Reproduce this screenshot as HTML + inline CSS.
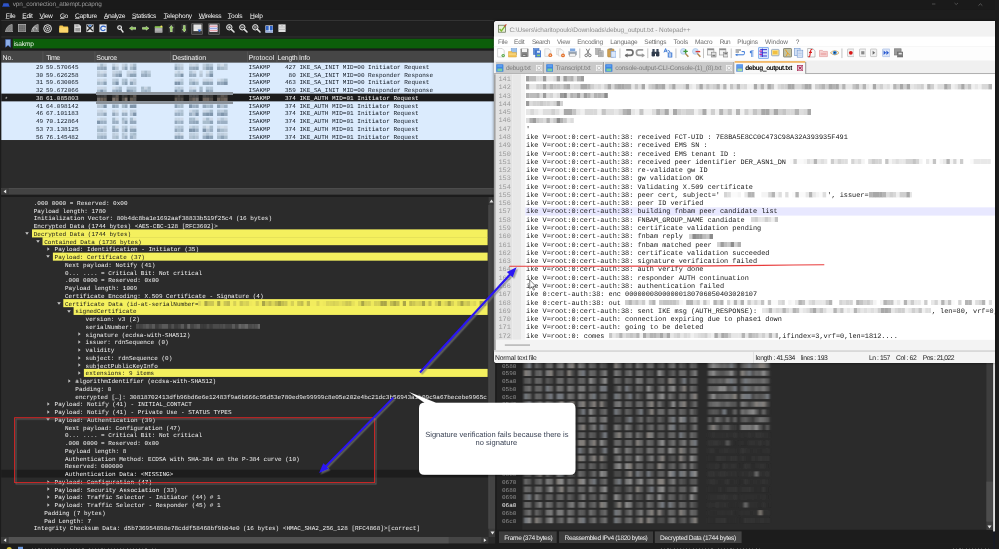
<!DOCTYPE html>
<html><head><meta charset="utf-8"><title>vpn_connection_attempt.pcapng</title>
<style>
html,body{margin:0;padding:0;background:#2b2b2b;}
body{width:999px;height:549px;overflow:hidden;position:relative;font-family:"Liberation Sans",sans-serif;}
#r{position:absolute;left:0;top:0;width:999px;height:549px;overflow:hidden;background:#2b2b2b;will-change:transform;}
#r div,#r span,#r svg{position:absolute;}
#r span{white-space:pre;line-height:1.2;text-rendering:geometricPrecision;}
.s{font-family:"Liberation Sans",sans-serif;}
.m{font-family:"Liberation Mono",monospace;}
u{text-decoration:underline;text-underline-offset:0.1px;text-decoration-thickness:0.5px;text-decoration-color:rgba(255,255,255,.55);}
</style></head><body><div id="r">
<svg style="left:0px;top:0px" width="999" height="22"><rect x="0.00" y="0.00" width="999.00" height="21.50" fill="#1d1d1d"/></svg>
<svg style="left:0px;top:0px" width="999" height="10"><rect x="0.00" y="0.00" width="999.00" height="9.80" fill="#1a1a1a"/></svg>
<svg style="left:0px;top:20px" width="494" height="2"><rect x="0.00" y="0.20" width="494.00" height="0.90" fill="#3a3a3a"/></svg>
<svg style="left:0px;top:21px" width="494" height="17"><rect x="0.00" y="0.10" width="494.00" height="16.20" fill="#1f1f1f"/></svg>
<svg style="left:0px;top:36px" width="494" height="2"><rect x="0.00" y="0.60" width="494.00" height="0.90" fill="#3a3a3a"/></svg>
<svg style="left:0px;top:37px" width="494" height="14"><rect x="0.00" y="0.50" width="494.00" height="13.00" fill="#1f1f1f"/></svg>
<svg style="left:0px;top:48px" width="494" height="3"><rect x="0.00" y="0.40" width="494.00" height="2.40" fill="#1b1b1b"/></svg>
<svg style="left:1.7px;top:2.8px" width="8" height="4.4" viewBox="0 0 9 5"><path d="M1.6 0.3 L7.2 0.3 L8.6 4.4 L0.3 4.4 Z" fill="#2f55c8"/><path d="M0.3 3.8 L8.6 3.8 L8.6 4.6 L0.3 4.6Z" fill="#1b3a9a"/></svg>
<span class="s" style="left:12.80px;top:1px;font-size:6.4px;color:#9a9a9a;letter-spacing:-0.121px;">vpn_connection_attempt.pcapng</span>
<svg style="left:932px;top:3px" width="4" height="2"><rect x="0.00" y="0.60" width="3.40" height="0.80" fill="#5a5a5a"/></svg>
<svg style="left:952px;top:2px" width="34" height="6" viewBox="0 0 34 6"><path d="M2.5 1 L4.2 2.6 L6 1" stroke="#5a5a5a" stroke-width="0.8" fill="none"/><path d="M26.5 3.6 L28.4 1.8 L30.3 3.6" stroke="#666" stroke-width="0.8" fill="none"/></svg>
<span class="s" style="left:5.7px;top:13px;font-size:6.6px;color:#f2f2f2;letter-spacing:-0.259px"><u>F</u>ile</span>
<span class="s" style="left:22.3px;top:13px;font-size:6.6px;color:#f2f2f2;letter-spacing:-0.293px"><u>E</u>dit</span>
<span class="s" style="left:39.5px;top:13px;font-size:6.6px;color:#f2f2f2;letter-spacing:-0.297px"><u>V</u>iew</span>
<span class="s" style="left:60px;top:13px;font-size:6.6px;color:#f2f2f2;letter-spacing:-0.652px"><u>G</u>o</span>
<span class="s" style="left:75px;top:13px;font-size:6.6px;color:#f2f2f2;letter-spacing:-0.212px"><u>C</u>apture</span>
<span class="s" style="left:104px;top:13px;font-size:6.6px;color:#f2f2f2;letter-spacing:-0.354px"><u>A</u>nalyze</span>
<span class="s" style="left:132px;top:13px;font-size:6.6px;color:#f2f2f2;letter-spacing:-0.221px"><u>S</u>tatistics</span>
<span class="s" style="left:163.7px;top:13px;font-size:6.6px;color:#f2f2f2;letter-spacing:-0.199px"><u>T</u>elephony</span>
<span class="s" style="left:198.7px;top:13px;font-size:6.6px;color:#f2f2f2;letter-spacing:-0.350px"><u>W</u>ireless</span>
<span class="s" style="left:227.8px;top:13px;font-size:6.6px;color:#f2f2f2;letter-spacing:-0.142px"><u>T</u>ools</span>
<span class="s" style="left:250px;top:13px;font-size:6.6px;color:#f2f2f2;letter-spacing:-0.219px"><u>H</u>elp</span>
<svg style="left:4.80px;top:23.90px" width="8.4" height="8.6" viewBox="0 0 8.4 8.6"><path d="M0.4 8.1 Q1 2.2 6.4 0.5 L7.2 0.5 L7.2 6.8 L8 8.1 Z" fill="#7c7c7c" stroke="#c0c0c0" stroke-width="0.6"/><path d="M2 7.4 Q3 4 6.4 2.4 M4 7.6 Q4.6 5.4 6.6 4.6" stroke="#a0a0a0" stroke-width="0.4" fill="none"/></svg>
<svg style="left:17.80px;top:24.00px" width="8.4" height="8.4" viewBox="0 0 8.4 8.4"><rect x="0.5" y="0.5" width="7.4" height="7.4" fill="#6a6a6a" stroke="#b4b4b4" stroke-width="0.8"/><path d="M2.9 0.8 V7.6 M5.5 0.8 V7.6 M0.8 2.9 H7.6 M0.8 5.5 H7.6" stroke="#7e7e7e" stroke-width="0.5"/></svg>
<svg style="left:30.60px;top:23.90px" width="8.4" height="8.6" viewBox="0 0 8.4 8.6"><path d="M0.4 8.1 Q1 2.2 6.4 0.5 L7.2 0.5 L7.2 6.8 L8 8.1 Z" fill="#7c7c7c" stroke="#c0c0c0" stroke-width="0.6"/><path d="M3 6.6 A1.9 1.9 0 1 1 5.6 5.4" stroke="#dadada" stroke-width="0.7" fill="none"/></svg>
<svg style="left:43.20px;top:23.50px" width="9.2" height="9.2" viewBox="0 0 9.2 9.2"><circle cx="4.6" cy="4.6" r="3.9" fill="#2a2a2a" stroke="#e4e4e4" stroke-width="1"/><circle cx="4.6" cy="4.6" r="2.1" fill="none" stroke="#dcdcdc" stroke-width="0.8"/><circle cx="4.6" cy="4.6" r="0.8" fill="#f0f0f0"/></svg>
<svg style="left:59.45px;top:24.60px" width="9.5" height="8" viewBox="0 0 9.5 8"><path d="M0.3 1.2 Q0.3 0.5 1 0.5 L3.6 0.5 L4.5 1.6 L8.6 1.6 Q9.2 1.6 9.2 2.3 L9.2 7 Q9.2 7.6 8.6 7.6 L1 7.6 Q0.3 7.6 0.3 7 Z" fill="#f5c64a"/><rect x="0.3" y="2.6" width="8.9" height="5" rx="0.5" fill="#fbd76c"/></svg>
<svg style="left:73.75px;top:24.35px" width="7.5" height="8.5" viewBox="0 0 7.5 8.5"><path d="M0.4 0.4 L5 0.4 L7.1 2.4 L7.1 8.1 L0.4 8.1 Z" fill="#dcdcdc" stroke="#f4f4f4" stroke-width="0.4"/><rect x="1.3" y="4" width="4.9" height="3.4" fill="#9b9b9b"/><rect x="1.5" y="1.2" width="3" height="1.6" fill="#aaa"/></svg>
<svg style="left:86.00px;top:24.35px" width="8" height="8.5" viewBox="0 0 8 8.5"><rect x="0.4" y="0.4" width="7.2" height="7.7" fill="#e6e6e6"/><path d="M1 1.2 L7 7 M7 1.2 L1 7" stroke="#2a2a2a" stroke-width="1.3"/><rect x="2.6" y="0.8" width="2.8" height="1.8" fill="#4f88d8"/></svg>
<svg style="left:99.00px;top:24.35px" width="8" height="8.5" viewBox="0 0 8 8.5"><rect x="0.4" y="0.4" width="7.2" height="7.7" fill="#e8ecf2"/><path d="M5.9 3 A2.3 2.3 0 1 0 6.2 5.2" stroke="#2f62c4" stroke-width="1.2" fill="none"/><path d="M4.6 1.8 L6.8 2 L6.4 4 Z" fill="#2f62c4"/></svg>
<svg style="left:116.70px;top:24.60px" width="7" height="8" viewBox="0 0 7 8"><circle cx="2.6" cy="2.6" r="1.9" fill="#3a3a3a" stroke="#f0f0f0" stroke-width="1.1"/><path d="M4.1 4.3 L6 7" stroke="#e8e8e8" stroke-width="1.4" stroke-linecap="round"/></svg>
<svg style="left:128.90px;top:26.10px" width="7.4" height="4.6" viewBox="0 0 7.4 4.6"><path d="M0.4 2.3 L3.2 0.4 L3.2 1.4 L7 1.4 L7 3.2 L3.2 3.2 L3.2 4.2 Z" fill="#8ccc52" stroke="#e6f6d2" stroke-width="0.5"/></svg>
<svg style="left:141.50px;top:26.10px" width="7.4" height="4.6" viewBox="0 0 7.4 4.6"><path d="M7 2.3 L4.2 0.4 L4.2 1.4 L0.4 1.4 L0.4 3.2 L4.2 3.2 L4.2 4.2 Z" fill="#8ccc52" stroke="#e6f6d2" stroke-width="0.5"/></svg>
<svg style="left:154.10px;top:24.60px" width="9" height="8" viewBox="0 0 9 8"><rect x="0.8" y="2.2" width="7.6" height="5.4" fill="#d4d4d4"/><path d="M1 3.8 H8.2 M1 5.2 H8.2 M1 6.6 H8.2" stroke="#6d6d6d" stroke-width="0.55"/><rect x="0.8" y="1.2" width="7.6" height="1.6" fill="#86c54a"/><circle cx="7.4" cy="1.4" r="1" fill="#f2e060"/></svg>
<svg style="left:168px;top:24px" width="7" height="10"><rect x="0.40" y="0.00" width="6.40" height="9.20" fill="#2c2c2c"/></svg>
<svg style="left:181px;top:24px" width="7" height="10"><rect x="0.00" y="0.00" width="6.40" height="9.20" fill="#2c2c2c"/></svg>
<svg style="left:169.20px;top:24.70px" width="4.6" height="7.4" viewBox="0 0 4.6 7.4"><path d="M2.3 0.4 L4.2 3 L3.2 3 L3.2 7 L1.4 7 L1.4 3 L0.4 3 Z" fill="#8ccc52" stroke="#e6f6d2" stroke-width="0.5"/></svg>
<svg style="left:181.90px;top:24.70px" width="4.6" height="7.4" viewBox="0 0 4.6 7.4"><path d="M2.3 7 L4.2 4.4 L3.2 4.4 L3.2 0.4 L1.4 0.4 L1.4 4.4 L0.4 4.4 Z" fill="#8ccc52" stroke="#e6f6d2" stroke-width="0.5"/></svg>
<div style="left:191.20px;top:22.60px;width:12.00px;height:12.20px;background:#3a3a3a;border:0.6px solid #555;box-sizing:border-box;border-radius:1px;"></div>
<svg style="left:192.70px;top:24.35px" width="9" height="8.5" viewBox="0 0 9 8.5"><rect x="0.5" y="0.5" width="8" height="6.6" fill="#ececec"/><path d="M1 2 H8 M1 3.4 H8 M1 4.8 H8" stroke="#d0d0d0" stroke-width="0.5"/><path d="M4.6 5.6 L8.4 5.6 L6.5 8.2 Z" fill="#2d63c8"/></svg>
<div style="left:207.60px;top:22.60px;width:12.00px;height:12.20px;background:#3a3a3a;border:0.6px solid #555;box-sizing:border-box;border-radius:1px;"></div>
<svg style="left:209.10px;top:24.35px" width="9" height="8.5" viewBox="0 0 9 8.5"><rect x="0.5" y="0.5" width="8" height="7.5" fill="#e6e6f0"/><rect x="0.5" y="1.6" width="8" height="1.3" fill="#e8a0a8"/><rect x="0.5" y="3.8" width="8" height="1.3" fill="#98a8e8"/><rect x="0.5" y="6" width="8" height="1.2" fill="#e8a0a8"/></svg>
<svg style="left:226.10px;top:24.10px" width="9" height="9" viewBox="0 0 9 9"><circle cx="3.3" cy="3.3" r="2.7" fill="#3c3c3c" stroke="#ececec" stroke-width="1"/><path d="M5.4 5.4 L8 8" stroke="#e0e0e0" stroke-width="1.5" stroke-linecap="round"/><path d="M1.9 3.3 H4.7 M3.3 1.9 V4.7" stroke="#fff" stroke-width="0.7"/></svg>
<svg style="left:238.90px;top:24.10px" width="9" height="9" viewBox="0 0 9 9"><circle cx="3.3" cy="3.3" r="2.7" fill="#3c3c3c" stroke="#ececec" stroke-width="1"/><path d="M5.4 5.4 L8 8" stroke="#e0e0e0" stroke-width="1.5" stroke-linecap="round"/><path d="M1.9 3.3 H4.7" stroke="#fff" stroke-width="0.7"/></svg>
<svg style="left:251.90px;top:24.10px" width="9" height="9" viewBox="0 0 9 9"><circle cx="3.3" cy="3.3" r="2.7" fill="#3c3c3c" stroke="#ececec" stroke-width="1"/><path d="M5.4 5.4 L8 8" stroke="#e0e0e0" stroke-width="1.5" stroke-linecap="round"/><path d="M2.1 2.8 H4.5 M2.1 3.9 H4.5" stroke="#fff" stroke-width="0.55"/></svg>
<svg style="left:264.75px;top:24.60px" width="8.5" height="8" viewBox="0 0 8.5 8"><rect x="0.4" y="0.4" width="7.7" height="7.2" fill="#e4eaf4"/><rect x="0.8" y="1" width="2.9" height="4.4" fill="#2f62c4"/><rect x="4.8" y="1" width="2.9" height="4.4" fill="#2f62c4"/><rect x="0.4" y="6" width="7.7" height="1.6" fill="#9ab0dc"/></svg>
<svg style="left:277.80px;top:24.40px" width="8" height="8.4" viewBox="0 0 8 8.4"><rect x="0.4" y="0.4" width="7.2" height="7.6" fill="#e0e0e0"/><path d="M0.4 3 H7.6 M0.4 5.4 H7.6" stroke="#ababab" stroke-width="0.7"/><rect x="3" y="0.8" width="2" height="1.6" fill="#c4c4c4"/></svg>
<svg style="left:4.6px;top:39.4px" width="6" height="8.6" viewBox="0 0 6 8.6"><path d="M0.6 0.4 H5.4 V8.2 L3 6.2 L0.6 8.2 Z" fill="#8fb0e8" stroke="#4a6fbf" stroke-width="0.6"/></svg>
<svg style="left:12px;top:38px" width="483" height="11"><rect x="0.80" y="0.80" width="481.50" height="9.60" fill="#0c5e0a"/></svg>
<span class="s" style="left:13.80px;top:41px;font-size:6.6px;color:#e8f2e6;letter-spacing:-0.151px;">isakmp</span>
<svg style="left:0px;top:50px" width="495" height="13"><rect x="0.80" y="0.70" width="493.50" height="11.90" fill="#464646"/></svg>
<svg style="left:42px;top:51px" width="2" height="11"><rect x="0.60" y="0.50" width="0.70" height="10.40" fill="#5a5a5a"/></svg>
<svg style="left:94px;top:51px" width="2" height="11"><rect x="0.60" y="0.50" width="0.70" height="10.40" fill="#5a5a5a"/></svg>
<svg style="left:170px;top:51px" width="1" height="11"><rect x="0.00" y="0.50" width="0.70" height="10.40" fill="#5a5a5a"/></svg>
<svg style="left:247px;top:51px" width="1" height="11"><rect x="0.30" y="0.50" width="0.70" height="10.40" fill="#5a5a5a"/></svg>
<svg style="left:276px;top:51px" width="2" height="11"><rect x="0.60" y="0.50" width="0.70" height="10.40" fill="#5a5a5a"/></svg>
<svg style="left:298px;top:51px" width="1" height="11"><rect x="0.00" y="0.50" width="0.70" height="10.40" fill="#5a5a5a"/></svg>
<span class="s" style="left:2.60px;top:55px;font-size:7.0px;color:#f4f4f4;letter-spacing:-0.098px;">No.</span>
<span class="s" style="left:46.20px;top:55px;font-size:7.0px;color:#f4f4f4;letter-spacing:-0.424px;">Time</span>
<span class="s" style="left:96.20px;top:55px;font-size:7.0px;color:#f4f4f4;letter-spacing:-0.230px;">Source</span>
<span class="s" style="left:172.20px;top:55px;font-size:7.0px;color:#f4f4f4;letter-spacing:-0.111px;">Destination</span>
<span class="s" style="left:248.50px;top:55px;font-size:7.0px;color:#f4f4f4;letter-spacing:0.015px;">Protocol</span>
<span class="s" style="left:277.50px;top:55px;font-size:7.0px;color:#f4f4f4;letter-spacing:-0.268px;">Length</span>
<span class="s" style="left:299.00px;top:55px;font-size:7.0px;color:#f4f4f4;letter-spacing:-0.219px;">Info</span>
<svg style="left:1px;top:62px" width="494" height="79"><rect x="0.20" y="0.60" width="493.00" height="77.50" fill="#dbebfd"/></svg>
<svg style="left:1px;top:93px" width="494" height="9"><rect x="0.20" y="0.60" width="493.00" height="7.75" fill="#1c1c1c"/></svg>
<span class="m" style="left:35.99px;top:64px;font-size:6.0px;color:#121a24;letter-spacing:0.01px;">29</span>
<span class="m" style="left:46.00px;top:64px;font-size:6.0px;color:#121a24;letter-spacing:0.01px;">59.570645</span>
<span class="m" style="left:248.60px;top:64px;font-size:6.0px;color:#121a24;letter-spacing:0.01px;">ISAKMP</span>
<span class="m" style="left:284.99px;top:64px;font-size:6.0px;color:#121a24;letter-spacing:0.01px;">427</span>
<span class="m" style="left:299.50px;top:64px;font-size:6.0px;color:#121a24;letter-spacing:0.01px;">IKE_SA_INIT MID=00 Initiator Request</span>
<svg style="left:97.20px;top:62.60px;filter:blur(0.5px)" width="40.30" height="7.75"><rect x="0.00" y="0.6" width="3.30" height="3.2" fill="#d2deea"/><rect x="0.00" y="3.6" width="3.30" height="3.4" fill="#9cb0c4"/><rect x="3.20" y="0.6" width="3.30" height="3.2" fill="#a8bccc"/><rect x="3.20" y="3.6" width="3.30" height="3.4" fill="#94a8bc"/><rect x="6.40" y="0.6" width="3.30" height="3.2" fill="#c6d4e2"/><rect x="6.40" y="3.6" width="3.30" height="3.4" fill="#8ea4b8"/><rect x="15.20" y="0.6" width="3.30" height="3.2" fill="#becedd"/><rect x="15.20" y="3.6" width="3.30" height="3.4" fill="#8ea4b8"/><rect x="18.40" y="0.6" width="3.30" height="3.2" fill="#d2deea"/><rect x="18.40" y="3.6" width="3.30" height="3.4" fill="#b4c4d4"/><rect x="24.80" y="0.6" width="2.90" height="3.2" fill="#c6d4e2"/><rect x="24.80" y="3.6" width="2.90" height="3.4" fill="#b4c4d4"/><rect x="27.60" y="0.6" width="2.90" height="3.2" fill="#b4c6d6"/><rect x="27.60" y="3.6" width="2.90" height="3.4" fill="#8ea4b8"/><rect x="32.80" y="0.6" width="3.35" height="3.2" fill="#c6d4e2"/><rect x="32.80" y="3.6" width="3.35" height="3.4" fill="#a8bccc"/><rect x="36.05" y="0.6" width="3.35" height="3.2" fill="#a8bccc"/><rect x="36.05" y="3.6" width="3.35" height="3.4" fill="#8ea4b8"/></svg>
<svg style="left:172.50px;top:62.60px;filter:blur(0.5px)" width="55.50" height="7.75"><rect x="1.60" y="0.6" width="3.03" height="3.2" fill="#b4c6d6"/><rect x="1.60" y="3.6" width="3.03" height="3.4" fill="#8ea4b8"/><rect x="4.53" y="0.6" width="3.03" height="3.2" fill="#becedd"/><rect x="4.53" y="3.6" width="3.03" height="3.4" fill="#a8bccc"/><rect x="7.47" y="0.6" width="3.03" height="3.2" fill="#c6d4e2"/><rect x="7.47" y="3.6" width="3.03" height="3.4" fill="#b4c4d4"/><rect x="16.00" y="0.6" width="3.30" height="3.2" fill="#c6d4e2"/><rect x="16.00" y="3.6" width="3.30" height="3.4" fill="#9cb0c4"/><rect x="19.20" y="0.6" width="3.30" height="3.2" fill="#ccd8e6"/><rect x="19.20" y="3.6" width="3.30" height="3.4" fill="#94a8bc"/><rect x="22.40" y="0.6" width="3.30" height="3.2" fill="#becedd"/><rect x="22.40" y="3.6" width="3.30" height="3.4" fill="#8ea4b8"/><rect x="29.60" y="0.6" width="3.57" height="3.2" fill="#becedd"/><rect x="29.60" y="3.6" width="3.57" height="3.4" fill="#b4c4d4"/><rect x="33.07" y="0.6" width="3.57" height="3.2" fill="#a8bccc"/><rect x="33.07" y="3.6" width="3.57" height="3.4" fill="#8ea4b8"/><rect x="36.53" y="0.6" width="3.57" height="3.2" fill="#b4c6d6"/><rect x="36.53" y="3.6" width="3.57" height="3.4" fill="#8ea4b8"/><rect x="44.00" y="0.6" width="3.60" height="3.2" fill="#becedd"/><rect x="44.00" y="3.6" width="3.60" height="3.4" fill="#9cb0c4"/><rect x="47.50" y="0.6" width="3.60" height="3.2" fill="#d2deea"/><rect x="47.50" y="3.6" width="3.60" height="3.4" fill="#a8bccc"/><rect x="51.00" y="0.6" width="3.60" height="3.2" fill="#b4c6d6"/><rect x="51.00" y="3.6" width="3.60" height="3.4" fill="#b4c4d4"/></svg>
<span class="m" style="left:35.99px;top:72px;font-size:6.0px;color:#121a24;letter-spacing:0.01px;">30</span>
<span class="m" style="left:46.00px;top:72px;font-size:6.0px;color:#121a24;letter-spacing:0.01px;">59.626258</span>
<span class="m" style="left:248.60px;top:72px;font-size:6.0px;color:#121a24;letter-spacing:0.01px;">ISAKMP</span>
<span class="m" style="left:288.59px;top:72px;font-size:6.0px;color:#121a24;letter-spacing:0.01px;">80</span>
<span class="m" style="left:299.50px;top:72px;font-size:6.0px;color:#121a24;letter-spacing:0.01px;">IKE_SA_INIT MID=00 Responder Response</span>
<svg style="left:97.20px;top:70.35px;filter:blur(0.5px)" width="54.70" height="7.75"><rect x="0.00" y="0.6" width="3.30" height="3.2" fill="#c6d4e2"/><rect x="0.00" y="3.6" width="3.30" height="3.4" fill="#b4c4d4"/><rect x="3.20" y="0.6" width="3.30" height="3.2" fill="#d2deea"/><rect x="3.20" y="3.6" width="3.30" height="3.4" fill="#b4c4d4"/><rect x="6.40" y="0.6" width="3.30" height="3.2" fill="#ccd8e6"/><rect x="6.40" y="3.6" width="3.30" height="3.4" fill="#9cb0c4"/><rect x="15.20" y="0.6" width="3.30" height="3.2" fill="#c6d4e2"/><rect x="15.20" y="3.6" width="3.30" height="3.4" fill="#b4c4d4"/><rect x="18.40" y="0.6" width="3.30" height="3.2" fill="#becedd"/><rect x="18.40" y="3.6" width="3.30" height="3.4" fill="#94a8bc"/><rect x="21.60" y="0.6" width="3.30" height="3.2" fill="#b4c6d6"/><rect x="21.60" y="3.6" width="3.30" height="3.4" fill="#8096ac"/><rect x="29.60" y="0.6" width="3.33" height="3.2" fill="#c6d4e2"/><rect x="29.60" y="3.6" width="3.33" height="3.4" fill="#b4c4d4"/><rect x="32.83" y="0.6" width="3.33" height="3.2" fill="#ccd8e6"/><rect x="32.83" y="3.6" width="3.33" height="3.4" fill="#8ea4b8"/><rect x="36.07" y="0.6" width="3.33" height="3.2" fill="#becedd"/><rect x="36.07" y="3.6" width="3.33" height="3.4" fill="#8ea4b8"/><rect x="44.00" y="0.6" width="3.33" height="3.2" fill="#becedd"/><rect x="44.00" y="3.6" width="3.33" height="3.4" fill="#9cb0c4"/><rect x="47.23" y="0.6" width="3.33" height="3.2" fill="#a8bccc"/><rect x="47.23" y="3.6" width="3.33" height="3.4" fill="#94a8bc"/><rect x="50.47" y="0.6" width="3.33" height="3.2" fill="#becedd"/><rect x="50.47" y="3.6" width="3.33" height="3.4" fill="#a8bccc"/></svg>
<svg style="left:172.50px;top:70.35px;filter:blur(0.5px)" width="41.00" height="7.75"><rect x="1.60" y="0.6" width="3.03" height="3.2" fill="#d2deea"/><rect x="1.60" y="3.6" width="3.03" height="3.4" fill="#a8bccc"/><rect x="4.53" y="0.6" width="3.03" height="3.2" fill="#becedd"/><rect x="4.53" y="3.6" width="3.03" height="3.4" fill="#a8bccc"/><rect x="7.47" y="0.6" width="3.03" height="3.2" fill="#d2deea"/><rect x="7.47" y="3.6" width="3.03" height="3.4" fill="#8096ac"/><rect x="16.00" y="0.6" width="3.70" height="3.2" fill="#b4c6d6"/><rect x="16.00" y="3.6" width="3.70" height="3.4" fill="#9cb0c4"/><rect x="19.60" y="0.6" width="3.70" height="3.2" fill="#ccd8e6"/><rect x="19.60" y="3.6" width="3.70" height="3.4" fill="#9cb0c4"/><rect x="26.40" y="0.6" width="3.30" height="3.2" fill="#c6d4e2"/><rect x="26.40" y="3.6" width="3.30" height="3.4" fill="#b4c4d4"/><rect x="32.80" y="0.6" width="3.70" height="3.2" fill="#d2deea"/><rect x="32.80" y="3.6" width="3.70" height="3.4" fill="#b4c4d4"/><rect x="36.40" y="0.6" width="3.70" height="3.2" fill="#a8bccc"/><rect x="36.40" y="3.6" width="3.70" height="3.4" fill="#8096ac"/></svg>
<span class="m" style="left:35.99px;top:79px;font-size:6.0px;color:#121a24;letter-spacing:0.01px;">31</span>
<span class="m" style="left:46.00px;top:79px;font-size:6.0px;color:#121a24;letter-spacing:0.01px;">59.630065</span>
<span class="m" style="left:248.60px;top:79px;font-size:6.0px;color:#121a24;letter-spacing:0.01px;">ISAKMP</span>
<span class="m" style="left:284.99px;top:79px;font-size:6.0px;color:#121a24;letter-spacing:0.01px;">463</span>
<span class="m" style="left:299.50px;top:79px;font-size:6.0px;color:#121a24;letter-spacing:0.01px;">IKE_SA_INIT MID=00 Initiator Request</span>
<svg style="left:97.20px;top:78.10px;filter:blur(0.5px)" width="40.30" height="7.75"><rect x="0.00" y="0.6" width="3.30" height="3.2" fill="#ccd8e6"/><rect x="0.00" y="3.6" width="3.30" height="3.4" fill="#a8bccc"/><rect x="3.20" y="0.6" width="3.30" height="3.2" fill="#d2deea"/><rect x="3.20" y="3.6" width="3.30" height="3.4" fill="#b4c4d4"/><rect x="6.40" y="0.6" width="3.30" height="3.2" fill="#c6d4e2"/><rect x="6.40" y="3.6" width="3.30" height="3.4" fill="#8ea4b8"/><rect x="15.20" y="0.6" width="3.30" height="3.2" fill="#becedd"/><rect x="15.20" y="3.6" width="3.30" height="3.4" fill="#a8bccc"/><rect x="18.40" y="0.6" width="3.30" height="3.2" fill="#b4c6d6"/><rect x="18.40" y="3.6" width="3.30" height="3.4" fill="#8096ac"/><rect x="24.80" y="0.6" width="2.90" height="3.2" fill="#b4c6d6"/><rect x="24.80" y="3.6" width="2.90" height="3.4" fill="#a8bccc"/><rect x="27.60" y="0.6" width="2.90" height="3.2" fill="#a8bccc"/><rect x="27.60" y="3.6" width="2.90" height="3.4" fill="#8ea4b8"/><rect x="32.80" y="0.6" width="3.35" height="3.2" fill="#ccd8e6"/><rect x="32.80" y="3.6" width="3.35" height="3.4" fill="#8ea4b8"/><rect x="36.05" y="0.6" width="3.35" height="3.2" fill="#becedd"/><rect x="36.05" y="3.6" width="3.35" height="3.4" fill="#b4c4d4"/></svg>
<svg style="left:172.50px;top:78.10px;filter:blur(0.5px)" width="55.50" height="7.75"><rect x="1.60" y="0.6" width="3.03" height="3.2" fill="#d2deea"/><rect x="1.60" y="3.6" width="3.03" height="3.4" fill="#8096ac"/><rect x="4.53" y="0.6" width="3.03" height="3.2" fill="#ccd8e6"/><rect x="4.53" y="3.6" width="3.03" height="3.4" fill="#8096ac"/><rect x="7.47" y="0.6" width="3.03" height="3.2" fill="#becedd"/><rect x="7.47" y="3.6" width="3.03" height="3.4" fill="#a8bccc"/><rect x="16.00" y="0.6" width="3.30" height="3.2" fill="#becedd"/><rect x="16.00" y="3.6" width="3.30" height="3.4" fill="#a8bccc"/><rect x="19.20" y="0.6" width="3.30" height="3.2" fill="#c6d4e2"/><rect x="19.20" y="3.6" width="3.30" height="3.4" fill="#8ea4b8"/><rect x="22.40" y="0.6" width="3.30" height="3.2" fill="#d2deea"/><rect x="22.40" y="3.6" width="3.30" height="3.4" fill="#a8bccc"/><rect x="29.60" y="0.6" width="3.57" height="3.2" fill="#ccd8e6"/><rect x="29.60" y="3.6" width="3.57" height="3.4" fill="#94a8bc"/><rect x="33.07" y="0.6" width="3.57" height="3.2" fill="#c6d4e2"/><rect x="33.07" y="3.6" width="3.57" height="3.4" fill="#8ea4b8"/><rect x="36.53" y="0.6" width="3.57" height="3.2" fill="#ccd8e6"/><rect x="36.53" y="3.6" width="3.57" height="3.4" fill="#94a8bc"/><rect x="44.00" y="0.6" width="3.60" height="3.2" fill="#d2deea"/><rect x="44.00" y="3.6" width="3.60" height="3.4" fill="#94a8bc"/><rect x="47.50" y="0.6" width="3.60" height="3.2" fill="#becedd"/><rect x="47.50" y="3.6" width="3.60" height="3.4" fill="#94a8bc"/><rect x="51.00" y="0.6" width="3.60" height="3.2" fill="#a8bccc"/><rect x="51.00" y="3.6" width="3.60" height="3.4" fill="#8096ac"/></svg>
<span class="m" style="left:35.99px;top:87px;font-size:6.0px;color:#121a24;letter-spacing:0.01px;">32</span>
<span class="m" style="left:46.00px;top:87px;font-size:6.0px;color:#121a24;letter-spacing:0.01px;">59.672066</span>
<span class="m" style="left:248.60px;top:87px;font-size:6.0px;color:#121a24;letter-spacing:0.01px;">ISAKMP</span>
<span class="m" style="left:284.99px;top:87px;font-size:6.0px;color:#121a24;letter-spacing:0.01px;">359</span>
<span class="m" style="left:299.50px;top:87px;font-size:6.0px;color:#121a24;letter-spacing:0.01px;">IKE_SA_INIT MID=00 Responder Response</span>
<svg style="left:97.20px;top:85.85px;filter:blur(0.5px)" width="54.70" height="7.75"><rect x="0.00" y="0.6" width="3.30" height="3.2" fill="#ccd8e6"/><rect x="0.00" y="3.6" width="3.30" height="3.4" fill="#a8bccc"/><rect x="3.20" y="0.6" width="3.30" height="3.2" fill="#ccd8e6"/><rect x="3.20" y="3.6" width="3.30" height="3.4" fill="#8096ac"/><rect x="6.40" y="0.6" width="3.30" height="3.2" fill="#c6d4e2"/><rect x="6.40" y="3.6" width="3.30" height="3.4" fill="#a8bccc"/><rect x="15.20" y="0.6" width="3.30" height="3.2" fill="#d2deea"/><rect x="15.20" y="3.6" width="3.30" height="3.4" fill="#9cb0c4"/><rect x="18.40" y="0.6" width="3.30" height="3.2" fill="#becedd"/><rect x="18.40" y="3.6" width="3.30" height="3.4" fill="#8ea4b8"/><rect x="21.60" y="0.6" width="3.30" height="3.2" fill="#a8bccc"/><rect x="21.60" y="3.6" width="3.30" height="3.4" fill="#8ea4b8"/><rect x="29.60" y="0.6" width="3.33" height="3.2" fill="#b4c6d6"/><rect x="29.60" y="3.6" width="3.33" height="3.4" fill="#8096ac"/><rect x="32.83" y="0.6" width="3.33" height="3.2" fill="#b4c6d6"/><rect x="32.83" y="3.6" width="3.33" height="3.4" fill="#94a8bc"/><rect x="36.07" y="0.6" width="3.33" height="3.2" fill="#b4c6d6"/><rect x="36.07" y="3.6" width="3.33" height="3.4" fill="#a8bccc"/><rect x="44.00" y="0.6" width="3.33" height="3.2" fill="#a8bccc"/><rect x="44.00" y="3.6" width="3.33" height="3.4" fill="#a8bccc"/><rect x="47.23" y="0.6" width="3.33" height="3.2" fill="#c6d4e2"/><rect x="47.23" y="3.6" width="3.33" height="3.4" fill="#9cb0c4"/><rect x="50.47" y="0.6" width="3.33" height="3.2" fill="#a8bccc"/><rect x="50.47" y="3.6" width="3.33" height="3.4" fill="#a8bccc"/></svg>
<svg style="left:172.50px;top:85.85px;filter:blur(0.5px)" width="41.00" height="7.75"><rect x="1.60" y="0.6" width="3.03" height="3.2" fill="#becedd"/><rect x="1.60" y="3.6" width="3.03" height="3.4" fill="#8096ac"/><rect x="4.53" y="0.6" width="3.03" height="3.2" fill="#b4c6d6"/><rect x="4.53" y="3.6" width="3.03" height="3.4" fill="#a8bccc"/><rect x="7.47" y="0.6" width="3.03" height="3.2" fill="#becedd"/><rect x="7.47" y="3.6" width="3.03" height="3.4" fill="#8096ac"/><rect x="16.00" y="0.6" width="3.70" height="3.2" fill="#ccd8e6"/><rect x="16.00" y="3.6" width="3.70" height="3.4" fill="#a8bccc"/><rect x="19.60" y="0.6" width="3.70" height="3.2" fill="#d2deea"/><rect x="19.60" y="3.6" width="3.70" height="3.4" fill="#94a8bc"/><rect x="26.40" y="0.6" width="3.30" height="3.2" fill="#a8bccc"/><rect x="26.40" y="3.6" width="3.30" height="3.4" fill="#9cb0c4"/><rect x="32.80" y="0.6" width="3.70" height="3.2" fill="#b4c6d6"/><rect x="32.80" y="3.6" width="3.70" height="3.4" fill="#8ea4b8"/><rect x="36.40" y="0.6" width="3.70" height="3.2" fill="#b4c6d6"/><rect x="36.40" y="3.6" width="3.70" height="3.4" fill="#9cb0c4"/></svg>
<span class="m" style="left:35.99px;top:95px;font-size:6.0px;color:#f4f4f4;letter-spacing:0.01px;">38</span>
<span class="m" style="left:46.00px;top:95px;font-size:6.0px;color:#f4f4f4;letter-spacing:0.01px;">61.085803</span>
<span class="m" style="left:248.60px;top:95px;font-size:6.0px;color:#f4f4f4;letter-spacing:0.01px;">ISAKMP</span>
<span class="m" style="left:284.99px;top:95px;font-size:6.0px;color:#f4f4f4;letter-spacing:0.01px;">374</span>
<span class="m" style="left:299.50px;top:95px;font-size:6.0px;color:#f4f4f4;letter-spacing:0.01px;">IKE_AUTH MID=01 Initiator Request</span>
<svg style="left:97.20px;top:93.60px;filter:blur(0.5px)" width="40.30" height="7.75"><rect x="0.00" y="0.6" width="3.30" height="3.2" fill="#3a3a3a"/><rect x="0.00" y="3.6" width="3.30" height="3.4" fill="#6e6a66"/><rect x="3.20" y="0.6" width="3.30" height="3.2" fill="#3a3a3a"/><rect x="3.20" y="3.6" width="3.30" height="3.4" fill="#6a6058"/><rect x="6.40" y="0.6" width="3.30" height="3.2" fill="#444"/><rect x="6.40" y="3.6" width="3.30" height="3.4" fill="#60584f"/><rect x="15.20" y="0.6" width="3.30" height="3.2" fill="#3a3a3a"/><rect x="15.20" y="3.6" width="3.30" height="3.4" fill="#7a7068"/><rect x="18.40" y="0.6" width="3.30" height="3.2" fill="#5a544e"/><rect x="18.40" y="3.6" width="3.30" height="3.4" fill="#6a6058"/><rect x="24.80" y="0.6" width="2.90" height="3.2" fill="#3a3a3a"/><rect x="24.80" y="3.6" width="2.90" height="3.4" fill="#4e4a46"/><rect x="27.60" y="0.6" width="2.90" height="3.2" fill="#35322f"/><rect x="27.60" y="3.6" width="2.90" height="3.4" fill="#7a7068"/><rect x="32.80" y="0.6" width="3.35" height="3.2" fill="#35322f"/><rect x="32.80" y="3.6" width="3.35" height="3.4" fill="#60584f"/><rect x="36.05" y="0.6" width="3.35" height="3.2" fill="#5a544e"/><rect x="36.05" y="3.6" width="3.35" height="3.4" fill="#585450"/></svg>
<svg style="left:172.50px;top:93.60px;filter:blur(0.5px)" width="55.50" height="7.75"><rect x="1.60" y="0.6" width="3.03" height="3.2" fill="#35322f"/><rect x="1.60" y="3.6" width="3.03" height="3.4" fill="#60584f"/><rect x="4.53" y="0.6" width="3.03" height="3.2" fill="#4a4642"/><rect x="4.53" y="3.6" width="3.03" height="3.4" fill="#4e4a46"/><rect x="7.47" y="0.6" width="3.03" height="3.2" fill="#35322f"/><rect x="7.47" y="3.6" width="3.03" height="3.4" fill="#4e4a46"/><rect x="16.00" y="0.6" width="3.30" height="3.2" fill="#444"/><rect x="16.00" y="3.6" width="3.30" height="3.4" fill="#4e4a46"/><rect x="19.20" y="0.6" width="3.30" height="3.2" fill="#444"/><rect x="19.20" y="3.6" width="3.30" height="3.4" fill="#6a6058"/><rect x="22.40" y="0.6" width="3.30" height="3.2" fill="#444"/><rect x="22.40" y="3.6" width="3.30" height="3.4" fill="#6e6a66"/><rect x="29.60" y="0.6" width="3.57" height="3.2" fill="#444"/><rect x="29.60" y="3.6" width="3.57" height="3.4" fill="#6a6058"/><rect x="33.07" y="0.6" width="3.57" height="3.2" fill="#3a3a3a"/><rect x="33.07" y="3.6" width="3.57" height="3.4" fill="#6a6058"/><rect x="36.53" y="0.6" width="3.57" height="3.2" fill="#3a3a3a"/><rect x="36.53" y="3.6" width="3.57" height="3.4" fill="#4e4a46"/><rect x="44.00" y="0.6" width="3.60" height="3.2" fill="#3a3a3a"/><rect x="44.00" y="3.6" width="3.60" height="3.4" fill="#6a6058"/><rect x="47.50" y="0.6" width="3.60" height="3.2" fill="#5a544e"/><rect x="47.50" y="3.6" width="3.60" height="3.4" fill="#60584f"/><rect x="51.00" y="0.6" width="3.60" height="3.2" fill="#4a4642"/><rect x="51.00" y="3.6" width="3.60" height="3.4" fill="#6a6058"/></svg>
<span class="m" style="left:35.99px;top:103px;font-size:6.0px;color:#121a24;letter-spacing:0.01px;">41</span>
<span class="m" style="left:46.00px;top:103px;font-size:6.0px;color:#121a24;letter-spacing:0.01px;">64.098142</span>
<span class="m" style="left:248.60px;top:103px;font-size:6.0px;color:#121a24;letter-spacing:0.01px;">ISAKMP</span>
<span class="m" style="left:284.99px;top:103px;font-size:6.0px;color:#121a24;letter-spacing:0.01px;">374</span>
<span class="m" style="left:299.50px;top:103px;font-size:6.0px;color:#121a24;letter-spacing:0.01px;">IKE_AUTH MID=01 Initiator Request</span>
<svg style="left:97.20px;top:101.35px;filter:blur(0.5px)" width="40.30" height="7.75"><rect x="0.00" y="0.6" width="3.30" height="3.2" fill="#c6d4e2"/><rect x="0.00" y="3.6" width="3.30" height="3.4" fill="#b4c4d4"/><rect x="3.20" y="0.6" width="3.30" height="3.2" fill="#b4c6d6"/><rect x="3.20" y="3.6" width="3.30" height="3.4" fill="#b4c4d4"/><rect x="6.40" y="0.6" width="3.30" height="3.2" fill="#c6d4e2"/><rect x="6.40" y="3.6" width="3.30" height="3.4" fill="#8096ac"/><rect x="15.20" y="0.6" width="3.30" height="3.2" fill="#becedd"/><rect x="15.20" y="3.6" width="3.30" height="3.4" fill="#8ea4b8"/><rect x="18.40" y="0.6" width="3.30" height="3.2" fill="#c6d4e2"/><rect x="18.40" y="3.6" width="3.30" height="3.4" fill="#9cb0c4"/><rect x="24.80" y="0.6" width="2.90" height="3.2" fill="#becedd"/><rect x="24.80" y="3.6" width="2.90" height="3.4" fill="#a8bccc"/><rect x="27.60" y="0.6" width="2.90" height="3.2" fill="#b4c6d6"/><rect x="27.60" y="3.6" width="2.90" height="3.4" fill="#94a8bc"/><rect x="32.80" y="0.6" width="3.35" height="3.2" fill="#d2deea"/><rect x="32.80" y="3.6" width="3.35" height="3.4" fill="#8096ac"/><rect x="36.05" y="0.6" width="3.35" height="3.2" fill="#becedd"/><rect x="36.05" y="3.6" width="3.35" height="3.4" fill="#8096ac"/></svg>
<svg style="left:172.50px;top:101.35px;filter:blur(0.5px)" width="55.50" height="7.75"><rect x="1.60" y="0.6" width="3.03" height="3.2" fill="#a8bccc"/><rect x="1.60" y="3.6" width="3.03" height="3.4" fill="#8ea4b8"/><rect x="4.53" y="0.6" width="3.03" height="3.2" fill="#c6d4e2"/><rect x="4.53" y="3.6" width="3.03" height="3.4" fill="#a8bccc"/><rect x="7.47" y="0.6" width="3.03" height="3.2" fill="#a8bccc"/><rect x="7.47" y="3.6" width="3.03" height="3.4" fill="#a8bccc"/><rect x="16.00" y="0.6" width="3.30" height="3.2" fill="#a8bccc"/><rect x="16.00" y="3.6" width="3.30" height="3.4" fill="#8096ac"/><rect x="19.20" y="0.6" width="3.30" height="3.2" fill="#c6d4e2"/><rect x="19.20" y="3.6" width="3.30" height="3.4" fill="#9cb0c4"/><rect x="22.40" y="0.6" width="3.30" height="3.2" fill="#c6d4e2"/><rect x="22.40" y="3.6" width="3.30" height="3.4" fill="#94a8bc"/><rect x="29.60" y="0.6" width="3.57" height="3.2" fill="#d2deea"/><rect x="29.60" y="3.6" width="3.57" height="3.4" fill="#94a8bc"/><rect x="33.07" y="0.6" width="3.57" height="3.2" fill="#d2deea"/><rect x="33.07" y="3.6" width="3.57" height="3.4" fill="#a8bccc"/><rect x="36.53" y="0.6" width="3.57" height="3.2" fill="#ccd8e6"/><rect x="36.53" y="3.6" width="3.57" height="3.4" fill="#9cb0c4"/><rect x="44.00" y="0.6" width="3.60" height="3.2" fill="#becedd"/><rect x="44.00" y="3.6" width="3.60" height="3.4" fill="#8ea4b8"/><rect x="47.50" y="0.6" width="3.60" height="3.2" fill="#b4c6d6"/><rect x="47.50" y="3.6" width="3.60" height="3.4" fill="#b4c4d4"/><rect x="51.00" y="0.6" width="3.60" height="3.2" fill="#d2deea"/><rect x="51.00" y="3.6" width="3.60" height="3.4" fill="#9cb0c4"/></svg>
<span class="m" style="left:35.99px;top:110px;font-size:6.0px;color:#121a24;letter-spacing:0.01px;">46</span>
<span class="m" style="left:46.00px;top:110px;font-size:6.0px;color:#121a24;letter-spacing:0.01px;">67.101183</span>
<span class="m" style="left:248.60px;top:110px;font-size:6.0px;color:#121a24;letter-spacing:0.01px;">ISAKMP</span>
<span class="m" style="left:284.99px;top:110px;font-size:6.0px;color:#121a24;letter-spacing:0.01px;">374</span>
<span class="m" style="left:299.50px;top:110px;font-size:6.0px;color:#121a24;letter-spacing:0.01px;">IKE_AUTH MID=01 Initiator Request</span>
<svg style="left:97.20px;top:109.10px;filter:blur(0.5px)" width="40.30" height="7.75"><rect x="0.00" y="0.6" width="3.30" height="3.2" fill="#ccd8e6"/><rect x="0.00" y="3.6" width="3.30" height="3.4" fill="#b4c4d4"/><rect x="3.20" y="0.6" width="3.30" height="3.2" fill="#c6d4e2"/><rect x="3.20" y="3.6" width="3.30" height="3.4" fill="#b4c4d4"/><rect x="6.40" y="0.6" width="3.30" height="3.2" fill="#d2deea"/><rect x="6.40" y="3.6" width="3.30" height="3.4" fill="#94a8bc"/><rect x="15.20" y="0.6" width="3.30" height="3.2" fill="#c6d4e2"/><rect x="15.20" y="3.6" width="3.30" height="3.4" fill="#94a8bc"/><rect x="18.40" y="0.6" width="3.30" height="3.2" fill="#d2deea"/><rect x="18.40" y="3.6" width="3.30" height="3.4" fill="#b4c4d4"/><rect x="24.80" y="0.6" width="2.90" height="3.2" fill="#d2deea"/><rect x="24.80" y="3.6" width="2.90" height="3.4" fill="#9cb0c4"/><rect x="27.60" y="0.6" width="2.90" height="3.2" fill="#d2deea"/><rect x="27.60" y="3.6" width="2.90" height="3.4" fill="#9cb0c4"/><rect x="32.80" y="0.6" width="3.35" height="3.2" fill="#becedd"/><rect x="32.80" y="3.6" width="3.35" height="3.4" fill="#b4c4d4"/><rect x="36.05" y="0.6" width="3.35" height="3.2" fill="#becedd"/><rect x="36.05" y="3.6" width="3.35" height="3.4" fill="#8096ac"/></svg>
<svg style="left:172.50px;top:109.10px;filter:blur(0.5px)" width="55.50" height="7.75"><rect x="1.60" y="0.6" width="3.03" height="3.2" fill="#ccd8e6"/><rect x="1.60" y="3.6" width="3.03" height="3.4" fill="#9cb0c4"/><rect x="4.53" y="0.6" width="3.03" height="3.2" fill="#becedd"/><rect x="4.53" y="3.6" width="3.03" height="3.4" fill="#9cb0c4"/><rect x="7.47" y="0.6" width="3.03" height="3.2" fill="#b4c6d6"/><rect x="7.47" y="3.6" width="3.03" height="3.4" fill="#a8bccc"/><rect x="16.00" y="0.6" width="3.30" height="3.2" fill="#ccd8e6"/><rect x="16.00" y="3.6" width="3.30" height="3.4" fill="#9cb0c4"/><rect x="19.20" y="0.6" width="3.30" height="3.2" fill="#b4c6d6"/><rect x="19.20" y="3.6" width="3.30" height="3.4" fill="#b4c4d4"/><rect x="22.40" y="0.6" width="3.30" height="3.2" fill="#a8bccc"/><rect x="22.40" y="3.6" width="3.30" height="3.4" fill="#8096ac"/><rect x="29.60" y="0.6" width="3.57" height="3.2" fill="#ccd8e6"/><rect x="29.60" y="3.6" width="3.57" height="3.4" fill="#8ea4b8"/><rect x="33.07" y="0.6" width="3.57" height="3.2" fill="#c6d4e2"/><rect x="33.07" y="3.6" width="3.57" height="3.4" fill="#8096ac"/><rect x="36.53" y="0.6" width="3.57" height="3.2" fill="#a8bccc"/><rect x="36.53" y="3.6" width="3.57" height="3.4" fill="#8096ac"/><rect x="44.00" y="0.6" width="3.60" height="3.2" fill="#b4c6d6"/><rect x="44.00" y="3.6" width="3.60" height="3.4" fill="#94a8bc"/><rect x="47.50" y="0.6" width="3.60" height="3.2" fill="#becedd"/><rect x="47.50" y="3.6" width="3.60" height="3.4" fill="#8096ac"/><rect x="51.00" y="0.6" width="3.60" height="3.2" fill="#a8bccc"/><rect x="51.00" y="3.6" width="3.60" height="3.4" fill="#94a8bc"/></svg>
<span class="m" style="left:35.99px;top:118px;font-size:6.0px;color:#121a24;letter-spacing:0.01px;">49</span>
<span class="m" style="left:46.00px;top:118px;font-size:6.0px;color:#121a24;letter-spacing:0.01px;">70.122864</span>
<span class="m" style="left:248.60px;top:118px;font-size:6.0px;color:#121a24;letter-spacing:0.01px;">ISAKMP</span>
<span class="m" style="left:284.99px;top:118px;font-size:6.0px;color:#121a24;letter-spacing:0.01px;">374</span>
<span class="m" style="left:299.50px;top:118px;font-size:6.0px;color:#121a24;letter-spacing:0.01px;">IKE_AUTH MID=01 Initiator Request</span>
<svg style="left:97.20px;top:116.85px;filter:blur(0.5px)" width="40.30" height="7.75"><rect x="0.00" y="0.6" width="3.30" height="3.2" fill="#d2deea"/><rect x="0.00" y="3.6" width="3.30" height="3.4" fill="#8096ac"/><rect x="3.20" y="0.6" width="3.30" height="3.2" fill="#c6d4e2"/><rect x="3.20" y="3.6" width="3.30" height="3.4" fill="#9cb0c4"/><rect x="6.40" y="0.6" width="3.30" height="3.2" fill="#c6d4e2"/><rect x="6.40" y="3.6" width="3.30" height="3.4" fill="#9cb0c4"/><rect x="15.20" y="0.6" width="3.30" height="3.2" fill="#a8bccc"/><rect x="15.20" y="3.6" width="3.30" height="3.4" fill="#9cb0c4"/><rect x="18.40" y="0.6" width="3.30" height="3.2" fill="#d2deea"/><rect x="18.40" y="3.6" width="3.30" height="3.4" fill="#9cb0c4"/><rect x="24.80" y="0.6" width="2.90" height="3.2" fill="#a8bccc"/><rect x="24.80" y="3.6" width="2.90" height="3.4" fill="#b4c4d4"/><rect x="27.60" y="0.6" width="2.90" height="3.2" fill="#becedd"/><rect x="27.60" y="3.6" width="2.90" height="3.4" fill="#8ea4b8"/><rect x="32.80" y="0.6" width="3.35" height="3.2" fill="#a8bccc"/><rect x="32.80" y="3.6" width="3.35" height="3.4" fill="#94a8bc"/><rect x="36.05" y="0.6" width="3.35" height="3.2" fill="#d2deea"/><rect x="36.05" y="3.6" width="3.35" height="3.4" fill="#94a8bc"/></svg>
<svg style="left:172.50px;top:116.85px;filter:blur(0.5px)" width="55.50" height="7.75"><rect x="1.60" y="0.6" width="3.03" height="3.2" fill="#c6d4e2"/><rect x="1.60" y="3.6" width="3.03" height="3.4" fill="#94a8bc"/><rect x="4.53" y="0.6" width="3.03" height="3.2" fill="#c6d4e2"/><rect x="4.53" y="3.6" width="3.03" height="3.4" fill="#a8bccc"/><rect x="7.47" y="0.6" width="3.03" height="3.2" fill="#ccd8e6"/><rect x="7.47" y="3.6" width="3.03" height="3.4" fill="#9cb0c4"/><rect x="16.00" y="0.6" width="3.30" height="3.2" fill="#a8bccc"/><rect x="16.00" y="3.6" width="3.30" height="3.4" fill="#9cb0c4"/><rect x="19.20" y="0.6" width="3.30" height="3.2" fill="#a8bccc"/><rect x="19.20" y="3.6" width="3.30" height="3.4" fill="#94a8bc"/><rect x="22.40" y="0.6" width="3.30" height="3.2" fill="#d2deea"/><rect x="22.40" y="3.6" width="3.30" height="3.4" fill="#8ea4b8"/><rect x="29.60" y="0.6" width="3.57" height="3.2" fill="#ccd8e6"/><rect x="29.60" y="3.6" width="3.57" height="3.4" fill="#a8bccc"/><rect x="33.07" y="0.6" width="3.57" height="3.2" fill="#a8bccc"/><rect x="33.07" y="3.6" width="3.57" height="3.4" fill="#a8bccc"/><rect x="36.53" y="0.6" width="3.57" height="3.2" fill="#ccd8e6"/><rect x="36.53" y="3.6" width="3.57" height="3.4" fill="#8ea4b8"/><rect x="44.00" y="0.6" width="3.60" height="3.2" fill="#ccd8e6"/><rect x="44.00" y="3.6" width="3.60" height="3.4" fill="#9cb0c4"/><rect x="47.50" y="0.6" width="3.60" height="3.2" fill="#b4c6d6"/><rect x="47.50" y="3.6" width="3.60" height="3.4" fill="#9cb0c4"/><rect x="51.00" y="0.6" width="3.60" height="3.2" fill="#c6d4e2"/><rect x="51.00" y="3.6" width="3.60" height="3.4" fill="#9cb0c4"/></svg>
<span class="m" style="left:35.99px;top:126px;font-size:6.0px;color:#121a24;letter-spacing:0.01px;">53</span>
<span class="m" style="left:46.00px;top:126px;font-size:6.0px;color:#121a24;letter-spacing:0.01px;">73.138125</span>
<span class="m" style="left:248.60px;top:126px;font-size:6.0px;color:#121a24;letter-spacing:0.01px;">ISAKMP</span>
<span class="m" style="left:284.99px;top:126px;font-size:6.0px;color:#121a24;letter-spacing:0.01px;">374</span>
<span class="m" style="left:299.50px;top:126px;font-size:6.0px;color:#121a24;letter-spacing:0.01px;">IKE_AUTH MID=01 Initiator Request</span>
<svg style="left:97.20px;top:124.60px;filter:blur(0.5px)" width="40.30" height="7.75"><rect x="0.00" y="0.6" width="3.30" height="3.2" fill="#becedd"/><rect x="0.00" y="3.6" width="3.30" height="3.4" fill="#a8bccc"/><rect x="3.20" y="0.6" width="3.30" height="3.2" fill="#ccd8e6"/><rect x="3.20" y="3.6" width="3.30" height="3.4" fill="#9cb0c4"/><rect x="6.40" y="0.6" width="3.30" height="3.2" fill="#becedd"/><rect x="6.40" y="3.6" width="3.30" height="3.4" fill="#b4c4d4"/><rect x="15.20" y="0.6" width="3.30" height="3.2" fill="#a8bccc"/><rect x="15.20" y="3.6" width="3.30" height="3.4" fill="#94a8bc"/><rect x="18.40" y="0.6" width="3.30" height="3.2" fill="#d2deea"/><rect x="18.40" y="3.6" width="3.30" height="3.4" fill="#9cb0c4"/><rect x="24.80" y="0.6" width="2.90" height="3.2" fill="#becedd"/><rect x="24.80" y="3.6" width="2.90" height="3.4" fill="#b4c4d4"/><rect x="27.60" y="0.6" width="2.90" height="3.2" fill="#b4c6d6"/><rect x="27.60" y="3.6" width="2.90" height="3.4" fill="#8ea4b8"/><rect x="32.80" y="0.6" width="3.35" height="3.2" fill="#c6d4e2"/><rect x="32.80" y="3.6" width="3.35" height="3.4" fill="#94a8bc"/><rect x="36.05" y="0.6" width="3.35" height="3.2" fill="#ccd8e6"/><rect x="36.05" y="3.6" width="3.35" height="3.4" fill="#8ea4b8"/></svg>
<svg style="left:172.50px;top:124.60px;filter:blur(0.5px)" width="55.50" height="7.75"><rect x="1.60" y="0.6" width="3.03" height="3.2" fill="#becedd"/><rect x="1.60" y="3.6" width="3.03" height="3.4" fill="#94a8bc"/><rect x="4.53" y="0.6" width="3.03" height="3.2" fill="#b4c6d6"/><rect x="4.53" y="3.6" width="3.03" height="3.4" fill="#a8bccc"/><rect x="7.47" y="0.6" width="3.03" height="3.2" fill="#b4c6d6"/><rect x="7.47" y="3.6" width="3.03" height="3.4" fill="#9cb0c4"/><rect x="16.00" y="0.6" width="3.30" height="3.2" fill="#c6d4e2"/><rect x="16.00" y="3.6" width="3.30" height="3.4" fill="#8096ac"/><rect x="19.20" y="0.6" width="3.30" height="3.2" fill="#b4c6d6"/><rect x="19.20" y="3.6" width="3.30" height="3.4" fill="#8096ac"/><rect x="22.40" y="0.6" width="3.30" height="3.2" fill="#becedd"/><rect x="22.40" y="3.6" width="3.30" height="3.4" fill="#9cb0c4"/><rect x="29.60" y="0.6" width="3.57" height="3.2" fill="#becedd"/><rect x="29.60" y="3.6" width="3.57" height="3.4" fill="#8096ac"/><rect x="33.07" y="0.6" width="3.57" height="3.2" fill="#d2deea"/><rect x="33.07" y="3.6" width="3.57" height="3.4" fill="#b4c4d4"/><rect x="36.53" y="0.6" width="3.57" height="3.2" fill="#a8bccc"/><rect x="36.53" y="3.6" width="3.57" height="3.4" fill="#9cb0c4"/><rect x="44.00" y="0.6" width="3.60" height="3.2" fill="#c6d4e2"/><rect x="44.00" y="3.6" width="3.60" height="3.4" fill="#94a8bc"/><rect x="47.50" y="0.6" width="3.60" height="3.2" fill="#d2deea"/><rect x="47.50" y="3.6" width="3.60" height="3.4" fill="#a8bccc"/><rect x="51.00" y="0.6" width="3.60" height="3.2" fill="#ccd8e6"/><rect x="51.00" y="3.6" width="3.60" height="3.4" fill="#b4c4d4"/></svg>
<span class="m" style="left:35.99px;top:134px;font-size:6.0px;color:#121a24;letter-spacing:0.01px;">56</span>
<span class="m" style="left:46.00px;top:134px;font-size:6.0px;color:#121a24;letter-spacing:0.01px;">76.145482</span>
<span class="m" style="left:248.60px;top:134px;font-size:6.0px;color:#121a24;letter-spacing:0.01px;">ISAKMP</span>
<span class="m" style="left:284.99px;top:134px;font-size:6.0px;color:#121a24;letter-spacing:0.01px;">374</span>
<span class="m" style="left:299.50px;top:134px;font-size:6.0px;color:#121a24;letter-spacing:0.01px;">IKE_AUTH MID=01 Initiator Request</span>
<svg style="left:97.20px;top:132.35px;filter:blur(0.5px)" width="40.30" height="7.75"><rect x="0.00" y="0.6" width="3.30" height="3.2" fill="#becedd"/><rect x="0.00" y="3.6" width="3.30" height="3.4" fill="#a8bccc"/><rect x="3.20" y="0.6" width="3.30" height="3.2" fill="#becedd"/><rect x="3.20" y="3.6" width="3.30" height="3.4" fill="#9cb0c4"/><rect x="6.40" y="0.6" width="3.30" height="3.2" fill="#becedd"/><rect x="6.40" y="3.6" width="3.30" height="3.4" fill="#9cb0c4"/><rect x="15.20" y="0.6" width="3.30" height="3.2" fill="#becedd"/><rect x="15.20" y="3.6" width="3.30" height="3.4" fill="#b4c4d4"/><rect x="18.40" y="0.6" width="3.30" height="3.2" fill="#c6d4e2"/><rect x="18.40" y="3.6" width="3.30" height="3.4" fill="#a8bccc"/><rect x="24.80" y="0.6" width="2.90" height="3.2" fill="#b4c6d6"/><rect x="24.80" y="3.6" width="2.90" height="3.4" fill="#b4c4d4"/><rect x="27.60" y="0.6" width="2.90" height="3.2" fill="#c6d4e2"/><rect x="27.60" y="3.6" width="2.90" height="3.4" fill="#9cb0c4"/><rect x="32.80" y="0.6" width="3.35" height="3.2" fill="#b4c6d6"/><rect x="32.80" y="3.6" width="3.35" height="3.4" fill="#9cb0c4"/><rect x="36.05" y="0.6" width="3.35" height="3.2" fill="#a8bccc"/><rect x="36.05" y="3.6" width="3.35" height="3.4" fill="#b4c4d4"/></svg>
<svg style="left:172.50px;top:132.35px;filter:blur(0.5px)" width="55.50" height="7.75"><rect x="1.60" y="0.6" width="3.03" height="3.2" fill="#ccd8e6"/><rect x="1.60" y="3.6" width="3.03" height="3.4" fill="#8ea4b8"/><rect x="4.53" y="0.6" width="3.03" height="3.2" fill="#becedd"/><rect x="4.53" y="3.6" width="3.03" height="3.4" fill="#8ea4b8"/><rect x="7.47" y="0.6" width="3.03" height="3.2" fill="#d2deea"/><rect x="7.47" y="3.6" width="3.03" height="3.4" fill="#94a8bc"/><rect x="16.00" y="0.6" width="3.30" height="3.2" fill="#becedd"/><rect x="16.00" y="3.6" width="3.30" height="3.4" fill="#b4c4d4"/><rect x="19.20" y="0.6" width="3.30" height="3.2" fill="#becedd"/><rect x="19.20" y="3.6" width="3.30" height="3.4" fill="#a8bccc"/><rect x="22.40" y="0.6" width="3.30" height="3.2" fill="#c6d4e2"/><rect x="22.40" y="3.6" width="3.30" height="3.4" fill="#b4c4d4"/><rect x="29.60" y="0.6" width="3.57" height="3.2" fill="#c6d4e2"/><rect x="29.60" y="3.6" width="3.57" height="3.4" fill="#9cb0c4"/><rect x="33.07" y="0.6" width="3.57" height="3.2" fill="#b4c6d6"/><rect x="33.07" y="3.6" width="3.57" height="3.4" fill="#8096ac"/><rect x="36.53" y="0.6" width="3.57" height="3.2" fill="#c6d4e2"/><rect x="36.53" y="3.6" width="3.57" height="3.4" fill="#8ea4b8"/><rect x="44.00" y="0.6" width="3.60" height="3.2" fill="#becedd"/><rect x="44.00" y="3.6" width="3.60" height="3.4" fill="#a8bccc"/><rect x="47.50" y="0.6" width="3.60" height="3.2" fill="#becedd"/><rect x="47.50" y="3.6" width="3.60" height="3.4" fill="#8ea4b8"/><rect x="51.00" y="0.6" width="3.60" height="3.2" fill="#c6d4e2"/><rect x="51.00" y="3.6" width="3.60" height="3.4" fill="#a8bccc"/></svg>
<span class="m" style="left:4.60px;top:96px;font-size:6.0px;color:#ddd;letter-spacing:0.01px;">*</span>
<div style="left:96.40px;top:92.20px;width:136.20px;height:2.60px;background:#8c939b;filter:blur(.4px)"></div>
<div style="left:96.40px;top:101.00px;width:136.20px;height:2.60px;background:#8c939b;filter:blur(.4px)"></div>
<svg style="left:0px;top:140px" width="494" height="49"><rect x="0.00" y="0.20" width="494.00" height="48.20" fill="#2b2b2b"/></svg>
<svg style="left:0px;top:0px" width="2" height="549"><rect x="0.00" y="0.00" width="1.20" height="549.00" fill="#1c1c1c"/></svg>
<svg style="left:1px;top:188px" width="494" height="7"><rect x="0.20" y="0.20" width="493.00" height="6.60" fill="#434343"/></svg>
<svg style="left:1px;top:188px" width="494" height="1"><rect x="0.20" y="0.20" width="493.00" height="0.80" fill="#505050"/></svg>
<svg style="left:1px;top:188px" width="8" height="7"><rect x="0.20" y="0.20" width="7.60" height="6.60" fill="#3a3a3a"/></svg>
<svg style="left:3px;top:189px" width="4" height="5" viewBox="0 0 4 5"><path d="M3.2 0.4 L0.6 2.5 L3.2 4.6 Z" fill="#e8e8e8"/></svg>
<svg style="left:0px;top:194px" width="494" height="3"><rect x="0.00" y="0.80" width="494.00" height="2.20" fill="#1c1c1c"/></svg>
<svg style="left:1px;top:197px" width="488" height="340"><rect x="0.20" y="0.00" width="487.30" height="340.00" fill="#2b2b2b"/></svg>
<span class="m" style="left:33.70px;top:200px;font-size:6.0px;color:#f2f2f2;letter-spacing:0.01px;">.000 0000 = Reserved: 0x00</span>
<span class="m" style="left:33.70px;top:208px;font-size:6.0px;color:#f2f2f2;letter-spacing:0.01px;">Payload length: 1780</span>
<span class="m" style="left:33.70px;top:215px;font-size:6.0px;color:#f2f2f2;letter-spacing:0.01px;">Initialization Vector: 80b4dc8ba1e1692aaf38833b519f25c4 (16 bytes)</span>
<span class="m" style="left:33.70px;top:223px;font-size:6.0px;color:#f2f2f2;letter-spacing:0.01px;">Encrypted Data (1744 bytes) &lt;AES-CBC-128 [RFC3602]&gt;</span>
<svg style="left:32px;top:229px" width="456" height="9"><rect x="0.00" y="0.38" width="455.60" height="8.05" fill="#f4f05e"/></svg>
<span class="m" style="left:33.70px;top:231px;font-size:6.0px;color:#161616;letter-spacing:0.01px;">Decrypted Data (1744 bytes)</span>
<svg style="left:25.40px;top:232.00px" width="4" height="3" viewBox="0 0 4 3"><path d="M0.2 0.3 H3.8 L2 2.7 Z" fill="#c8c8c8"/></svg>
<svg style="left:42px;top:237px" width="446" height="9"><rect x="0.50" y="0.12" width="445.10" height="8.05" fill="#f4f05e"/></svg>
<span class="m" style="left:44.20px;top:239px;font-size:6.0px;color:#161616;letter-spacing:0.01px;">Contained Data (1736 bytes)</span>
<svg style="left:35.90px;top:239.75px" width="4" height="3" viewBox="0 0 4 3"><path d="M0.2 0.3 H3.8 L2 2.7 Z" fill="#c8c8c8"/></svg>
<span class="m" style="left:54.60px;top:246px;font-size:6.0px;color:#f2f2f2;letter-spacing:0.01px;">Payload: Identification - Initiator (35)</span>
<svg style="left:47.20px;top:247.00px" width="3" height="4" viewBox="0 0 3 4"><path d="M0.4 0.2 L2.6 2 L0.4 3.8 Z" fill="#c8c8c8"/></svg>
<svg style="left:52px;top:252px" width="436" height="9"><rect x="0.90" y="0.62" width="434.70" height="8.05" fill="#f4f05e"/></svg>
<span class="m" style="left:54.60px;top:254px;font-size:6.0px;color:#161616;letter-spacing:0.01px;">Payload: Certificate (37)</span>
<svg style="left:46.30px;top:255.25px" width="4" height="3" viewBox="0 0 4 3"><path d="M0.2 0.3 H3.8 L2 2.7 Z" fill="#c8c8c8"/></svg>
<span class="m" style="left:65.00px;top:262px;font-size:6.0px;color:#f2f2f2;letter-spacing:0.01px;">Next payload: Notify (41)</span>
<span class="m" style="left:65.00px;top:270px;font-size:6.0px;color:#f2f2f2;letter-spacing:0.01px;">0... .... = Critical Bit: Not critical</span>
<span class="m" style="left:65.00px;top:277px;font-size:6.0px;color:#f2f2f2;letter-spacing:0.01px;">.000 0000 = Reserved: 0x00</span>
<span class="m" style="left:65.00px;top:285px;font-size:6.0px;color:#f2f2f2;letter-spacing:0.01px;">Payload length: 1009</span>
<span class="m" style="left:65.00px;top:293px;font-size:6.0px;color:#f2f2f2;letter-spacing:0.01px;">Certificate Encoding: X.509 Certificate - Signature (4)</span>
<svg style="left:63px;top:299px" width="425" height="9"><rect x="0.30" y="0.12" width="424.30" height="8.05" fill="#f4f05e"/></svg>
<span class="m" style="left:65.00px;top:301px;font-size:6.0px;color:#161616;letter-spacing:0.01px;">Certificate Data (id-at-serialNumber=</span>
<svg style="left:56.70px;top:301.75px" width="4" height="3" viewBox="0 0 4 3"><path d="M0.2 0.3 H3.8 L2 2.7 Z" fill="#c8c8c8"/></svg>
<svg style="left:73px;top:306px" width="415" height="9"><rect x="0.60" y="0.88" width="414.00" height="8.05" fill="#f4f05e"/></svg>
<span class="m" style="left:75.30px;top:308px;font-size:6.0px;color:#161616;letter-spacing:0.01px;">signedCertificate</span>
<svg style="left:67.00px;top:309.50px" width="4" height="3" viewBox="0 0 4 3"><path d="M0.2 0.3 H3.8 L2 2.7 Z" fill="#c8c8c8"/></svg>
<span class="m" style="left:85.60px;top:316px;font-size:6.0px;color:#f2f2f2;letter-spacing:0.01px;">version: v3 (2)</span>
<span class="m" style="left:85.60px;top:324px;font-size:6.0px;color:#f2f2f2;letter-spacing:0.01px;">serialNumber: </span>
<span class="m" style="left:85.60px;top:332px;font-size:6.0px;color:#f2f2f2;letter-spacing:0.01px;">signature (ecdsa-with-SHA512)</span>
<svg style="left:78.20px;top:332.25px" width="3" height="4" viewBox="0 0 3 4"><path d="M0.4 0.2 L2.6 2 L0.4 3.8 Z" fill="#c8c8c8"/></svg>
<span class="m" style="left:85.60px;top:339px;font-size:6.0px;color:#f2f2f2;letter-spacing:0.01px;">issuer: rdnSequence (0)</span>
<svg style="left:78.20px;top:340.00px" width="3" height="4" viewBox="0 0 3 4"><path d="M0.4 0.2 L2.6 2 L0.4 3.8 Z" fill="#c8c8c8"/></svg>
<span class="m" style="left:85.60px;top:347px;font-size:6.0px;color:#f2f2f2;letter-spacing:0.01px;">validity</span>
<svg style="left:78.20px;top:347.75px" width="3" height="4" viewBox="0 0 3 4"><path d="M0.4 0.2 L2.6 2 L0.4 3.8 Z" fill="#c8c8c8"/></svg>
<span class="m" style="left:85.60px;top:355px;font-size:6.0px;color:#f2f2f2;letter-spacing:0.01px;">subject: rdnSequence (0)</span>
<svg style="left:78.20px;top:355.50px" width="3" height="4" viewBox="0 0 3 4"><path d="M0.4 0.2 L2.6 2 L0.4 3.8 Z" fill="#c8c8c8"/></svg>
<span class="m" style="left:85.60px;top:363px;font-size:6.0px;color:#f2f2f2;letter-spacing:0.01px;">subjectPublicKeyInfo</span>
<svg style="left:78.20px;top:363.25px" width="3" height="4" viewBox="0 0 3 4"><path d="M0.4 0.2 L2.6 2 L0.4 3.8 Z" fill="#c8c8c8"/></svg>
<svg style="left:83px;top:368px" width="405" height="9"><rect x="0.90" y="0.88" width="403.70" height="8.05" fill="#f4f05e"/></svg>
<span class="m" style="left:85.60px;top:370px;font-size:6.0px;color:#161616;letter-spacing:0.01px;">extensions: 9 items</span>
<svg style="left:78.20px;top:371.00px" width="3" height="4" viewBox="0 0 3 4"><path d="M0.4 0.2 L2.6 2 L0.4 3.8 Z" fill="#c8c8c8"/></svg>
<span class="m" style="left:75.30px;top:378px;font-size:6.0px;color:#f2f2f2;letter-spacing:0.01px;">algorithmIdentifier (ecdsa-with-SHA512)</span>
<svg style="left:67.90px;top:378.75px" width="3" height="4" viewBox="0 0 3 4"><path d="M0.4 0.2 L2.6 2 L0.4 3.8 Z" fill="#c8c8c8"/></svg>
<span class="m" style="left:75.30px;top:386px;font-size:6.0px;color:#f2f2f2;letter-spacing:0.01px;">Padding: 0</span>
<span class="m" style="left:75.30px;top:394px;font-size:6.0px;color:#f2f2f2;letter-spacing:0.01px;">encrypted […]: 30818702413dfb96bd6e6e12483f9a6b666c95d53e780ed9e99999c8e05e202e4bc21dc3b56943a1b09c9a67becebe9965c</span>
<span class="m" style="left:54.60px;top:401px;font-size:6.0px;color:#f2f2f2;letter-spacing:0.01px;">Payload: Notify (41) - INITIAL_CONTACT</span>
<svg style="left:47.20px;top:402.00px" width="3" height="4" viewBox="0 0 3 4"><path d="M0.4 0.2 L2.6 2 L0.4 3.8 Z" fill="#c8c8c8"/></svg>
<span class="m" style="left:54.60px;top:409px;font-size:6.0px;color:#f2f2f2;letter-spacing:0.01px;">Payload: Notify (41) - Private Use - STATUS TYPES</span>
<svg style="left:47.20px;top:409.75px" width="3" height="4" viewBox="0 0 3 4"><path d="M0.4 0.2 L2.6 2 L0.4 3.8 Z" fill="#c8c8c8"/></svg>
<span class="m" style="left:54.60px;top:417px;font-size:6.0px;color:#f2f2f2;letter-spacing:0.01px;">Payload: Authentication (39)</span>
<svg style="left:46.30px;top:418.00px" width="4" height="3" viewBox="0 0 4 3"><path d="M0.2 0.3 H3.8 L2 2.7 Z" fill="#c8c8c8"/></svg>
<span class="m" style="left:65.00px;top:425px;font-size:6.0px;color:#f2f2f2;letter-spacing:0.01px;">Next payload: Configuration (47)</span>
<span class="m" style="left:65.00px;top:432px;font-size:6.0px;color:#f2f2f2;letter-spacing:0.01px;">0... .... = Critical Bit: Not critical</span>
<span class="m" style="left:65.00px;top:440px;font-size:6.0px;color:#f2f2f2;letter-spacing:0.01px;">.000 0000 = Reserved: 0x00</span>
<span class="m" style="left:65.00px;top:448px;font-size:6.0px;color:#f2f2f2;letter-spacing:0.01px;">Payload length: 8</span>
<span class="m" style="left:65.00px;top:456px;font-size:6.0px;color:#f2f2f2;letter-spacing:0.01px;">Authentication Method: ECDSA with SHA-384 on the P-384 curve (10)</span>
<span class="m" style="left:65.00px;top:463px;font-size:6.0px;color:#f2f2f2;letter-spacing:0.01px;">Reserved: 000000</span>
<svg style="left:1px;top:469px" width="488" height="9"><rect x="0.20" y="0.77" width="487.30" height="7.75" fill="#1d1d1d"/></svg>
<span class="m" style="left:65.00px;top:471px;font-size:6.0px;color:#f2f2f2;letter-spacing:0.01px;">Authentication Data: &lt;MISSING&gt;</span>
<span class="m" style="left:54.60px;top:479px;font-size:6.0px;color:#f2f2f2;letter-spacing:0.01px;">Payload: Configuration (47)</span>
<svg style="left:47.20px;top:479.50px" width="3" height="4" viewBox="0 0 3 4"><path d="M0.4 0.2 L2.6 2 L0.4 3.8 Z" fill="#c8c8c8"/></svg>
<span class="m" style="left:54.60px;top:487px;font-size:6.0px;color:#f2f2f2;letter-spacing:0.01px;">Payload: Security Association (33)</span>
<svg style="left:47.20px;top:487.25px" width="3" height="4" viewBox="0 0 3 4"><path d="M0.4 0.2 L2.6 2 L0.4 3.8 Z" fill="#c8c8c8"/></svg>
<span class="m" style="left:54.60px;top:494px;font-size:6.0px;color:#f2f2f2;letter-spacing:0.01px;">Payload: Traffic Selector - Initiator (44) # 1</span>
<svg style="left:47.20px;top:495.00px" width="3" height="4" viewBox="0 0 3 4"><path d="M0.4 0.2 L2.6 2 L0.4 3.8 Z" fill="#c8c8c8"/></svg>
<span class="m" style="left:54.60px;top:502px;font-size:6.0px;color:#f2f2f2;letter-spacing:0.01px;">Payload: Traffic Selector - Responder (45) # 1</span>
<svg style="left:47.20px;top:502.75px" width="3" height="4" viewBox="0 0 3 4"><path d="M0.4 0.2 L2.6 2 L0.4 3.8 Z" fill="#c8c8c8"/></svg>
<span class="m" style="left:44.20px;top:510px;font-size:6.0px;color:#f2f2f2;letter-spacing:0.01px;">Padding (7 bytes)</span>
<span class="m" style="left:44.20px;top:518px;font-size:6.0px;color:#f2f2f2;letter-spacing:0.01px;">Pad Length: 7</span>
<span class="m" style="left:33.70px;top:525px;font-size:6.0px;color:#f2f2f2;letter-spacing:0.01px;">Integrity Checksum Data: d5b736954898e78cddf58468bf9b04e0 (16 bytes) &lt;HMAC_SHA2_256_128 [RFC4868]&gt;[correct]</span>
<svg style="left:198.35px;top:300.55px;opacity:1.0;filter:blur(0.5px)" width="288.65" height="5.20"><rect x="0.00" y="0" width="3.40" height="5.20" fill="#dcd658"/><rect x="3.20" y="0" width="3.40" height="5.20" fill="#eee85c"/><rect x="6.40" y="0" width="3.40" height="5.20" fill="#aaa548"/><rect x="9.60" y="0" width="3.40" height="5.20" fill="#ccc654"/><rect x="12.80" y="0" width="3.40" height="5.20" fill="#ccc654"/><rect x="16.00" y="0" width="3.40" height="5.20" fill="#eee85c"/><rect x="19.20" y="0" width="3.40" height="5.20" fill="#aaa548"/><rect x="22.40" y="0" width="3.40" height="5.20" fill="#eee85c"/><rect x="25.60" y="0" width="3.40" height="5.20" fill="#ccc654"/><rect x="28.80" y="0" width="3.40" height="5.20" fill="#c2bc50"/><rect x="32.00" y="0" width="3.40" height="5.20" fill="#f2ec5e"/><rect x="35.20" y="0" width="3.40" height="5.20" fill="#d6d056"/><rect x="38.40" y="0" width="3.40" height="5.20" fill="#f2ec5e"/><rect x="41.60" y="0" width="3.40" height="5.20" fill="#ccc654"/><rect x="44.80" y="0" width="3.40" height="5.20" fill="#dcd658"/><rect x="48.00" y="0" width="3.40" height="5.20" fill="#d6d056"/><rect x="51.20" y="0" width="3.40" height="5.20" fill="#eee85c"/><rect x="54.40" y="0" width="3.40" height="5.20" fill="#f2ec5e"/><rect x="57.60" y="0" width="3.40" height="5.20" fill="#d6d056"/><rect x="60.80" y="0" width="3.40" height="5.20" fill="#eee85c"/><rect x="64.00" y="0" width="3.40" height="5.20" fill="#aaa548"/><rect x="67.20" y="0" width="3.40" height="5.20" fill="#d6d056"/><rect x="70.40" y="0" width="3.40" height="5.20" fill="#c2bc50"/><rect x="73.60" y="0" width="3.40" height="5.20" fill="#dcd658"/><rect x="76.80" y="0" width="3.40" height="5.20" fill="#c2bc50"/><rect x="80.00" y="0" width="3.40" height="5.20" fill="#aaa548"/><rect x="83.20" y="0" width="3.40" height="5.20" fill="#c2bc50"/><rect x="86.40" y="0" width="3.40" height="5.20" fill="#ccc654"/><rect x="89.60" y="0" width="3.40" height="5.20" fill="#eee85c"/><rect x="92.80" y="0" width="3.40" height="5.20" fill="#d6d056"/><rect x="96.00" y="0" width="3.40" height="5.20" fill="#f2ec5e"/><rect x="99.20" y="0" width="3.40" height="5.20" fill="#ccc654"/><rect x="102.40" y="0" width="3.40" height="5.20" fill="#c2bc50"/><rect x="105.60" y="0" width="3.40" height="5.20" fill="#eee85c"/><rect x="108.80" y="0" width="3.40" height="5.20" fill="#c2bc50"/><rect x="112.00" y="0" width="3.40" height="5.20" fill="#f2ec5e"/><rect x="115.20" y="0" width="3.40" height="5.20" fill="#f2ec5e"/><rect x="118.40" y="0" width="3.40" height="5.20" fill="#dcd658"/><rect x="121.60" y="0" width="3.40" height="5.20" fill="#f2ec5e"/><rect x="124.80" y="0" width="3.40" height="5.20" fill="#eee85c"/><rect x="128.00" y="0" width="3.40" height="5.20" fill="#dcd658"/><rect x="131.20" y="0" width="3.40" height="5.20" fill="#dcd658"/><rect x="134.40" y="0" width="3.40" height="5.20" fill="#d6d056"/><rect x="137.60" y="0" width="3.40" height="5.20" fill="#dcd658"/><rect x="140.80" y="0" width="3.40" height="5.20" fill="#e6e05a"/><rect x="144.00" y="0" width="3.40" height="5.20" fill="#dcd658"/><rect x="147.20" y="0" width="3.40" height="5.20" fill="#ccc654"/><rect x="150.40" y="0" width="3.40" height="5.20" fill="#ccc654"/><rect x="153.60" y="0" width="3.40" height="5.20" fill="#e6e05a"/><rect x="156.80" y="0" width="3.40" height="5.20" fill="#f2ec5e"/><rect x="160.00" y="0" width="3.40" height="5.20" fill="#dcd658"/><rect x="163.20" y="0" width="3.40" height="5.20" fill="#aaa548"/><rect x="166.40" y="0" width="3.40" height="5.20" fill="#d6d056"/><rect x="169.60" y="0" width="3.40" height="5.20" fill="#d6d056"/><rect x="172.80" y="0" width="3.40" height="5.20" fill="#eee85c"/><rect x="176.00" y="0" width="3.40" height="5.20" fill="#d6d056"/><rect x="179.20" y="0" width="3.40" height="5.20" fill="#d6d056"/><rect x="182.40" y="0" width="3.40" height="5.20" fill="#aaa548"/><rect x="185.60" y="0" width="3.40" height="5.20" fill="#aaa548"/><rect x="188.80" y="0" width="3.40" height="5.20" fill="#e6e05a"/><rect x="192.00" y="0" width="3.40" height="5.20" fill="#c2bc50"/><rect x="195.20" y="0" width="3.40" height="5.20" fill="#aaa548"/><rect x="198.40" y="0" width="3.40" height="5.20" fill="#c2bc50"/><rect x="201.60" y="0" width="3.40" height="5.20" fill="#f2ec5e"/><rect x="204.80" y="0" width="3.40" height="5.20" fill="#aaa548"/><rect x="208.00" y="0" width="3.40" height="5.20" fill="#f2ec5e"/><rect x="211.20" y="0" width="3.40" height="5.20" fill="#c2bc50"/><rect x="214.40" y="0" width="3.40" height="5.20" fill="#ccc654"/><rect x="217.60" y="0" width="3.40" height="5.20" fill="#dcd658"/><rect x="220.80" y="0" width="3.40" height="5.20" fill="#d6d056"/><rect x="224.00" y="0" width="3.40" height="5.20" fill="#aaa548"/><rect x="227.20" y="0" width="3.40" height="5.20" fill="#e6e05a"/><rect x="230.40" y="0" width="3.40" height="5.20" fill="#c2bc50"/><rect x="233.60" y="0" width="3.40" height="5.20" fill="#f2ec5e"/><rect x="236.80" y="0" width="3.40" height="5.20" fill="#d6d056"/><rect x="240.00" y="0" width="3.40" height="5.20" fill="#aaa548"/><rect x="243.20" y="0" width="3.40" height="5.20" fill="#e6e05a"/><rect x="246.40" y="0" width="3.40" height="5.20" fill="#d6d056"/><rect x="249.60" y="0" width="3.40" height="5.20" fill="#aaa548"/><rect x="252.80" y="0" width="3.40" height="5.20" fill="#d6d056"/><rect x="256.00" y="0" width="3.40" height="5.20" fill="#eee85c"/><rect x="259.20" y="0" width="3.40" height="5.20" fill="#d6d056"/><rect x="262.40" y="0" width="3.40" height="5.20" fill="#aaa548"/><rect x="265.60" y="0" width="3.40" height="5.20" fill="#d6d056"/><rect x="268.80" y="0" width="3.40" height="5.20" fill="#ccc654"/><rect x="272.00" y="0" width="3.40" height="5.20" fill="#e6e05a"/><rect x="275.20" y="0" width="3.40" height="5.20" fill="#dcd658"/><rect x="278.40" y="0" width="3.40" height="5.20" fill="#f2ec5e"/><rect x="281.60" y="0" width="3.40" height="5.20" fill="#aaa548"/><rect x="284.80" y="0" width="3.40" height="5.20" fill="#c2bc50"/></svg>
<svg style="left:136.06px;top:324.00px;opacity:1.0;filter:blur(0.6px)" width="124.00" height="4.80"><rect x="0.00" y="0" width="3.40" height="4.80" fill="#4a4a4a"/><rect x="3.20" y="0" width="3.40" height="4.80" fill="#444"/><rect x="6.40" y="0" width="3.40" height="4.80" fill="#505050"/><rect x="9.60" y="0" width="3.40" height="4.80" fill="#5a5a5a"/><rect x="12.80" y="0" width="3.40" height="4.80" fill="#4a4a4a"/><rect x="16.00" y="0" width="3.40" height="4.80" fill="#5a5a5a"/><rect x="19.20" y="0" width="3.40" height="4.80" fill="#3c3c3c"/><rect x="22.40" y="0" width="3.40" height="4.80" fill="#4a4a4a"/><rect x="25.60" y="0" width="3.40" height="4.80" fill="#5a5a5a"/><rect x="28.80" y="0" width="3.40" height="4.80" fill="#5a5a5a"/><rect x="32.00" y="0" width="3.40" height="4.80" fill="#3c3c3c"/><rect x="35.20" y="0" width="3.40" height="4.80" fill="#505050"/><rect x="38.40" y="0" width="3.40" height="4.80" fill="#3c3c3c"/><rect x="41.60" y="0" width="3.40" height="4.80" fill="#444"/><rect x="44.80" y="0" width="3.40" height="4.80" fill="#5a5a5a"/><rect x="48.00" y="0" width="3.40" height="4.80" fill="#3c3c3c"/><rect x="51.20" y="0" width="3.40" height="4.80" fill="#666"/><rect x="54.40" y="0" width="3.40" height="4.80" fill="#444"/><rect x="57.60" y="0" width="3.40" height="4.80" fill="#505050"/><rect x="60.80" y="0" width="3.40" height="4.80" fill="#5a5a5a"/><rect x="64.00" y="0" width="3.40" height="4.80" fill="#3c3c3c"/><rect x="67.20" y="0" width="3.40" height="4.80" fill="#3c3c3c"/><rect x="70.40" y="0" width="3.40" height="4.80" fill="#4a4a4a"/><rect x="73.60" y="0" width="3.40" height="4.80" fill="#3c3c3c"/><rect x="76.80" y="0" width="3.40" height="4.80" fill="#4a4a4a"/><rect x="80.00" y="0" width="3.40" height="4.80" fill="#4a4a4a"/><rect x="83.20" y="0" width="3.40" height="4.80" fill="#4a4a4a"/><rect x="86.40" y="0" width="3.40" height="4.80" fill="#505050"/><rect x="89.60" y="0" width="3.40" height="4.80" fill="#444"/><rect x="92.80" y="0" width="3.40" height="4.80" fill="#444"/><rect x="96.00" y="0" width="3.40" height="4.80" fill="#5a5a5a"/><rect x="99.20" y="0" width="3.40" height="4.80" fill="#444"/><rect x="102.40" y="0" width="3.40" height="4.80" fill="#666"/><rect x="105.60" y="0" width="3.40" height="4.80" fill="#5a5a5a"/><rect x="108.80" y="0" width="3.40" height="4.80" fill="#666"/><rect x="112.00" y="0" width="3.40" height="4.80" fill="#4a4a4a"/><rect x="115.20" y="0" width="3.40" height="4.80" fill="#505050"/><rect x="118.40" y="0" width="3.40" height="4.80" fill="#505050"/><rect x="121.60" y="0" width="3.40" height="4.80" fill="#666"/></svg>
<svg style="left:488px;top:197px" width="8" height="340"><rect x="0.60" y="0.00" width="6.60" height="340.00" fill="#3b3b3b"/></svg>
<svg style="left:488px;top:205px" width="8" height="324"><rect x="0.60" y="0.00" width="6.60" height="323.70" fill="#434343"/></svg>
<svg style="left:488px;top:205px" width="2" height="324"><rect x="0.60" y="0.00" width="0.70" height="323.70" fill="#505050"/></svg>
<svg style="left:489.4px;top:199px" width="5" height="4" viewBox="0 0 5 4"><path d="M0.5 3.4 H4.5 L2.5 0.6 Z" fill="#e6e6e6"/></svg>
<svg style="left:489.6px;top:531px" width="5" height="4" viewBox="0 0 5 4"><path d="M0.5 0.6 H4.5 L2.5 3.4 Z" fill="#e6e6e6"/></svg>
<svg style="left:1px;top:537px" width="488" height="7"><rect x="0.20" y="0.00" width="487.00" height="6.60" fill="#454545"/></svg>
<svg style="left:1px;top:537px" width="8" height="7"><rect x="0.20" y="0.00" width="7.50" height="6.60" fill="#3a3a3a"/></svg>
<svg style="left:481px;top:537px" width="7" height="7"><rect x="0.40" y="0.00" width="6.60" height="6.60" fill="#3a3a3a"/></svg>
<svg style="left:8px;top:537px" width="441" height="7"><rect x="0.70" y="0.00" width="440.00" height="6.60" fill="#525252"/></svg>
<svg style="left:3px;top:538.2px" width="4" height="4.4" viewBox="0 0 4 4.4"><path d="M3.2 0.3 L0.6 2.2 L3.2 4.1 Z" fill="#e8e8e8"/></svg>
<svg style="left:483px;top:538.2px" width="4" height="4.4" viewBox="0 0 4 4.4"><path d="M0.8 0.3 L3.4 2.2 L0.8 4.1 Z" fill="#e8e8e8"/></svg>
<svg style="left:0px;top:543px" width="999" height="6"><rect x="0.00" y="0.60" width="999.00" height="5.40" fill="#1c1c1c"/></svg>
<svg style="left:495px;top:197px" width="3" height="347"><rect x="0.20" y="0.00" width="2.00" height="347.00" fill="#1c1c1c"/></svg>
<svg style="left:497px;top:300px" width="498" height="230"><rect x="0.00" y="0.00" width="498.00" height="230.00" fill="#2b2b2b"/></svg>
<svg style="left:497px;top:300px" width="26" height="230"><rect x="0.00" y="0.00" width="25.30" height="230.00" fill="#232323"/></svg>
<svg style="left:995px;top:0px" width="4" height="549"><rect x="0.00" y="0.00" width="4.00" height="549.00" fill="#1c1c1c"/></svg>
<svg style="left:497px;top:529px" width="502" height="15"><rect x="0.00" y="0.80" width="502.00" height="14.00" fill="#1c1c1c"/></svg>
<span class="m" style="left:502.00px;top:363px;font-size:6.0px;color:#8f8f8f;letter-spacing:0.01px;">0580</span>
<span class="m" style="left:502.00px;top:370px;font-size:6.0px;color:#8f8f8f;letter-spacing:0.01px;">0590</span>
<span class="m" style="left:502.00px;top:378px;font-size:6.0px;color:#8f8f8f;letter-spacing:0.01px;">05a0</span>
<span class="m" style="left:502.00px;top:386px;font-size:6.0px;color:#8f8f8f;letter-spacing:0.01px;">05b0</span>
<span class="m" style="left:502.00px;top:394px;font-size:6.0px;color:#8f8f8f;letter-spacing:0.01px;">05c0</span>
<span class="m" style="left:502.00px;top:401px;font-size:6.0px;color:#8f8f8f;letter-spacing:0.01px;">05d0</span>
<span class="m" style="left:502.00px;top:409px;font-size:6.0px;color:#8f8f8f;letter-spacing:0.01px;">05e0</span>
<span class="m" style="left:502.00px;top:417px;font-size:6.0px;color:#8f8f8f;letter-spacing:0.01px;">05f0</span>
<span class="m" style="left:502.00px;top:425px;font-size:6.0px;color:#8f8f8f;letter-spacing:0.01px;">0600</span>
<span class="m" style="left:502.00px;top:432px;font-size:6.0px;color:#8f8f8f;letter-spacing:0.01px;">0610</span>
<span class="m" style="left:502.00px;top:440px;font-size:6.0px;color:#8f8f8f;letter-spacing:0.01px;">0620</span>
<span class="m" style="left:502.00px;top:448px;font-size:6.0px;color:#8f8f8f;letter-spacing:0.01px;">0630</span>
<span class="m" style="left:502.00px;top:456px;font-size:6.0px;color:#8f8f8f;letter-spacing:0.01px;">0640</span>
<span class="m" style="left:502.00px;top:463px;font-size:6.0px;color:#8f8f8f;letter-spacing:0.01px;">0650</span>
<span class="m" style="left:502.00px;top:471px;font-size:6.0px;color:#8f8f8f;letter-spacing:0.01px;">0660</span>
<span class="m" style="left:502.00px;top:479px;font-size:6.0px;color:#8f8f8f;letter-spacing:0.01px;">0670</span>
<span class="m" style="left:502.00px;top:487px;font-size:6.0px;color:#8f8f8f;letter-spacing:0.01px;">0680</span>
<span class="m" style="left:502.00px;top:494px;font-size:6.0px;color:#8f8f8f;letter-spacing:0.01px;">0690</span>
<span class="m" style="left:502.00px;top:502px;font-size:6.0px;color:#f0f0f0;letter-spacing:0.01px;">06a0</span>
<span class="m" style="left:502.00px;top:510px;font-size:6.0px;color:#8f8f8f;letter-spacing:0.01px;">06b0</span>
<span class="m" style="left:502.00px;top:518px;font-size:6.0px;color:#8f8f8f;letter-spacing:0.01px;">06c0</span>
<svg style="left:497px;top:300px" width="300" height="230" viewBox="0 0 300 230"><defs><filter id="hb" x="-2%" y="-2%" width="104%" height="104%"><feGaussianBlur stdDeviation="1.1 0.45"/></filter></defs><g filter="url(#hb)"><rect x="27.00" y="62.55" width="3.70" height="5.7" fill="#5a5a5a"/><rect x="30.60" y="62.55" width="3.70" height="5.7" fill="#767a80"/><rect x="37.81" y="62.55" width="3.70" height="5.7" fill="#646464"/><rect x="41.42" y="62.55" width="3.70" height="5.7" fill="#4c4c4c"/><rect x="48.62" y="62.55" width="3.70" height="5.7" fill="#646464"/><rect x="52.23" y="62.55" width="3.70" height="5.7" fill="#6a6a6a"/><rect x="59.44" y="62.55" width="3.70" height="5.7" fill="#686868"/><rect x="63.04" y="62.55" width="3.70" height="5.7" fill="#7c7c7c"/><rect x="70.25" y="62.55" width="3.70" height="5.7" fill="#7c7c7c"/><rect x="73.85" y="62.55" width="3.70" height="5.7" fill="#86827e"/><rect x="81.06" y="62.55" width="3.70" height="5.7" fill="#7c7c7c"/><rect x="84.66" y="62.55" width="3.70" height="5.7" fill="#686868"/><rect x="91.87" y="62.55" width="3.70" height="5.7" fill="#686868"/><rect x="95.48" y="62.55" width="3.70" height="5.7" fill="#5a5a5a"/><rect x="102.68" y="62.55" width="3.70" height="5.7" fill="#565656"/><rect x="106.29" y="62.55" width="3.70" height="5.7" fill="#4c4c4c"/><rect x="117.10" y="62.55" width="3.70" height="5.7" fill="#86827e"/><rect x="120.70" y="62.55" width="3.70" height="5.7" fill="#606060"/><rect x="127.91" y="62.55" width="3.70" height="5.7" fill="#565656"/><rect x="131.52" y="62.55" width="3.70" height="5.7" fill="#606060"/><rect x="138.72" y="62.55" width="3.70" height="5.7" fill="#727272"/><rect x="142.33" y="62.55" width="3.70" height="5.7" fill="#5a5a5a"/><rect x="149.54" y="62.55" width="3.70" height="5.7" fill="#686868"/><rect x="153.14" y="62.55" width="3.70" height="5.7" fill="#6a6a6a"/><rect x="160.35" y="62.55" width="3.70" height="5.7" fill="#4c4c4c"/><rect x="163.95" y="62.55" width="3.70" height="5.7" fill="#565656"/><rect x="171.16" y="62.55" width="3.70" height="5.7" fill="#606060"/><rect x="174.76" y="62.55" width="3.70" height="5.7" fill="#727272"/><rect x="181.97" y="62.55" width="3.70" height="5.7" fill="#5a5a5a"/><rect x="185.58" y="62.55" width="3.70" height="5.7" fill="#4c4c4c"/><rect x="192.78" y="62.55" width="3.70" height="5.7" fill="#646464"/><rect x="196.39" y="62.55" width="3.70" height="5.7" fill="#5a5a5a"/><rect x="211.00" y="62.85" width="3.70" height="5.2" fill="#6a6a6a"/><rect x="214.60" y="62.85" width="3.70" height="5.2" fill="#8e8e8e"/><rect x="218.21" y="62.85" width="3.70" height="5.2" fill="#7c7c7c"/><rect x="221.81" y="62.85" width="3.70" height="5.2" fill="#686868"/><rect x="225.42" y="62.85" width="3.70" height="5.2" fill="#6a6a6a"/><rect x="229.02" y="62.85" width="3.70" height="5.2" fill="#606060"/><rect x="232.62" y="62.85" width="3.70" height="5.2" fill="#767a80"/><rect x="236.23" y="62.85" width="3.70" height="5.2" fill="#565656"/><rect x="243.44" y="62.85" width="3.70" height="5.2" fill="#565656"/><rect x="247.04" y="62.85" width="3.70" height="5.2" fill="#6a6a6a"/><rect x="250.64" y="62.85" width="3.70" height="5.2" fill="#767a80"/><rect x="254.25" y="62.85" width="3.70" height="5.2" fill="#606060"/><rect x="257.85" y="62.85" width="3.70" height="5.2" fill="#6a6a6a"/><rect x="261.46" y="62.85" width="3.70" height="5.2" fill="#86827e"/><rect x="265.06" y="62.85" width="3.70" height="5.2" fill="#86827e"/><rect x="268.66" y="62.85" width="3.70" height="5.2" fill="#646464"/><rect x="27.00" y="70.30" width="3.70" height="5.7" fill="#86827e"/><rect x="30.60" y="70.30" width="3.70" height="5.7" fill="#7c7c7c"/><rect x="37.81" y="70.30" width="3.70" height="5.7" fill="#606060"/><rect x="41.42" y="70.30" width="3.70" height="5.7" fill="#6a6a6a"/><rect x="48.62" y="70.30" width="3.70" height="5.7" fill="#7c7c7c"/><rect x="52.23" y="70.30" width="3.70" height="5.7" fill="#86827e"/><rect x="59.44" y="70.30" width="3.70" height="5.7" fill="#565656"/><rect x="63.04" y="70.30" width="3.70" height="5.7" fill="#606060"/><rect x="70.25" y="70.30" width="3.70" height="5.7" fill="#86827e"/><rect x="73.85" y="70.30" width="3.70" height="5.7" fill="#4c4c4c"/><rect x="81.06" y="70.30" width="3.70" height="5.7" fill="#727272"/><rect x="84.66" y="70.30" width="3.70" height="5.7" fill="#767a80"/><rect x="91.87" y="70.30" width="3.70" height="5.7" fill="#6a6a6a"/><rect x="95.48" y="70.30" width="3.70" height="5.7" fill="#646464"/><rect x="102.68" y="70.30" width="3.70" height="5.7" fill="#5a5a5a"/><rect x="106.29" y="70.30" width="3.70" height="5.7" fill="#7c7c7c"/><rect x="117.10" y="70.30" width="3.70" height="5.7" fill="#7c7c7c"/><rect x="120.70" y="70.30" width="3.70" height="5.7" fill="#646464"/><rect x="127.91" y="70.30" width="3.70" height="5.7" fill="#606060"/><rect x="131.52" y="70.30" width="3.70" height="5.7" fill="#727272"/><rect x="138.72" y="70.30" width="3.70" height="5.7" fill="#6a6a6a"/><rect x="142.33" y="70.30" width="3.70" height="5.7" fill="#727272"/><rect x="149.54" y="70.30" width="3.70" height="5.7" fill="#565656"/><rect x="153.14" y="70.30" width="3.70" height="5.7" fill="#4c4c4c"/><rect x="160.35" y="70.30" width="3.70" height="5.7" fill="#8e8e8e"/><rect x="163.95" y="70.30" width="3.70" height="5.7" fill="#606060"/><rect x="171.16" y="70.30" width="3.70" height="5.7" fill="#4c4c4c"/><rect x="174.76" y="70.30" width="3.70" height="5.7" fill="#606060"/><rect x="181.97" y="70.30" width="3.70" height="5.7" fill="#6a6a6a"/><rect x="185.58" y="70.30" width="3.70" height="5.7" fill="#6a6a6a"/><rect x="192.78" y="70.30" width="3.70" height="5.7" fill="#5a5a5a"/><rect x="196.39" y="70.30" width="3.70" height="5.7" fill="#7c7c7c"/><rect x="211.00" y="70.60" width="3.70" height="5.2" fill="#727272"/><rect x="214.60" y="70.60" width="3.70" height="5.2" fill="#8e8e8e"/><rect x="218.21" y="70.60" width="3.70" height="5.2" fill="#646464"/><rect x="221.81" y="70.60" width="3.70" height="5.2" fill="#565656"/><rect x="225.42" y="70.60" width="3.70" height="5.2" fill="#5a5a5a"/><rect x="229.02" y="70.60" width="3.70" height="5.2" fill="#686868"/><rect x="232.62" y="70.60" width="3.70" height="5.2" fill="#8e8e8e"/><rect x="236.23" y="70.60" width="3.70" height="5.2" fill="#4c4c4c"/><rect x="243.44" y="70.60" width="3.70" height="5.2" fill="#86827e"/><rect x="247.04" y="70.60" width="3.70" height="5.2" fill="#686868"/><rect x="250.64" y="70.60" width="3.70" height="5.2" fill="#767a80"/><rect x="254.25" y="70.60" width="3.70" height="5.2" fill="#565656"/><rect x="257.85" y="70.60" width="3.70" height="5.2" fill="#6a6a6a"/><rect x="261.46" y="70.60" width="3.70" height="5.2" fill="#686868"/><rect x="265.06" y="70.60" width="3.70" height="5.2" fill="#8e8e8e"/><rect x="268.66" y="70.60" width="3.70" height="5.2" fill="#5a5a5a"/><rect x="27.00" y="78.05" width="3.70" height="5.7" fill="#565656"/><rect x="30.60" y="78.05" width="3.70" height="5.7" fill="#606060"/><rect x="37.81" y="78.05" width="3.70" height="5.7" fill="#686868"/><rect x="41.42" y="78.05" width="3.70" height="5.7" fill="#646464"/><rect x="48.62" y="78.05" width="3.70" height="5.7" fill="#5a5a5a"/><rect x="52.23" y="78.05" width="3.70" height="5.7" fill="#4c4c4c"/><rect x="59.44" y="78.05" width="3.70" height="5.7" fill="#686868"/><rect x="63.04" y="78.05" width="3.70" height="5.7" fill="#686868"/><rect x="70.25" y="78.05" width="3.70" height="5.7" fill="#646464"/><rect x="73.85" y="78.05" width="3.70" height="5.7" fill="#565656"/><rect x="81.06" y="78.05" width="3.70" height="5.7" fill="#646464"/><rect x="84.66" y="78.05" width="3.70" height="5.7" fill="#646464"/><rect x="91.87" y="78.05" width="3.70" height="5.7" fill="#8e8e8e"/><rect x="95.48" y="78.05" width="3.70" height="5.7" fill="#606060"/><rect x="102.68" y="78.05" width="3.70" height="5.7" fill="#5a5a5a"/><rect x="106.29" y="78.05" width="3.70" height="5.7" fill="#8e8e8e"/><rect x="117.10" y="78.05" width="3.70" height="5.7" fill="#686868"/><rect x="120.70" y="78.05" width="3.70" height="5.7" fill="#5a5a5a"/><rect x="127.91" y="78.05" width="3.70" height="5.7" fill="#686868"/><rect x="131.52" y="78.05" width="3.70" height="5.7" fill="#5a5a5a"/><rect x="138.72" y="78.05" width="3.70" height="5.7" fill="#7c7c7c"/><rect x="142.33" y="78.05" width="3.70" height="5.7" fill="#727272"/><rect x="149.54" y="78.05" width="3.70" height="5.7" fill="#606060"/><rect x="153.14" y="78.05" width="3.70" height="5.7" fill="#606060"/><rect x="160.35" y="78.05" width="3.70" height="5.7" fill="#565656"/><rect x="163.95" y="78.05" width="3.70" height="5.7" fill="#5a5a5a"/><rect x="171.16" y="78.05" width="3.70" height="5.7" fill="#86827e"/><rect x="174.76" y="78.05" width="3.70" height="5.7" fill="#727272"/><rect x="181.97" y="78.05" width="3.70" height="5.7" fill="#4c4c4c"/><rect x="185.58" y="78.05" width="3.70" height="5.7" fill="#767a80"/><rect x="192.78" y="78.05" width="3.70" height="5.7" fill="#646464"/><rect x="196.39" y="78.05" width="3.70" height="5.7" fill="#606060"/><rect x="211.00" y="78.35" width="3.70" height="5.2" fill="#5a5a5a"/><rect x="214.60" y="78.35" width="3.70" height="5.2" fill="#606060"/><rect x="218.21" y="78.35" width="3.70" height="5.2" fill="#5a5a5a"/><rect x="221.81" y="78.35" width="3.70" height="5.2" fill="#646464"/><rect x="225.42" y="78.35" width="3.70" height="5.2" fill="#5a5a5a"/><rect x="229.02" y="78.35" width="3.70" height="5.2" fill="#7c7c7c"/><rect x="232.62" y="78.35" width="3.70" height="5.2" fill="#767a80"/><rect x="236.23" y="78.35" width="3.70" height="5.2" fill="#6a6a6a"/><rect x="243.44" y="78.35" width="3.70" height="5.2" fill="#606060"/><rect x="247.04" y="78.35" width="3.70" height="5.2" fill="#767a80"/><rect x="250.64" y="78.35" width="3.70" height="5.2" fill="#727272"/><rect x="254.25" y="78.35" width="3.70" height="5.2" fill="#686868"/><rect x="257.85" y="78.35" width="3.70" height="5.2" fill="#646464"/><rect x="261.46" y="78.35" width="3.70" height="5.2" fill="#646464"/><rect x="265.06" y="78.35" width="3.70" height="5.2" fill="#727272"/><rect x="268.66" y="78.35" width="3.70" height="5.2" fill="#5a5a5a"/><rect x="27.00" y="85.80" width="3.70" height="5.7" fill="#646464"/><rect x="30.60" y="85.80" width="3.70" height="5.7" fill="#727272"/><rect x="37.81" y="85.80" width="3.70" height="5.7" fill="#686868"/><rect x="41.42" y="85.80" width="3.70" height="5.7" fill="#686868"/><rect x="48.62" y="85.80" width="3.70" height="5.7" fill="#767a80"/><rect x="52.23" y="85.80" width="3.70" height="5.7" fill="#6a6a6a"/><rect x="59.44" y="85.80" width="3.70" height="5.7" fill="#727272"/><rect x="63.04" y="85.80" width="3.70" height="5.7" fill="#6a6a6a"/><rect x="70.25" y="85.80" width="3.70" height="5.7" fill="#7c7c7c"/><rect x="73.85" y="85.80" width="3.70" height="5.7" fill="#686868"/><rect x="81.06" y="85.80" width="3.70" height="5.7" fill="#7c7c7c"/><rect x="84.66" y="85.80" width="3.70" height="5.7" fill="#7c7c7c"/><rect x="91.87" y="85.80" width="3.70" height="5.7" fill="#686868"/><rect x="95.48" y="85.80" width="3.70" height="5.7" fill="#5a5a5a"/><rect x="102.68" y="85.80" width="3.70" height="5.7" fill="#767a80"/><rect x="106.29" y="85.80" width="3.70" height="5.7" fill="#767a80"/><rect x="117.10" y="85.80" width="3.70" height="5.7" fill="#4c4c4c"/><rect x="120.70" y="85.80" width="3.70" height="5.7" fill="#727272"/><rect x="127.91" y="85.80" width="3.70" height="5.7" fill="#767a80"/><rect x="131.52" y="85.80" width="3.70" height="5.7" fill="#5a5a5a"/><rect x="138.72" y="85.80" width="3.70" height="5.7" fill="#6a6a6a"/><rect x="142.33" y="85.80" width="3.70" height="5.7" fill="#606060"/><rect x="149.54" y="85.80" width="3.70" height="5.7" fill="#8e8e8e"/><rect x="153.14" y="85.80" width="3.70" height="5.7" fill="#5a5a5a"/><rect x="160.35" y="85.80" width="3.70" height="5.7" fill="#5a5a5a"/><rect x="163.95" y="85.80" width="3.70" height="5.7" fill="#7c7c7c"/><rect x="171.16" y="85.80" width="3.70" height="5.7" fill="#727272"/><rect x="174.76" y="85.80" width="3.70" height="5.7" fill="#8e8e8e"/><rect x="181.97" y="85.80" width="3.70" height="5.7" fill="#565656"/><rect x="185.58" y="85.80" width="3.70" height="5.7" fill="#86827e"/><rect x="192.78" y="85.80" width="3.70" height="5.7" fill="#6a6a6a"/><rect x="196.39" y="85.80" width="3.70" height="5.7" fill="#5a5a5a"/><rect x="211.00" y="86.10" width="3.70" height="5.2" fill="#686868"/><rect x="214.60" y="86.10" width="3.70" height="5.2" fill="#686868"/><rect x="218.21" y="86.10" width="3.70" height="5.2" fill="#6a6a6a"/><rect x="221.81" y="86.10" width="3.70" height="5.2" fill="#8e8e8e"/><rect x="225.42" y="86.10" width="3.70" height="5.2" fill="#8e8e8e"/><rect x="229.02" y="86.10" width="3.70" height="5.2" fill="#565656"/><rect x="232.62" y="86.10" width="3.70" height="5.2" fill="#606060"/><rect x="236.23" y="86.10" width="3.70" height="5.2" fill="#767a80"/><rect x="243.44" y="86.10" width="3.70" height="5.2" fill="#606060"/><rect x="247.04" y="86.10" width="3.70" height="5.2" fill="#767a80"/><rect x="250.64" y="86.10" width="3.70" height="5.2" fill="#6a6a6a"/><rect x="254.25" y="86.10" width="3.70" height="5.2" fill="#5a5a5a"/><rect x="257.85" y="86.10" width="3.70" height="5.2" fill="#727272"/><rect x="261.46" y="86.10" width="3.70" height="5.2" fill="#686868"/><rect x="265.06" y="86.10" width="3.70" height="5.2" fill="#7c7c7c"/><rect x="268.66" y="86.10" width="3.70" height="5.2" fill="#5a5a5a"/><rect x="27.00" y="93.55" width="3.70" height="5.7" fill="#767a80"/><rect x="30.60" y="93.55" width="3.70" height="5.7" fill="#6a6a6a"/><rect x="37.81" y="93.55" width="3.70" height="5.7" fill="#686868"/><rect x="41.42" y="93.55" width="3.70" height="5.7" fill="#646464"/><rect x="48.62" y="93.55" width="3.70" height="5.7" fill="#6a6a6a"/><rect x="52.23" y="93.55" width="3.70" height="5.7" fill="#767a80"/><rect x="59.44" y="93.55" width="3.70" height="5.7" fill="#767a80"/><rect x="63.04" y="93.55" width="3.70" height="5.7" fill="#767a80"/><rect x="70.25" y="93.55" width="3.70" height="5.7" fill="#727272"/><rect x="73.85" y="93.55" width="3.70" height="5.7" fill="#646464"/><rect x="81.06" y="93.55" width="3.70" height="5.7" fill="#7c7c7c"/><rect x="84.66" y="93.55" width="3.70" height="5.7" fill="#6a6a6a"/><rect x="91.87" y="93.55" width="3.70" height="5.7" fill="#727272"/><rect x="95.48" y="93.55" width="3.70" height="5.7" fill="#767a80"/><rect x="102.68" y="93.55" width="3.70" height="5.7" fill="#606060"/><rect x="106.29" y="93.55" width="3.70" height="5.7" fill="#6a6a6a"/><rect x="117.10" y="93.55" width="3.70" height="5.7" fill="#767a80"/><rect x="120.70" y="93.55" width="3.70" height="5.7" fill="#727272"/><rect x="127.91" y="93.55" width="3.70" height="5.7" fill="#646464"/><rect x="131.52" y="93.55" width="3.70" height="5.7" fill="#767a80"/><rect x="138.72" y="93.55" width="3.70" height="5.7" fill="#6a6a6a"/><rect x="142.33" y="93.55" width="3.70" height="5.7" fill="#4c4c4c"/><rect x="149.54" y="93.55" width="3.70" height="5.7" fill="#7c7c7c"/><rect x="153.14" y="93.55" width="3.70" height="5.7" fill="#7c7c7c"/><rect x="160.35" y="93.55" width="3.70" height="5.7" fill="#727272"/><rect x="163.95" y="93.55" width="3.70" height="5.7" fill="#8e8e8e"/><rect x="171.16" y="93.55" width="3.70" height="5.7" fill="#727272"/><rect x="174.76" y="93.55" width="3.70" height="5.7" fill="#565656"/><rect x="181.97" y="93.55" width="3.70" height="5.7" fill="#686868"/><rect x="185.58" y="93.55" width="3.70" height="5.7" fill="#646464"/><rect x="192.78" y="93.55" width="3.70" height="5.7" fill="#6a6a6a"/><rect x="196.39" y="93.55" width="3.70" height="5.7" fill="#86827e"/><rect x="211.00" y="93.85" width="3.70" height="5.2" fill="#565656"/><rect x="214.60" y="93.85" width="3.70" height="5.2" fill="#8e8e8e"/><rect x="218.21" y="93.85" width="3.70" height="5.2" fill="#5a5a5a"/><rect x="221.81" y="93.85" width="3.70" height="5.2" fill="#646464"/><rect x="225.42" y="93.85" width="3.70" height="5.2" fill="#6a6a6a"/><rect x="229.02" y="93.85" width="3.70" height="5.2" fill="#727272"/><rect x="232.62" y="93.85" width="3.70" height="5.2" fill="#686868"/><rect x="236.23" y="93.85" width="3.70" height="5.2" fill="#86827e"/><rect x="243.44" y="93.85" width="3.70" height="5.2" fill="#7c7c7c"/><rect x="247.04" y="93.85" width="3.70" height="5.2" fill="#767a80"/><rect x="250.64" y="93.85" width="3.70" height="5.2" fill="#767a80"/><rect x="254.25" y="93.85" width="3.70" height="5.2" fill="#4c4c4c"/><rect x="257.85" y="93.85" width="3.70" height="5.2" fill="#606060"/><rect x="261.46" y="93.85" width="3.70" height="5.2" fill="#565656"/><rect x="265.06" y="93.85" width="3.70" height="5.2" fill="#606060"/><rect x="268.66" y="93.85" width="3.70" height="5.2" fill="#767a80"/><rect x="27.00" y="101.30" width="3.70" height="5.7" fill="#5a5a5a"/><rect x="30.60" y="101.30" width="3.70" height="5.7" fill="#767a80"/><rect x="37.81" y="101.30" width="3.70" height="5.7" fill="#4c4c4c"/><rect x="41.42" y="101.30" width="3.70" height="5.7" fill="#6a6a6a"/><rect x="48.62" y="101.30" width="3.70" height="5.7" fill="#686868"/><rect x="52.23" y="101.30" width="3.70" height="5.7" fill="#565656"/><rect x="59.44" y="101.30" width="3.70" height="5.7" fill="#4c4c4c"/><rect x="63.04" y="101.30" width="3.70" height="5.7" fill="#86827e"/><rect x="70.25" y="101.30" width="3.70" height="5.7" fill="#4c4c4c"/><rect x="73.85" y="101.30" width="3.70" height="5.7" fill="#86827e"/><rect x="81.06" y="101.30" width="3.70" height="5.7" fill="#727272"/><rect x="84.66" y="101.30" width="3.70" height="5.7" fill="#86827e"/><rect x="91.87" y="101.30" width="3.70" height="5.7" fill="#606060"/><rect x="95.48" y="101.30" width="3.70" height="5.7" fill="#86827e"/><rect x="102.68" y="101.30" width="3.70" height="5.7" fill="#86827e"/><rect x="106.29" y="101.30" width="3.70" height="5.7" fill="#4c4c4c"/><rect x="117.10" y="101.30" width="3.70" height="5.7" fill="#727272"/><rect x="120.70" y="101.30" width="3.70" height="5.7" fill="#7c7c7c"/><rect x="127.91" y="101.30" width="3.70" height="5.7" fill="#686868"/><rect x="131.52" y="101.30" width="3.70" height="5.7" fill="#606060"/><rect x="138.72" y="101.30" width="3.70" height="5.7" fill="#686868"/><rect x="142.33" y="101.30" width="3.70" height="5.7" fill="#6a6a6a"/><rect x="149.54" y="101.30" width="3.70" height="5.7" fill="#6a6a6a"/><rect x="153.14" y="101.30" width="3.70" height="5.7" fill="#86827e"/><rect x="160.35" y="101.30" width="3.70" height="5.7" fill="#727272"/><rect x="163.95" y="101.30" width="3.70" height="5.7" fill="#4c4c4c"/><rect x="171.16" y="101.30" width="3.70" height="5.7" fill="#4c4c4c"/><rect x="174.76" y="101.30" width="3.70" height="5.7" fill="#8e8e8e"/><rect x="181.97" y="101.30" width="3.70" height="5.7" fill="#727272"/><rect x="185.58" y="101.30" width="3.70" height="5.7" fill="#86827e"/><rect x="192.78" y="101.30" width="3.70" height="5.7" fill="#4c4c4c"/><rect x="196.39" y="101.30" width="3.70" height="5.7" fill="#6a6a6a"/><rect x="211.00" y="101.60" width="3.70" height="5.2" fill="#606060"/><rect x="214.60" y="101.60" width="3.70" height="5.2" fill="#6a6a6a"/><rect x="218.21" y="101.60" width="3.70" height="5.2" fill="#727272"/><rect x="221.81" y="101.60" width="3.70" height="5.2" fill="#606060"/><rect x="225.42" y="101.60" width="3.70" height="5.2" fill="#5a5a5a"/><rect x="229.02" y="101.60" width="3.70" height="5.2" fill="#6a6a6a"/><rect x="232.62" y="101.60" width="3.70" height="5.2" fill="#5a5a5a"/><rect x="236.23" y="101.60" width="3.70" height="5.2" fill="#565656"/><rect x="243.44" y="101.60" width="3.70" height="5.2" fill="#7c7c7c"/><rect x="247.04" y="101.60" width="3.70" height="5.2" fill="#6a6a6a"/><rect x="250.64" y="101.60" width="3.70" height="5.2" fill="#4c4c4c"/><rect x="254.25" y="101.60" width="3.70" height="5.2" fill="#646464"/><rect x="257.85" y="101.60" width="3.70" height="5.2" fill="#86827e"/><rect x="261.46" y="101.60" width="3.70" height="5.2" fill="#7c7c7c"/><rect x="265.06" y="101.60" width="3.70" height="5.2" fill="#86827e"/><rect x="268.66" y="101.60" width="3.70" height="5.2" fill="#4c4c4c"/><rect x="27.00" y="109.05" width="3.70" height="5.7" fill="#606060"/><rect x="30.60" y="109.05" width="3.70" height="5.7" fill="#5a5a5a"/><rect x="37.81" y="109.05" width="3.70" height="5.7" fill="#4c4c4c"/><rect x="41.42" y="109.05" width="3.70" height="5.7" fill="#646464"/><rect x="48.62" y="109.05" width="3.70" height="5.7" fill="#646464"/><rect x="52.23" y="109.05" width="3.70" height="5.7" fill="#7c7c7c"/><rect x="59.44" y="109.05" width="3.70" height="5.7" fill="#686868"/><rect x="63.04" y="109.05" width="3.70" height="5.7" fill="#727272"/><rect x="70.25" y="109.05" width="3.70" height="5.7" fill="#606060"/><rect x="73.85" y="109.05" width="3.70" height="5.7" fill="#686868"/><rect x="81.06" y="109.05" width="3.70" height="5.7" fill="#4c4c4c"/><rect x="84.66" y="109.05" width="3.70" height="5.7" fill="#767a80"/><rect x="91.87" y="109.05" width="3.70" height="5.7" fill="#8e8e8e"/><rect x="95.48" y="109.05" width="3.70" height="5.7" fill="#565656"/><rect x="102.68" y="109.05" width="3.70" height="5.7" fill="#5a5a5a"/><rect x="106.29" y="109.05" width="3.70" height="5.7" fill="#6a6a6a"/><rect x="117.10" y="109.05" width="3.70" height="5.7" fill="#767a80"/><rect x="120.70" y="109.05" width="3.70" height="5.7" fill="#606060"/><rect x="127.91" y="109.05" width="3.70" height="5.7" fill="#646464"/><rect x="131.52" y="109.05" width="3.70" height="5.7" fill="#565656"/><rect x="138.72" y="109.05" width="3.70" height="5.7" fill="#565656"/><rect x="142.33" y="109.05" width="3.70" height="5.7" fill="#767a80"/><rect x="149.54" y="109.05" width="3.70" height="5.7" fill="#4c4c4c"/><rect x="153.14" y="109.05" width="3.70" height="5.7" fill="#86827e"/><rect x="160.35" y="109.05" width="3.70" height="5.7" fill="#6a6a6a"/><rect x="163.95" y="109.05" width="3.70" height="5.7" fill="#6a6a6a"/><rect x="171.16" y="109.05" width="3.70" height="5.7" fill="#6a6a6a"/><rect x="174.76" y="109.05" width="3.70" height="5.7" fill="#686868"/><rect x="181.97" y="109.05" width="3.70" height="5.7" fill="#686868"/><rect x="185.58" y="109.05" width="3.70" height="5.7" fill="#5a5a5a"/><rect x="192.78" y="109.05" width="3.70" height="5.7" fill="#6a6a6a"/><rect x="196.39" y="109.05" width="3.70" height="5.7" fill="#4c4c4c"/><rect x="211.00" y="109.35" width="3.70" height="5.2" fill="#4e4e4e"/><rect x="214.60" y="109.35" width="3.70" height="5.2" fill="#5a5a5a"/><rect x="218.21" y="109.35" width="3.70" height="5.2" fill="#565656"/><rect x="221.81" y="109.35" width="3.70" height="5.2" fill="#3a3a3a"/><rect x="225.42" y="109.35" width="3.70" height="5.2" fill="#767a80"/><rect x="229.02" y="109.35" width="3.70" height="5.2" fill="#343434"/><rect x="232.62" y="109.35" width="3.70" height="5.2" fill="#343434"/><rect x="236.23" y="109.35" width="3.70" height="5.2" fill="#646464"/><rect x="243.44" y="109.35" width="3.70" height="5.2" fill="#727272"/><rect x="247.04" y="109.35" width="3.70" height="5.2" fill="#646464"/><rect x="250.64" y="109.35" width="3.70" height="5.2" fill="#7c7c7c"/><rect x="254.25" y="109.35" width="3.70" height="5.2" fill="#8e8e8e"/><rect x="257.85" y="109.35" width="3.70" height="5.2" fill="#606060"/><rect x="261.46" y="109.35" width="3.70" height="5.2" fill="#343434"/><rect x="265.06" y="109.35" width="3.70" height="5.2" fill="#686868"/><rect x="268.66" y="109.35" width="3.70" height="5.2" fill="#343434"/><rect x="27.00" y="116.80" width="3.70" height="5.7" fill="#6a6a6a"/><rect x="30.60" y="116.80" width="3.70" height="5.7" fill="#86827e"/><rect x="37.81" y="116.80" width="3.70" height="5.7" fill="#606060"/><rect x="41.42" y="116.80" width="3.70" height="5.7" fill="#767a80"/><rect x="48.62" y="116.80" width="3.70" height="5.7" fill="#6a6a6a"/><rect x="52.23" y="116.80" width="3.70" height="5.7" fill="#8e8e8e"/><rect x="59.44" y="116.80" width="3.70" height="5.7" fill="#86827e"/><rect x="63.04" y="116.80" width="3.70" height="5.7" fill="#565656"/><rect x="70.25" y="116.80" width="3.70" height="5.7" fill="#5a5a5a"/><rect x="73.85" y="116.80" width="3.70" height="5.7" fill="#646464"/><rect x="81.06" y="116.80" width="3.70" height="5.7" fill="#646464"/><rect x="84.66" y="116.80" width="3.70" height="5.7" fill="#5a5a5a"/><rect x="91.87" y="116.80" width="3.70" height="5.7" fill="#7c7c7c"/><rect x="95.48" y="116.80" width="3.70" height="5.7" fill="#727272"/><rect x="102.68" y="116.80" width="3.70" height="5.7" fill="#6a6a6a"/><rect x="106.29" y="116.80" width="3.70" height="5.7" fill="#7c7c7c"/><rect x="117.10" y="116.80" width="3.70" height="5.7" fill="#4c4c4c"/><rect x="120.70" y="116.80" width="3.70" height="5.7" fill="#4c4c4c"/><rect x="127.91" y="116.80" width="3.70" height="5.7" fill="#5a5a5a"/><rect x="131.52" y="116.80" width="3.70" height="5.7" fill="#767a80"/><rect x="138.72" y="116.80" width="3.70" height="5.7" fill="#4c4c4c"/><rect x="142.33" y="116.80" width="3.70" height="5.7" fill="#6a6a6a"/><rect x="149.54" y="116.80" width="3.70" height="5.7" fill="#606060"/><rect x="153.14" y="116.80" width="3.70" height="5.7" fill="#565656"/><rect x="160.35" y="116.80" width="3.70" height="5.7" fill="#606060"/><rect x="163.95" y="116.80" width="3.70" height="5.7" fill="#4c4c4c"/><rect x="171.16" y="116.80" width="3.70" height="5.7" fill="#686868"/><rect x="174.76" y="116.80" width="3.70" height="5.7" fill="#767a80"/><rect x="181.97" y="116.80" width="3.70" height="5.7" fill="#8e8e8e"/><rect x="185.58" y="116.80" width="3.70" height="5.7" fill="#767a80"/><rect x="192.78" y="116.80" width="3.70" height="5.7" fill="#606060"/><rect x="196.39" y="116.80" width="3.70" height="5.7" fill="#727272"/><rect x="211.00" y="117.10" width="3.70" height="5.2" fill="#646464"/><rect x="214.60" y="117.10" width="3.70" height="5.2" fill="#343434"/><rect x="218.21" y="117.10" width="3.70" height="5.2" fill="#727272"/><rect x="221.81" y="117.10" width="3.70" height="5.2" fill="#565656"/><rect x="225.42" y="117.10" width="3.70" height="5.2" fill="#3e3e3e"/><rect x="229.02" y="117.10" width="3.70" height="5.2" fill="#686868"/><rect x="232.62" y="117.10" width="3.70" height="5.2" fill="#343434"/><rect x="236.23" y="117.10" width="3.70" height="5.2" fill="#606060"/><rect x="243.44" y="117.10" width="3.70" height="5.2" fill="#565656"/><rect x="247.04" y="117.10" width="3.70" height="5.2" fill="#606060"/><rect x="250.64" y="117.10" width="3.70" height="5.2" fill="#4e4e4e"/><rect x="254.25" y="117.10" width="3.70" height="5.2" fill="#3e3e3e"/><rect x="257.85" y="117.10" width="3.70" height="5.2" fill="#5a5a5a"/><rect x="261.46" y="117.10" width="3.70" height="5.2" fill="#727272"/><rect x="265.06" y="117.10" width="3.70" height="5.2" fill="#6a6a6a"/><rect x="268.66" y="117.10" width="3.70" height="5.2" fill="#585858"/><rect x="27.00" y="124.55" width="3.70" height="5.7" fill="#7c7c7c"/><rect x="30.60" y="124.55" width="3.70" height="5.7" fill="#4c4c4c"/><rect x="37.81" y="124.55" width="3.70" height="5.7" fill="#6a6a6a"/><rect x="41.42" y="124.55" width="3.70" height="5.7" fill="#7c7c7c"/><rect x="48.62" y="124.55" width="3.70" height="5.7" fill="#8e8e8e"/><rect x="52.23" y="124.55" width="3.70" height="5.7" fill="#606060"/><rect x="59.44" y="124.55" width="3.70" height="5.7" fill="#606060"/><rect x="63.04" y="124.55" width="3.70" height="5.7" fill="#646464"/><rect x="70.25" y="124.55" width="3.70" height="5.7" fill="#6a6a6a"/><rect x="73.85" y="124.55" width="3.70" height="5.7" fill="#767a80"/><rect x="81.06" y="124.55" width="3.70" height="5.7" fill="#6a6a6a"/><rect x="84.66" y="124.55" width="3.70" height="5.7" fill="#86827e"/><rect x="91.87" y="124.55" width="3.70" height="5.7" fill="#5a5a5a"/><rect x="95.48" y="124.55" width="3.70" height="5.7" fill="#7c7c7c"/><rect x="102.68" y="124.55" width="3.70" height="5.7" fill="#767a80"/><rect x="106.29" y="124.55" width="3.70" height="5.7" fill="#646464"/><rect x="117.10" y="124.55" width="3.70" height="5.7" fill="#7c7c7c"/><rect x="120.70" y="124.55" width="3.70" height="5.7" fill="#646464"/><rect x="127.91" y="124.55" width="3.70" height="5.7" fill="#7c7c7c"/><rect x="131.52" y="124.55" width="3.70" height="5.7" fill="#606060"/><rect x="138.72" y="124.55" width="3.70" height="5.7" fill="#4c4c4c"/><rect x="142.33" y="124.55" width="3.70" height="5.7" fill="#686868"/><rect x="149.54" y="124.55" width="3.70" height="5.7" fill="#5a5a5a"/><rect x="153.14" y="124.55" width="3.70" height="5.7" fill="#6a6a6a"/><rect x="160.35" y="124.55" width="3.70" height="5.7" fill="#606060"/><rect x="163.95" y="124.55" width="3.70" height="5.7" fill="#606060"/><rect x="171.16" y="124.55" width="3.70" height="5.7" fill="#7c7c7c"/><rect x="174.76" y="124.55" width="3.70" height="5.7" fill="#767a80"/><rect x="181.97" y="124.55" width="3.70" height="5.7" fill="#5a5a5a"/><rect x="185.58" y="124.55" width="3.70" height="5.7" fill="#5a5a5a"/><rect x="192.78" y="124.55" width="3.70" height="5.7" fill="#4c4c4c"/><rect x="196.39" y="124.55" width="3.70" height="5.7" fill="#727272"/><rect x="211.00" y="124.85" width="3.70" height="5.2" fill="#5a5a5a"/><rect x="214.60" y="124.85" width="3.70" height="5.2" fill="#86827e"/><rect x="218.21" y="124.85" width="3.70" height="5.2" fill="#606060"/><rect x="221.81" y="124.85" width="3.70" height="5.2" fill="#3e3e3e"/><rect x="225.42" y="124.85" width="3.70" height="5.2" fill="#5a5a5a"/><rect x="229.02" y="124.85" width="3.70" height="5.2" fill="#606060"/><rect x="232.62" y="124.85" width="3.70" height="5.2" fill="#3e3e3e"/><rect x="236.23" y="124.85" width="3.70" height="5.2" fill="#3a3a3a"/><rect x="243.44" y="124.85" width="3.70" height="5.2" fill="#7c7c7c"/><rect x="247.04" y="124.85" width="3.70" height="5.2" fill="#7c7c7c"/><rect x="250.64" y="124.85" width="3.70" height="5.2" fill="#7c7c7c"/><rect x="254.25" y="124.85" width="3.70" height="5.2" fill="#6a6a6a"/><rect x="257.85" y="124.85" width="3.70" height="5.2" fill="#8e8e8e"/><rect x="261.46" y="124.85" width="3.70" height="5.2" fill="#565656"/><rect x="265.06" y="124.85" width="3.70" height="5.2" fill="#343434"/><rect x="268.66" y="124.85" width="3.70" height="5.2" fill="#5a5a5a"/><rect x="27.00" y="132.30" width="3.70" height="5.7" fill="#606060"/><rect x="30.60" y="132.30" width="3.70" height="5.7" fill="#8e8e8e"/><rect x="37.81" y="132.30" width="3.70" height="5.7" fill="#565656"/><rect x="41.42" y="132.30" width="3.70" height="5.7" fill="#4c4c4c"/><rect x="48.62" y="132.30" width="3.70" height="5.7" fill="#606060"/><rect x="52.23" y="132.30" width="3.70" height="5.7" fill="#7c7c7c"/><rect x="59.44" y="132.30" width="3.70" height="5.7" fill="#606060"/><rect x="63.04" y="132.30" width="3.70" height="5.7" fill="#8e8e8e"/><rect x="70.25" y="132.30" width="3.70" height="5.7" fill="#565656"/><rect x="73.85" y="132.30" width="3.70" height="5.7" fill="#4c4c4c"/><rect x="81.06" y="132.30" width="3.70" height="5.7" fill="#606060"/><rect x="84.66" y="132.30" width="3.70" height="5.7" fill="#686868"/><rect x="91.87" y="132.30" width="3.70" height="5.7" fill="#606060"/><rect x="95.48" y="132.30" width="3.70" height="5.7" fill="#565656"/><rect x="102.68" y="132.30" width="3.70" height="5.7" fill="#4c4c4c"/><rect x="106.29" y="132.30" width="3.70" height="5.7" fill="#767a80"/><rect x="117.10" y="132.30" width="3.70" height="5.7" fill="#686868"/><rect x="120.70" y="132.30" width="3.70" height="5.7" fill="#86827e"/><rect x="127.91" y="132.30" width="3.70" height="5.7" fill="#686868"/><rect x="131.52" y="132.30" width="3.70" height="5.7" fill="#727272"/><rect x="138.72" y="132.30" width="3.70" height="5.7" fill="#727272"/><rect x="142.33" y="132.30" width="3.70" height="5.7" fill="#565656"/><rect x="149.54" y="132.30" width="3.70" height="5.7" fill="#86827e"/><rect x="153.14" y="132.30" width="3.70" height="5.7" fill="#7c7c7c"/><rect x="160.35" y="132.30" width="3.70" height="5.7" fill="#565656"/><rect x="163.95" y="132.30" width="3.70" height="5.7" fill="#5a5a5a"/><rect x="171.16" y="132.30" width="3.70" height="5.7" fill="#646464"/><rect x="174.76" y="132.30" width="3.70" height="5.7" fill="#686868"/><rect x="181.97" y="132.30" width="3.70" height="5.7" fill="#767a80"/><rect x="185.58" y="132.30" width="3.70" height="5.7" fill="#606060"/><rect x="192.78" y="132.30" width="3.70" height="5.7" fill="#6a6a6a"/><rect x="196.39" y="132.30" width="3.70" height="5.7" fill="#5a5a5a"/><rect x="211.00" y="132.60" width="3.70" height="5.2" fill="#2d2d2d"/><rect x="214.60" y="132.60" width="3.70" height="5.2" fill="#363636"/><rect x="218.21" y="132.60" width="3.70" height="5.2" fill="#2f2f2f"/><rect x="221.81" y="132.60" width="3.70" height="5.2" fill="#2f2f2f"/><rect x="225.42" y="132.60" width="3.70" height="5.2" fill="#2f2f2f"/><rect x="229.02" y="132.60" width="3.70" height="5.2" fill="#323232"/><rect x="232.62" y="132.60" width="3.70" height="5.2" fill="#2d2d2d"/><rect x="236.23" y="132.60" width="3.70" height="5.2" fill="#363636"/><rect x="243.44" y="132.60" width="3.70" height="5.2" fill="#303030"/><rect x="247.04" y="132.60" width="3.70" height="5.2" fill="#2d2d2d"/><rect x="250.64" y="132.60" width="3.70" height="5.2" fill="#363636"/><rect x="254.25" y="132.60" width="3.70" height="5.2" fill="#2d2d2d"/><rect x="257.85" y="132.60" width="3.70" height="5.2" fill="#363636"/><rect x="261.46" y="132.60" width="3.70" height="5.2" fill="#363636"/><rect x="265.06" y="132.60" width="3.70" height="5.2" fill="#303030"/><rect x="268.66" y="132.60" width="3.70" height="5.2" fill="#2f2f2f"/><rect x="27.00" y="140.05" width="3.70" height="5.7" fill="#4c4c4c"/><rect x="30.60" y="140.05" width="3.70" height="5.7" fill="#606060"/><rect x="37.81" y="140.05" width="3.70" height="5.7" fill="#767a80"/><rect x="41.42" y="140.05" width="3.70" height="5.7" fill="#727272"/><rect x="48.62" y="140.05" width="3.70" height="5.7" fill="#606060"/><rect x="52.23" y="140.05" width="3.70" height="5.7" fill="#6a6a6a"/><rect x="59.44" y="140.05" width="3.70" height="5.7" fill="#7c7c7c"/><rect x="63.04" y="140.05" width="3.70" height="5.7" fill="#686868"/><rect x="70.25" y="140.05" width="3.70" height="5.7" fill="#727272"/><rect x="73.85" y="140.05" width="3.70" height="5.7" fill="#8e8e8e"/><rect x="81.06" y="140.05" width="3.70" height="5.7" fill="#86827e"/><rect x="84.66" y="140.05" width="3.70" height="5.7" fill="#86827e"/><rect x="91.87" y="140.05" width="3.70" height="5.7" fill="#6a6a6a"/><rect x="95.48" y="140.05" width="3.70" height="5.7" fill="#86827e"/><rect x="102.68" y="140.05" width="3.70" height="5.7" fill="#8e8e8e"/><rect x="106.29" y="140.05" width="3.70" height="5.7" fill="#606060"/><rect x="117.10" y="140.05" width="3.70" height="5.7" fill="#6a6a6a"/><rect x="120.70" y="140.05" width="3.70" height="5.7" fill="#686868"/><rect x="127.91" y="140.05" width="3.70" height="5.7" fill="#686868"/><rect x="131.52" y="140.05" width="3.70" height="5.7" fill="#686868"/><rect x="138.72" y="140.05" width="3.70" height="5.7" fill="#86827e"/><rect x="142.33" y="140.05" width="3.70" height="5.7" fill="#6a6a6a"/><rect x="149.54" y="140.05" width="3.70" height="5.7" fill="#6a6a6a"/><rect x="153.14" y="140.05" width="3.70" height="5.7" fill="#606060"/><rect x="160.35" y="140.05" width="3.70" height="5.7" fill="#686868"/><rect x="163.95" y="140.05" width="3.70" height="5.7" fill="#8e8e8e"/><rect x="171.16" y="140.05" width="3.70" height="5.7" fill="#5a5a5a"/><rect x="174.76" y="140.05" width="3.70" height="5.7" fill="#727272"/><rect x="181.97" y="140.05" width="3.70" height="5.7" fill="#606060"/><rect x="185.58" y="140.05" width="3.70" height="5.7" fill="#7c7c7c"/><rect x="192.78" y="140.05" width="3.70" height="5.7" fill="#727272"/><rect x="196.39" y="140.05" width="3.70" height="5.7" fill="#767a80"/><rect x="211.00" y="140.35" width="3.70" height="5.2" fill="#363636"/><rect x="214.60" y="140.35" width="3.70" height="5.2" fill="#363636"/><rect x="218.21" y="140.35" width="3.70" height="5.2" fill="#363636"/><rect x="221.81" y="140.35" width="3.70" height="5.2" fill="#323232"/><rect x="225.42" y="140.35" width="3.70" height="5.2" fill="#323232"/><rect x="229.02" y="140.35" width="3.70" height="5.2" fill="#5a5a5a"/><rect x="232.62" y="140.35" width="3.70" height="5.2" fill="#303030"/><rect x="236.23" y="140.35" width="3.70" height="5.2" fill="#2c2c2c"/><rect x="243.44" y="140.35" width="3.70" height="5.2" fill="#2d2d2d"/><rect x="247.04" y="140.35" width="3.70" height="5.2" fill="#2c2c2c"/><rect x="250.64" y="140.35" width="3.70" height="5.2" fill="#323232"/><rect x="254.25" y="140.35" width="3.70" height="5.2" fill="#323232"/><rect x="257.85" y="140.35" width="3.70" height="5.2" fill="#2f2f2f"/><rect x="261.46" y="140.35" width="3.70" height="5.2" fill="#363636"/><rect x="265.06" y="140.35" width="3.70" height="5.2" fill="#2d2d2d"/><rect x="268.66" y="140.35" width="3.70" height="5.2" fill="#363636"/><rect x="27.00" y="147.80" width="3.70" height="5.7" fill="#727272"/><rect x="30.60" y="147.80" width="3.70" height="5.7" fill="#727272"/><rect x="37.81" y="147.80" width="3.70" height="5.7" fill="#6a6a6a"/><rect x="41.42" y="147.80" width="3.70" height="5.7" fill="#8e8e8e"/><rect x="48.62" y="147.80" width="3.70" height="5.7" fill="#727272"/><rect x="52.23" y="147.80" width="3.70" height="5.7" fill="#7c7c7c"/><rect x="59.44" y="147.80" width="3.70" height="5.7" fill="#727272"/><rect x="63.04" y="147.80" width="3.70" height="5.7" fill="#4c4c4c"/><rect x="70.25" y="147.80" width="3.70" height="5.7" fill="#767a80"/><rect x="73.85" y="147.80" width="3.70" height="5.7" fill="#686868"/><rect x="81.06" y="147.80" width="3.70" height="5.7" fill="#767a80"/><rect x="84.66" y="147.80" width="3.70" height="5.7" fill="#565656"/><rect x="91.87" y="147.80" width="3.70" height="5.7" fill="#7c7c7c"/><rect x="95.48" y="147.80" width="3.70" height="5.7" fill="#565656"/><rect x="102.68" y="147.80" width="3.70" height="5.7" fill="#4c4c4c"/><rect x="106.29" y="147.80" width="3.70" height="5.7" fill="#767a80"/><rect x="117.10" y="147.80" width="3.70" height="5.7" fill="#8e8e8e"/><rect x="120.70" y="147.80" width="3.70" height="5.7" fill="#5a5a5a"/><rect x="127.91" y="147.80" width="3.70" height="5.7" fill="#7c7c7c"/><rect x="131.52" y="147.80" width="3.70" height="5.7" fill="#686868"/><rect x="138.72" y="147.80" width="3.70" height="5.7" fill="#646464"/><rect x="142.33" y="147.80" width="3.70" height="5.7" fill="#5a5a5a"/><rect x="149.54" y="147.80" width="3.70" height="5.7" fill="#727272"/><rect x="153.14" y="147.80" width="3.70" height="5.7" fill="#6a6a6a"/><rect x="160.35" y="147.80" width="3.70" height="5.7" fill="#6a6a6a"/><rect x="163.95" y="147.80" width="3.70" height="5.7" fill="#6a6a6a"/><rect x="171.16" y="147.80" width="3.70" height="5.7" fill="#8e8e8e"/><rect x="174.76" y="147.80" width="3.70" height="5.7" fill="#6a6a6a"/><rect x="181.97" y="147.80" width="3.70" height="5.7" fill="#86827e"/><rect x="185.58" y="147.80" width="3.70" height="5.7" fill="#6a6a6a"/><rect x="192.78" y="147.80" width="3.70" height="5.7" fill="#686868"/><rect x="196.39" y="147.80" width="3.70" height="5.7" fill="#6a6a6a"/><rect x="211.00" y="148.10" width="3.70" height="5.2" fill="#323232"/><rect x="214.60" y="148.10" width="3.70" height="5.2" fill="#323232"/><rect x="218.21" y="148.10" width="3.70" height="5.2" fill="#2c2c2c"/><rect x="221.81" y="148.10" width="3.70" height="5.2" fill="#2f2f2f"/><rect x="225.42" y="148.10" width="3.70" height="5.2" fill="#323232"/><rect x="229.02" y="148.10" width="3.70" height="5.2" fill="#323232"/><rect x="232.62" y="148.10" width="3.70" height="5.2" fill="#2f2f2f"/><rect x="236.23" y="148.10" width="3.70" height="5.2" fill="#2f2f2f"/><rect x="243.44" y="148.10" width="3.70" height="5.2" fill="#363636"/><rect x="247.04" y="148.10" width="3.70" height="5.2" fill="#323232"/><rect x="250.64" y="148.10" width="3.70" height="5.2" fill="#2d2d2d"/><rect x="254.25" y="148.10" width="3.70" height="5.2" fill="#2d2d2d"/><rect x="257.85" y="148.10" width="3.70" height="5.2" fill="#2f2f2f"/><rect x="261.46" y="148.10" width="3.70" height="5.2" fill="#2c2c2c"/><rect x="265.06" y="148.10" width="3.70" height="5.2" fill="#2f2f2f"/><rect x="268.66" y="148.10" width="3.70" height="5.2" fill="#323232"/><rect x="27.00" y="155.55" width="3.70" height="5.7" fill="#767a80"/><rect x="30.60" y="155.55" width="3.70" height="5.7" fill="#8e8e8e"/><rect x="37.81" y="155.55" width="3.70" height="5.7" fill="#6a6a6a"/><rect x="41.42" y="155.55" width="3.70" height="5.7" fill="#5a5a5a"/><rect x="48.62" y="155.55" width="3.70" height="5.7" fill="#606060"/><rect x="52.23" y="155.55" width="3.70" height="5.7" fill="#727272"/><rect x="59.44" y="155.55" width="3.70" height="5.7" fill="#5a5a5a"/><rect x="63.04" y="155.55" width="3.70" height="5.7" fill="#8e8e8e"/><rect x="70.25" y="155.55" width="3.70" height="5.7" fill="#686868"/><rect x="73.85" y="155.55" width="3.70" height="5.7" fill="#8e8e8e"/><rect x="81.06" y="155.55" width="3.70" height="5.7" fill="#86827e"/><rect x="84.66" y="155.55" width="3.70" height="5.7" fill="#7c7c7c"/><rect x="91.87" y="155.55" width="3.70" height="5.7" fill="#606060"/><rect x="95.48" y="155.55" width="3.70" height="5.7" fill="#86827e"/><rect x="102.68" y="155.55" width="3.70" height="5.7" fill="#86827e"/><rect x="106.29" y="155.55" width="3.70" height="5.7" fill="#565656"/><rect x="117.10" y="155.55" width="3.70" height="5.7" fill="#606060"/><rect x="120.70" y="155.55" width="3.70" height="5.7" fill="#7c7c7c"/><rect x="127.91" y="155.55" width="3.70" height="5.7" fill="#6a6a6a"/><rect x="131.52" y="155.55" width="3.70" height="5.7" fill="#606060"/><rect x="138.72" y="155.55" width="3.70" height="5.7" fill="#8e8e8e"/><rect x="142.33" y="155.55" width="3.70" height="5.7" fill="#686868"/><rect x="149.54" y="155.55" width="3.70" height="5.7" fill="#5a5a5a"/><rect x="153.14" y="155.55" width="3.70" height="5.7" fill="#7c7c7c"/><rect x="160.35" y="155.55" width="3.70" height="5.7" fill="#606060"/><rect x="163.95" y="155.55" width="3.70" height="5.7" fill="#86827e"/><rect x="171.16" y="155.55" width="3.70" height="5.7" fill="#4c4c4c"/><rect x="174.76" y="155.55" width="3.70" height="5.7" fill="#5a5a5a"/><rect x="181.97" y="155.55" width="3.70" height="5.7" fill="#86827e"/><rect x="185.58" y="155.55" width="3.70" height="5.7" fill="#565656"/><rect x="192.78" y="155.55" width="3.70" height="5.7" fill="#8e8e8e"/><rect x="196.39" y="155.55" width="3.70" height="5.7" fill="#6a6a6a"/><rect x="211.00" y="155.85" width="3.70" height="5.2" fill="#2f2f2f"/><rect x="214.60" y="155.85" width="3.70" height="5.2" fill="#2c2c2c"/><rect x="218.21" y="155.85" width="3.70" height="5.2" fill="#363636"/><rect x="221.81" y="155.85" width="3.70" height="5.2" fill="#363636"/><rect x="225.42" y="155.85" width="3.70" height="5.2" fill="#323232"/><rect x="229.02" y="155.85" width="3.70" height="5.2" fill="#2f2f2f"/><rect x="232.62" y="155.85" width="3.70" height="5.2" fill="#363636"/><rect x="236.23" y="155.85" width="3.70" height="5.2" fill="#363636"/><rect x="243.44" y="155.85" width="3.70" height="5.2" fill="#303030"/><rect x="247.04" y="155.85" width="3.70" height="5.2" fill="#2f2f2f"/><rect x="250.64" y="155.85" width="3.70" height="5.2" fill="#2c2c2c"/><rect x="254.25" y="155.85" width="3.70" height="5.2" fill="#363636"/><rect x="257.85" y="155.85" width="3.70" height="5.2" fill="#2d2d2d"/><rect x="261.46" y="155.85" width="3.70" height="5.2" fill="#363636"/><rect x="265.06" y="155.85" width="3.70" height="5.2" fill="#323232"/><rect x="268.66" y="155.85" width="3.70" height="5.2" fill="#363636"/><rect x="27.00" y="163.30" width="3.70" height="5.7" fill="#565656"/><rect x="30.60" y="163.30" width="3.70" height="5.7" fill="#4c4c4c"/><rect x="37.81" y="163.30" width="3.70" height="5.7" fill="#727272"/><rect x="41.42" y="163.30" width="3.70" height="5.7" fill="#727272"/><rect x="48.62" y="163.30" width="3.70" height="5.7" fill="#4c4c4c"/><rect x="52.23" y="163.30" width="3.70" height="5.7" fill="#8e8e8e"/><rect x="59.44" y="163.30" width="3.70" height="5.7" fill="#86827e"/><rect x="63.04" y="163.30" width="3.70" height="5.7" fill="#767a80"/><rect x="70.25" y="163.30" width="3.70" height="5.7" fill="#565656"/><rect x="73.85" y="163.30" width="3.70" height="5.7" fill="#565656"/><rect x="81.06" y="163.30" width="3.70" height="5.7" fill="#606060"/><rect x="84.66" y="163.30" width="3.70" height="5.7" fill="#606060"/><rect x="91.87" y="163.30" width="3.70" height="5.7" fill="#646464"/><rect x="95.48" y="163.30" width="3.70" height="5.7" fill="#565656"/><rect x="102.68" y="163.30" width="3.70" height="5.7" fill="#5a5a5a"/><rect x="106.29" y="163.30" width="3.70" height="5.7" fill="#4c4c4c"/><rect x="117.10" y="163.30" width="3.70" height="5.7" fill="#727272"/><rect x="120.70" y="163.30" width="3.70" height="5.7" fill="#8e8e8e"/><rect x="127.91" y="163.30" width="3.70" height="5.7" fill="#8e8e8e"/><rect x="131.52" y="163.30" width="3.70" height="5.7" fill="#86827e"/><rect x="138.72" y="163.30" width="3.70" height="5.7" fill="#686868"/><rect x="142.33" y="163.30" width="3.70" height="5.7" fill="#646464"/><rect x="149.54" y="163.30" width="3.70" height="5.7" fill="#565656"/><rect x="153.14" y="163.30" width="3.70" height="5.7" fill="#565656"/><rect x="160.35" y="163.30" width="3.70" height="5.7" fill="#86827e"/><rect x="163.95" y="163.30" width="3.70" height="5.7" fill="#6a6a6a"/><rect x="171.16" y="163.30" width="3.70" height="5.7" fill="#565656"/><rect x="174.76" y="163.30" width="3.70" height="5.7" fill="#646464"/><rect x="181.97" y="163.30" width="3.70" height="5.7" fill="#565656"/><rect x="185.58" y="163.30" width="3.70" height="5.7" fill="#727272"/><rect x="192.78" y="163.30" width="3.70" height="5.7" fill="#727272"/><rect x="196.39" y="163.30" width="3.70" height="5.7" fill="#4c4c4c"/><rect x="211.00" y="163.60" width="3.70" height="5.2" fill="#323232"/><rect x="214.60" y="163.60" width="3.70" height="5.2" fill="#2f2f2f"/><rect x="218.21" y="163.60" width="3.70" height="5.2" fill="#363636"/><rect x="221.81" y="163.60" width="3.70" height="5.2" fill="#2c2c2c"/><rect x="225.42" y="163.60" width="3.70" height="5.2" fill="#363636"/><rect x="229.02" y="163.60" width="3.70" height="5.2" fill="#303030"/><rect x="232.62" y="163.60" width="3.70" height="5.2" fill="#323232"/><rect x="236.23" y="163.60" width="3.70" height="5.2" fill="#323232"/><rect x="243.44" y="163.60" width="3.70" height="5.2" fill="#2c2c2c"/><rect x="247.04" y="163.60" width="3.70" height="5.2" fill="#363636"/><rect x="250.64" y="163.60" width="3.70" height="5.2" fill="#323232"/><rect x="254.25" y="163.60" width="3.70" height="5.2" fill="#2c2c2c"/><rect x="257.85" y="163.60" width="3.70" height="5.2" fill="#2d2d2d"/><rect x="261.46" y="163.60" width="3.70" height="5.2" fill="#323232"/><rect x="265.06" y="163.60" width="3.70" height="5.2" fill="#323232"/><rect x="268.66" y="163.60" width="3.70" height="5.2" fill="#2c2c2c"/><rect x="27.00" y="171.05" width="3.70" height="5.7" fill="#5a5a5a"/><rect x="30.60" y="171.05" width="3.70" height="5.7" fill="#606060"/><rect x="37.81" y="171.05" width="3.70" height="5.7" fill="#5a5a5a"/><rect x="41.42" y="171.05" width="3.70" height="5.7" fill="#86827e"/><rect x="48.62" y="171.05" width="3.70" height="5.7" fill="#727272"/><rect x="52.23" y="171.05" width="3.70" height="5.7" fill="#4c4c4c"/><rect x="59.44" y="171.05" width="3.70" height="5.7" fill="#8e8e8e"/><rect x="63.04" y="171.05" width="3.70" height="5.7" fill="#767a80"/><rect x="70.25" y="171.05" width="3.70" height="5.7" fill="#646464"/><rect x="73.85" y="171.05" width="3.70" height="5.7" fill="#5a5a5a"/><rect x="81.06" y="171.05" width="3.70" height="5.7" fill="#6a6a6a"/><rect x="84.66" y="171.05" width="3.70" height="5.7" fill="#5a5a5a"/><rect x="91.87" y="171.05" width="3.70" height="5.7" fill="#4c4c4c"/><rect x="95.48" y="171.05" width="3.70" height="5.7" fill="#6a6a6a"/><rect x="102.68" y="171.05" width="3.70" height="5.7" fill="#8e8e8e"/><rect x="106.29" y="171.05" width="3.70" height="5.7" fill="#7c7c7c"/><rect x="117.10" y="171.05" width="3.70" height="5.7" fill="#4c4c4c"/><rect x="120.70" y="171.05" width="3.70" height="5.7" fill="#4c4c4c"/><rect x="127.91" y="171.05" width="3.70" height="5.7" fill="#5a5a5a"/><rect x="131.52" y="171.05" width="3.70" height="5.7" fill="#86827e"/><rect x="138.72" y="171.05" width="3.70" height="5.7" fill="#767a80"/><rect x="142.33" y="171.05" width="3.70" height="5.7" fill="#646464"/><rect x="149.54" y="171.05" width="3.70" height="5.7" fill="#767a80"/><rect x="153.14" y="171.05" width="3.70" height="5.7" fill="#565656"/><rect x="160.35" y="171.05" width="3.70" height="5.7" fill="#606060"/><rect x="163.95" y="171.05" width="3.70" height="5.7" fill="#606060"/><rect x="171.16" y="171.05" width="3.70" height="5.7" fill="#8e8e8e"/><rect x="174.76" y="171.05" width="3.70" height="5.7" fill="#767a80"/><rect x="181.97" y="171.05" width="3.70" height="5.7" fill="#767a80"/><rect x="185.58" y="171.05" width="3.70" height="5.7" fill="#7c7c7c"/><rect x="192.78" y="171.05" width="3.70" height="5.7" fill="#767a80"/><rect x="196.39" y="171.05" width="3.70" height="5.7" fill="#8e8e8e"/><rect x="211.00" y="171.35" width="3.70" height="5.2" fill="#363636"/><rect x="214.60" y="171.35" width="3.70" height="5.2" fill="#363636"/><rect x="218.21" y="171.35" width="3.70" height="5.2" fill="#2f2f2f"/><rect x="221.81" y="171.35" width="3.70" height="5.2" fill="#363636"/><rect x="225.42" y="171.35" width="3.70" height="5.2" fill="#363636"/><rect x="229.02" y="171.35" width="3.70" height="5.2" fill="#303030"/><rect x="232.62" y="171.35" width="3.70" height="5.2" fill="#303030"/><rect x="236.23" y="171.35" width="3.70" height="5.2" fill="#303030"/><rect x="243.44" y="171.35" width="3.70" height="5.2" fill="#303030"/><rect x="247.04" y="171.35" width="3.70" height="5.2" fill="#2f2f2f"/><rect x="250.64" y="171.35" width="3.70" height="5.2" fill="#363636"/><rect x="254.25" y="171.35" width="3.70" height="5.2" fill="#323232"/><rect x="257.85" y="171.35" width="3.70" height="5.2" fill="#6a6a6a"/><rect x="261.46" y="171.35" width="3.70" height="5.2" fill="#303030"/><rect x="265.06" y="171.35" width="3.70" height="5.2" fill="#2f2f2f"/><rect x="268.66" y="171.35" width="3.70" height="5.2" fill="#363636"/><rect x="27.00" y="178.80" width="3.70" height="5.7" fill="#6a6a6a"/><rect x="30.60" y="178.80" width="3.70" height="5.7" fill="#565656"/><rect x="37.81" y="178.80" width="3.70" height="5.7" fill="#5a5a5a"/><rect x="41.42" y="178.80" width="3.70" height="5.7" fill="#686868"/><rect x="48.62" y="178.80" width="3.70" height="5.7" fill="#7c7c7c"/><rect x="52.23" y="178.80" width="3.70" height="5.7" fill="#727272"/><rect x="59.44" y="178.80" width="3.70" height="5.7" fill="#86827e"/><rect x="63.04" y="178.80" width="3.70" height="5.7" fill="#8e8e8e"/><rect x="70.25" y="178.80" width="3.70" height="5.7" fill="#6a6a6a"/><rect x="73.85" y="178.80" width="3.70" height="5.7" fill="#565656"/><rect x="81.06" y="178.80" width="3.70" height="5.7" fill="#86827e"/><rect x="84.66" y="178.80" width="3.70" height="5.7" fill="#8e8e8e"/><rect x="91.87" y="178.80" width="3.70" height="5.7" fill="#6a6a6a"/><rect x="95.48" y="178.80" width="3.70" height="5.7" fill="#767a80"/><rect x="102.68" y="178.80" width="3.70" height="5.7" fill="#565656"/><rect x="106.29" y="178.80" width="3.70" height="5.7" fill="#6a6a6a"/><rect x="117.10" y="178.80" width="3.70" height="5.7" fill="#646464"/><rect x="120.70" y="178.80" width="3.70" height="5.7" fill="#767a80"/><rect x="127.91" y="178.80" width="3.70" height="5.7" fill="#7c7c7c"/><rect x="131.52" y="178.80" width="3.70" height="5.7" fill="#8e8e8e"/><rect x="138.72" y="178.80" width="3.70" height="5.7" fill="#6a6a6a"/><rect x="142.33" y="178.80" width="3.70" height="5.7" fill="#8e8e8e"/><rect x="149.54" y="178.80" width="3.70" height="5.7" fill="#646464"/><rect x="153.14" y="178.80" width="3.70" height="5.7" fill="#7c7c7c"/><rect x="160.35" y="178.80" width="3.70" height="5.7" fill="#86827e"/><rect x="163.95" y="178.80" width="3.70" height="5.7" fill="#86827e"/><rect x="171.16" y="178.80" width="3.70" height="5.7" fill="#606060"/><rect x="174.76" y="178.80" width="3.70" height="5.7" fill="#7c7c7c"/><rect x="181.97" y="178.80" width="3.70" height="5.7" fill="#565656"/><rect x="185.58" y="178.80" width="3.70" height="5.7" fill="#4c4c4c"/><rect x="192.78" y="178.80" width="3.70" height="5.7" fill="#565656"/><rect x="196.39" y="178.80" width="3.70" height="5.7" fill="#5a5a5a"/><rect x="211.00" y="179.10" width="3.70" height="5.2" fill="#303030"/><rect x="214.60" y="179.10" width="3.70" height="5.2" fill="#363636"/><rect x="218.21" y="179.10" width="3.70" height="5.2" fill="#2d2d2d"/><rect x="221.81" y="179.10" width="3.70" height="5.2" fill="#2c2c2c"/><rect x="225.42" y="179.10" width="3.70" height="5.2" fill="#2d2d2d"/><rect x="229.02" y="179.10" width="3.70" height="5.2" fill="#363636"/><rect x="232.62" y="179.10" width="3.70" height="5.2" fill="#2c2c2c"/><rect x="236.23" y="179.10" width="3.70" height="5.2" fill="#2f2f2f"/><rect x="243.44" y="179.10" width="3.70" height="5.2" fill="#2c2c2c"/><rect x="247.04" y="179.10" width="3.70" height="5.2" fill="#363636"/><rect x="250.64" y="179.10" width="3.70" height="5.2" fill="#2d2d2d"/><rect x="254.25" y="179.10" width="3.70" height="5.2" fill="#2d2d2d"/><rect x="257.85" y="179.10" width="3.70" height="5.2" fill="#2d2d2d"/><rect x="261.46" y="179.10" width="3.70" height="5.2" fill="#2f2f2f"/><rect x="265.06" y="179.10" width="3.70" height="5.2" fill="#323232"/><rect x="268.66" y="179.10" width="3.70" height="5.2" fill="#2f2f2f"/><rect x="27.00" y="186.55" width="3.70" height="5.7" fill="#6a6a6a"/><rect x="30.60" y="186.55" width="3.70" height="5.7" fill="#646464"/><rect x="37.81" y="186.55" width="3.70" height="5.7" fill="#6a6a6a"/><rect x="41.42" y="186.55" width="3.70" height="5.7" fill="#6a6a6a"/><rect x="48.62" y="186.55" width="3.70" height="5.7" fill="#5a5a5a"/><rect x="52.23" y="186.55" width="3.70" height="5.7" fill="#8e8e8e"/><rect x="59.44" y="186.55" width="3.70" height="5.7" fill="#5a5a5a"/><rect x="63.04" y="186.55" width="3.70" height="5.7" fill="#86827e"/><rect x="70.25" y="186.55" width="3.70" height="5.7" fill="#686868"/><rect x="73.85" y="186.55" width="3.70" height="5.7" fill="#606060"/><rect x="81.06" y="186.55" width="3.70" height="5.7" fill="#686868"/><rect x="84.66" y="186.55" width="3.70" height="5.7" fill="#606060"/><rect x="91.87" y="186.55" width="3.70" height="5.7" fill="#7c7c7c"/><rect x="95.48" y="186.55" width="3.70" height="5.7" fill="#565656"/><rect x="102.68" y="186.55" width="3.70" height="5.7" fill="#6a6a6a"/><rect x="106.29" y="186.55" width="3.70" height="5.7" fill="#8e8e8e"/><rect x="117.10" y="186.55" width="3.70" height="5.7" fill="#5a5a5a"/><rect x="120.70" y="186.55" width="3.70" height="5.7" fill="#4c4c4c"/><rect x="127.91" y="186.55" width="3.70" height="5.7" fill="#4c4c4c"/><rect x="131.52" y="186.55" width="3.70" height="5.7" fill="#646464"/><rect x="138.72" y="186.55" width="3.70" height="5.7" fill="#86827e"/><rect x="142.33" y="186.55" width="3.70" height="5.7" fill="#606060"/><rect x="149.54" y="186.55" width="3.70" height="5.7" fill="#565656"/><rect x="153.14" y="186.55" width="3.70" height="5.7" fill="#767a80"/><rect x="160.35" y="186.55" width="3.70" height="5.7" fill="#7c7c7c"/><rect x="163.95" y="186.55" width="3.70" height="5.7" fill="#8e8e8e"/><rect x="171.16" y="186.55" width="3.70" height="5.7" fill="#5a5a5a"/><rect x="174.76" y="186.55" width="3.70" height="5.7" fill="#606060"/><rect x="181.97" y="186.55" width="3.70" height="5.7" fill="#606060"/><rect x="185.58" y="186.55" width="3.70" height="5.7" fill="#606060"/><rect x="192.78" y="186.55" width="3.70" height="5.7" fill="#606060"/><rect x="196.39" y="186.55" width="3.70" height="5.7" fill="#8e8e8e"/><rect x="211.00" y="186.85" width="3.70" height="5.2" fill="#2f2f2f"/><rect x="214.60" y="186.85" width="3.70" height="5.2" fill="#2c2c2c"/><rect x="218.21" y="186.85" width="3.70" height="5.2" fill="#2c2c2c"/><rect x="221.81" y="186.85" width="3.70" height="5.2" fill="#323232"/><rect x="225.42" y="186.85" width="3.70" height="5.2" fill="#2c2c2c"/><rect x="229.02" y="186.85" width="3.70" height="5.2" fill="#323232"/><rect x="232.62" y="186.85" width="3.70" height="5.2" fill="#323232"/><rect x="236.23" y="186.85" width="3.70" height="5.2" fill="#363636"/><rect x="243.44" y="186.85" width="3.70" height="5.2" fill="#303030"/><rect x="247.04" y="186.85" width="3.70" height="5.2" fill="#303030"/><rect x="250.64" y="186.85" width="3.70" height="5.2" fill="#363636"/><rect x="254.25" y="186.85" width="3.70" height="5.2" fill="#2f2f2f"/><rect x="257.85" y="186.85" width="3.70" height="5.2" fill="#2c2c2c"/><rect x="261.46" y="186.85" width="3.70" height="5.2" fill="#2c2c2c"/><rect x="265.06" y="186.85" width="3.70" height="5.2" fill="#363636"/><rect x="268.66" y="186.85" width="3.70" height="5.2" fill="#2c2c2c"/><rect x="27.00" y="194.30" width="3.70" height="5.7" fill="#686868"/><rect x="30.60" y="194.30" width="3.70" height="5.7" fill="#767a80"/><rect x="37.81" y="194.30" width="3.70" height="5.7" fill="#7c7c7c"/><rect x="41.42" y="194.30" width="3.70" height="5.7" fill="#565656"/><rect x="48.62" y="194.30" width="3.70" height="5.7" fill="#606060"/><rect x="52.23" y="194.30" width="3.70" height="5.7" fill="#606060"/><rect x="59.44" y="194.30" width="3.70" height="5.7" fill="#606060"/><rect x="63.04" y="194.30" width="3.70" height="5.7" fill="#646464"/><rect x="70.25" y="194.30" width="3.70" height="5.7" fill="#606060"/><rect x="73.85" y="194.30" width="3.70" height="5.7" fill="#4c4c4c"/><rect x="81.06" y="194.30" width="3.70" height="5.7" fill="#565656"/><rect x="84.66" y="194.30" width="3.70" height="5.7" fill="#7c7c7c"/><rect x="91.87" y="194.30" width="3.70" height="5.7" fill="#565656"/><rect x="95.48" y="194.30" width="3.70" height="5.7" fill="#606060"/><rect x="102.68" y="194.30" width="3.70" height="5.7" fill="#727272"/><rect x="106.29" y="194.30" width="3.70" height="5.7" fill="#606060"/><rect x="117.10" y="194.30" width="3.70" height="5.7" fill="#8e8e8e"/><rect x="120.70" y="194.30" width="3.70" height="5.7" fill="#646464"/><rect x="127.91" y="194.30" width="3.70" height="5.7" fill="#5a5a5a"/><rect x="131.52" y="194.30" width="3.70" height="5.7" fill="#7c7c7c"/><rect x="138.72" y="194.30" width="3.70" height="5.7" fill="#565656"/><rect x="142.33" y="194.30" width="3.70" height="5.7" fill="#4c4c4c"/><rect x="149.54" y="194.30" width="3.70" height="5.7" fill="#7c7c7c"/><rect x="153.14" y="194.30" width="3.70" height="5.7" fill="#646464"/><rect x="160.35" y="194.30" width="3.70" height="5.7" fill="#8e8e8e"/><rect x="163.95" y="194.30" width="3.70" height="5.7" fill="#5a5a5a"/><rect x="171.16" y="194.30" width="3.70" height="5.7" fill="#646464"/><rect x="174.76" y="194.30" width="3.70" height="5.7" fill="#5a5a5a"/><rect x="181.97" y="194.30" width="3.70" height="5.7" fill="#5a5a5a"/><rect x="185.58" y="194.30" width="3.70" height="5.7" fill="#4c4c4c"/><rect x="192.78" y="194.30" width="3.70" height="5.7" fill="#8e8e8e"/><rect x="196.39" y="194.30" width="3.70" height="5.7" fill="#565656"/><rect x="211.00" y="194.60" width="3.70" height="5.2" fill="#2f2f2f"/><rect x="214.60" y="194.60" width="3.70" height="5.2" fill="#2f2f2f"/><rect x="218.21" y="194.60" width="3.70" height="5.2" fill="#303030"/><rect x="221.81" y="194.60" width="3.70" height="5.2" fill="#303030"/><rect x="225.42" y="194.60" width="3.70" height="5.2" fill="#363636"/><rect x="229.02" y="194.60" width="3.70" height="5.2" fill="#303030"/><rect x="232.62" y="194.60" width="3.70" height="5.2" fill="#2f2f2f"/><rect x="236.23" y="194.60" width="3.70" height="5.2" fill="#363636"/><rect x="243.44" y="194.60" width="3.70" height="5.2" fill="#2f2f2f"/><rect x="247.04" y="194.60" width="3.70" height="5.2" fill="#303030"/><rect x="250.64" y="194.60" width="3.70" height="5.2" fill="#2d2d2d"/><rect x="254.25" y="194.60" width="3.70" height="5.2" fill="#303030"/><rect x="257.85" y="194.60" width="3.70" height="5.2" fill="#2d2d2d"/><rect x="261.46" y="194.60" width="3.70" height="5.2" fill="#2d2d2d"/><rect x="265.06" y="194.60" width="3.70" height="5.2" fill="#303030"/><rect x="268.66" y="194.60" width="3.70" height="5.2" fill="#2c2c2c"/><rect x="27.00" y="202.05" width="3.70" height="5.7" fill="#6a6a6a"/><rect x="30.60" y="202.05" width="3.70" height="5.7" fill="#6a6a6a"/><rect x="37.81" y="202.05" width="3.70" height="5.7" fill="#5a5a5a"/><rect x="41.42" y="202.05" width="3.70" height="5.7" fill="#7c7c7c"/><rect x="48.62" y="202.05" width="3.70" height="5.7" fill="#727272"/><rect x="52.23" y="202.05" width="3.70" height="5.7" fill="#646464"/><rect x="59.44" y="202.05" width="3.70" height="5.7" fill="#606060"/><rect x="63.04" y="202.05" width="3.70" height="5.7" fill="#565656"/><rect x="70.25" y="202.05" width="3.70" height="5.7" fill="#6a6a6a"/><rect x="73.85" y="202.05" width="3.70" height="5.7" fill="#7c7c7c"/><rect x="81.06" y="202.05" width="3.70" height="5.7" fill="#686868"/><rect x="84.66" y="202.05" width="3.70" height="5.7" fill="#7c7c7c"/><rect x="91.87" y="202.05" width="3.70" height="5.7" fill="#565656"/><rect x="95.48" y="202.05" width="3.70" height="5.7" fill="#686868"/><rect x="102.68" y="202.05" width="3.70" height="5.7" fill="#86827e"/><rect x="106.29" y="202.05" width="3.70" height="5.7" fill="#7c7c7c"/><rect x="117.10" y="202.05" width="3.70" height="5.7" fill="#4c4c4c"/><rect x="120.70" y="202.05" width="3.70" height="5.7" fill="#86827e"/><rect x="127.91" y="202.05" width="3.70" height="5.7" fill="#8e8e8e"/><rect x="131.52" y="202.05" width="3.70" height="5.7" fill="#7c7c7c"/><rect x="138.72" y="202.05" width="3.70" height="5.7" fill="#4c4c4c"/><rect x="142.33" y="202.05" width="3.70" height="5.7" fill="#5a5a5a"/><rect x="149.54" y="202.05" width="3.70" height="5.7" fill="#686868"/><rect x="153.14" y="202.05" width="3.70" height="5.7" fill="#5a5a5a"/><rect x="160.35" y="202.05" width="3.70" height="5.7" fill="#646464"/><rect x="163.95" y="202.05" width="3.70" height="5.7" fill="#767a80"/><rect x="171.16" y="202.05" width="3.70" height="5.7" fill="#767a80"/><rect x="174.76" y="202.05" width="3.70" height="5.7" fill="#646464"/><rect x="181.97" y="202.05" width="3.70" height="5.7" fill="#686868"/><rect x="185.58" y="202.05" width="3.70" height="5.7" fill="#606060"/><rect x="192.78" y="202.05" width="3.70" height="5.7" fill="#606060"/><rect x="196.39" y="202.05" width="3.70" height="5.7" fill="#4c4c4c"/><rect x="211.00" y="202.35" width="3.70" height="5.2" fill="#323232"/><rect x="214.60" y="202.35" width="3.70" height="5.2" fill="#2d2d2d"/><rect x="218.21" y="202.35" width="3.70" height="5.2" fill="#363636"/><rect x="221.81" y="202.35" width="3.70" height="5.2" fill="#2f2f2f"/><rect x="225.42" y="202.35" width="3.70" height="5.2" fill="#323232"/><rect x="229.02" y="202.35" width="3.70" height="5.2" fill="#2f2f2f"/><rect x="232.62" y="202.35" width="3.70" height="5.2" fill="#2c2c2c"/><rect x="236.23" y="202.35" width="3.70" height="5.2" fill="#2d2d2d"/><rect x="243.44" y="202.35" width="3.70" height="5.2" fill="#303030"/><rect x="247.04" y="202.35" width="3.70" height="5.2" fill="#6a6a6a"/><rect x="250.64" y="202.35" width="3.70" height="5.2" fill="#303030"/><rect x="254.25" y="202.35" width="3.70" height="5.2" fill="#303030"/><rect x="257.85" y="202.35" width="3.70" height="5.2" fill="#2f2f2f"/><rect x="261.46" y="202.35" width="3.70" height="5.2" fill="#2c2c2c"/><rect x="265.06" y="202.35" width="3.70" height="5.2" fill="#323232"/><rect x="268.66" y="202.35" width="3.70" height="5.2" fill="#2c2c2c"/><rect x="27.00" y="209.80" width="3.70" height="5.7" fill="#5a5a5a"/><rect x="30.60" y="209.80" width="3.70" height="5.7" fill="#727272"/><rect x="37.81" y="209.80" width="3.70" height="5.7" fill="#686868"/><rect x="41.42" y="209.80" width="3.70" height="5.7" fill="#4c4c4c"/><rect x="48.62" y="209.80" width="3.70" height="5.7" fill="#727272"/><rect x="52.23" y="209.80" width="3.70" height="5.7" fill="#7c7c7c"/><rect x="59.44" y="209.80" width="3.70" height="5.7" fill="#7c7c7c"/><rect x="63.04" y="209.80" width="3.70" height="5.7" fill="#7c7c7c"/><rect x="70.25" y="209.80" width="3.70" height="5.7" fill="#727272"/><rect x="73.85" y="209.80" width="3.70" height="5.7" fill="#606060"/><rect x="81.06" y="209.80" width="3.70" height="5.7" fill="#606060"/><rect x="84.66" y="209.80" width="3.70" height="5.7" fill="#5a5a5a"/><rect x="91.87" y="209.80" width="3.70" height="5.7" fill="#727272"/><rect x="95.48" y="209.80" width="3.70" height="5.7" fill="#5a5a5a"/><rect x="102.68" y="209.80" width="3.70" height="5.7" fill="#5a5a5a"/><rect x="106.29" y="209.80" width="3.70" height="5.7" fill="#6a6a6a"/><rect x="117.10" y="209.80" width="3.70" height="5.7" fill="#767a80"/><rect x="120.70" y="209.80" width="3.70" height="5.7" fill="#727272"/><rect x="127.91" y="209.80" width="3.70" height="5.7" fill="#565656"/><rect x="131.52" y="209.80" width="3.70" height="5.7" fill="#727272"/><rect x="138.72" y="209.80" width="3.70" height="5.7" fill="#5a5a5a"/><rect x="142.33" y="209.80" width="3.70" height="5.7" fill="#7c7c7c"/><rect x="149.54" y="209.80" width="3.70" height="5.7" fill="#6a6a6a"/><rect x="153.14" y="209.80" width="3.70" height="5.7" fill="#86827e"/><rect x="160.35" y="209.80" width="3.70" height="5.7" fill="#86827e"/><rect x="163.95" y="209.80" width="3.70" height="5.7" fill="#4c4c4c"/><rect x="171.16" y="209.80" width="3.70" height="5.7" fill="#6a6a6a"/><rect x="174.76" y="209.80" width="3.70" height="5.7" fill="#606060"/><rect x="181.97" y="209.80" width="3.70" height="5.7" fill="#86827e"/><rect x="185.58" y="209.80" width="3.70" height="5.7" fill="#6a6a6a"/><rect x="192.78" y="209.80" width="3.70" height="5.7" fill="#6a6a6a"/><rect x="196.39" y="209.80" width="3.70" height="5.7" fill="#606060"/><rect x="211.00" y="210.10" width="3.70" height="5.2" fill="#2d2d2d"/><rect x="214.60" y="210.10" width="3.70" height="5.2" fill="#2c2c2c"/><rect x="218.21" y="210.10" width="3.70" height="5.2" fill="#2d2d2d"/><rect x="221.81" y="210.10" width="3.70" height="5.2" fill="#2f2f2f"/><rect x="225.42" y="210.10" width="3.70" height="5.2" fill="#2f2f2f"/><rect x="229.02" y="210.10" width="3.70" height="5.2" fill="#2f2f2f"/><rect x="232.62" y="210.10" width="3.70" height="5.2" fill="#303030"/><rect x="236.23" y="210.10" width="3.70" height="5.2" fill="#2c2c2c"/><rect x="243.44" y="210.10" width="3.70" height="5.2" fill="#2f2f2f"/><rect x="247.04" y="210.10" width="3.70" height="5.2" fill="#2d2d2d"/><rect x="250.64" y="210.10" width="3.70" height="5.2" fill="#2f2f2f"/><rect x="254.25" y="210.10" width="3.70" height="5.2" fill="#2d2d2d"/><rect x="257.85" y="210.10" width="3.70" height="5.2" fill="#2f2f2f"/><rect x="261.46" y="210.10" width="3.70" height="5.2" fill="#7a7670"/><rect x="265.06" y="210.10" width="3.70" height="5.2" fill="#303030"/><rect x="268.66" y="210.10" width="3.70" height="5.2" fill="#323232"/><rect x="27.00" y="217.55" width="3.70" height="5.7" fill="#767a80"/><rect x="30.60" y="217.55" width="3.70" height="5.7" fill="#8e8e8e"/><rect x="37.81" y="217.55" width="3.70" height="5.7" fill="#86827e"/><rect x="41.42" y="217.55" width="3.70" height="5.7" fill="#646464"/><rect x="48.62" y="217.55" width="3.70" height="5.7" fill="#6a6a6a"/><rect x="52.23" y="217.55" width="3.70" height="5.7" fill="#8e8e8e"/><rect x="59.44" y="217.55" width="3.70" height="5.7" fill="#565656"/><rect x="63.04" y="217.55" width="3.70" height="5.7" fill="#6a6a6a"/><rect x="70.25" y="217.55" width="3.70" height="5.7" fill="#7c7c7c"/><rect x="73.85" y="217.55" width="3.70" height="5.7" fill="#686868"/><rect x="81.06" y="217.55" width="3.70" height="5.7" fill="#7c7c7c"/><rect x="84.66" y="217.55" width="3.70" height="5.7" fill="#767a80"/><rect x="91.87" y="217.55" width="3.70" height="5.7" fill="#565656"/><rect x="95.48" y="217.55" width="3.70" height="5.7" fill="#727272"/><rect x="102.68" y="217.55" width="3.70" height="5.7" fill="#5a5a5a"/><rect x="106.29" y="217.55" width="3.70" height="5.7" fill="#727272"/><rect x="117.10" y="217.55" width="3.70" height="5.7" fill="#767a80"/><rect x="120.70" y="217.55" width="3.70" height="5.7" fill="#686868"/><rect x="127.91" y="217.55" width="3.70" height="5.7" fill="#646464"/><rect x="131.52" y="217.55" width="3.70" height="5.7" fill="#727272"/><rect x="138.72" y="217.55" width="3.70" height="5.7" fill="#5a5a5a"/><rect x="142.33" y="217.55" width="3.70" height="5.7" fill="#86827e"/><rect x="149.54" y="217.55" width="3.70" height="5.7" fill="#86827e"/><rect x="153.14" y="217.55" width="3.70" height="5.7" fill="#727272"/><rect x="160.35" y="217.55" width="3.70" height="5.7" fill="#4c4c4c"/><rect x="163.95" y="217.55" width="3.70" height="5.7" fill="#4c4c4c"/><rect x="171.16" y="217.55" width="3.70" height="5.7" fill="#686868"/><rect x="174.76" y="217.55" width="3.70" height="5.7" fill="#727272"/><rect x="181.97" y="217.55" width="3.70" height="5.7" fill="#4c4c4c"/><rect x="185.58" y="217.55" width="3.70" height="5.7" fill="#5a5a5a"/><rect x="192.78" y="217.55" width="3.70" height="5.7" fill="#606060"/><rect x="196.39" y="217.55" width="3.70" height="5.7" fill="#86827e"/><rect x="211.00" y="217.85" width="3.70" height="5.2" fill="#2d2d2d"/><rect x="214.60" y="217.85" width="3.70" height="5.2" fill="#2c2c2c"/><rect x="218.21" y="217.85" width="3.70" height="5.2" fill="#363636"/><rect x="221.81" y="217.85" width="3.70" height="5.2" fill="#303030"/><rect x="225.42" y="217.85" width="3.70" height="5.2" fill="#363636"/><rect x="229.02" y="217.85" width="3.70" height="5.2" fill="#2c2c2c"/><rect x="232.62" y="217.85" width="3.70" height="5.2" fill="#2c2c2c"/><rect x="236.23" y="217.85" width="3.70" height="5.2" fill="#2d2d2d"/><rect x="243.44" y="217.85" width="3.70" height="5.2" fill="#2c2c2c"/><rect x="247.04" y="217.85" width="3.70" height="5.2" fill="#363636"/><rect x="250.64" y="217.85" width="3.70" height="5.2" fill="#303030"/><rect x="254.25" y="217.85" width="3.70" height="5.2" fill="#363636"/><rect x="257.85" y="217.85" width="3.70" height="5.2" fill="#2d2d2d"/><rect x="261.46" y="217.85" width="3.70" height="5.2" fill="#323232"/><rect x="265.06" y="217.85" width="3.70" height="5.2" fill="#303030"/><rect x="268.66" y="217.85" width="3.70" height="5.2" fill="#323232"/></g></svg>
<svg style="left:986px;top:300px" width="7" height="230"><rect x="0.40" y="0.00" width="6.40" height="230.00" fill="#3d3d3d"/></svg>
<svg style="left:986px;top:481px" width="7" height="41"><rect x="0.40" y="0.60" width="6.40" height="40.00" fill="#4c4c4c"/></svg>
<svg style="left:987.2px;top:524.5px" width="5" height="4" viewBox="0 0 5 4"><path d="M0.5 0.6 H4.5 L2.5 3.4 Z" fill="#e6e6e6"/></svg>
<svg style="left:993px;top:362px" width="2" height="170"><rect x="0.20" y="0.00" width="1.70" height="169.60" fill="#f2f2f2"/></svg>
<svg style="left:993px;top:531px" width="2" height="18"><rect x="0.40" y="0.60" width="1.40" height="17.40" fill="#171b28"/></svg>
<svg style="left:499px;top:531px" width="58" height="12"><rect x="0.00" y="0.40" width="57.70" height="11.60" fill="#3d3d3d"/></svg>
<span class="s" style="left:504.20px;top:535px;font-size:6.6px;color:#f2f2f2;letter-spacing:-0.342px;">Frame (374 bytes)</span>
<svg style="left:559px;top:531px" width="94" height="12"><rect x="0.00" y="0.40" width="94.00" height="11.60" fill="#3d3d3d"/></svg>
<span class="s" style="left:564.50px;top:535px;font-size:6.6px;color:#f2f2f2;letter-spacing:-0.376px;">Reassembled IPv4 (1820 bytes)</span>
<svg style="left:654px;top:531px" width="88" height="12"><rect x="0.80" y="0.40" width="86.80" height="11.60" fill="#444"/></svg>
<span class="s" style="left:660.00px;top:535px;font-size:6.6px;color:#f2f2f2;letter-spacing:-0.310px;">Decrypted Data (1744 bytes)</span>
<div style="left:661.00px;top:547.80px;width:101.00px;height:1.20px;background:#1c1c1c;background:repeating-linear-gradient(90deg,#8a8a8a 0 1.2px,#1c1c1c 1.2px 3.1px,#6a6a6a 3.1px 4px,#1c1c1c 4px 6.3px);opacity:.5;"></div>
<div style="left:953.00px;top:547.80px;width:37.00px;height:1.20px;background:#1c1c1c;background:repeating-linear-gradient(90deg,#8a8a8a 0 1.2px,#1c1c1c 1.2px 3.1px,#6a6a6a 3.1px 4px,#1c1c1c 4px 6.3px);opacity:.5;"></div>
<div style="left:31.50px;top:547.60px;width:124.00px;height:1.40px;background:#1c1c1c;background:repeating-linear-gradient(90deg,#8a8a8a 0 1.2px,#1c1c1c 1.2px 3.1px,#6a6a6a 3.1px 4px,#1c1c1c 4px 6.3px);opacity:.55;"></div>
<svg style="left:6px;top:546px" width="20" height="4" viewBox="0 0 20 4"><circle cx="3.2" cy="3.6" r="2.6" fill="#d8c23a"/><rect x="12" y="0.8" width="5" height="4" fill="#6f9be0"/></svg>
<div style="left:493.9px;top:21.4px;width:501.1px;height:341.6px;background:#fff;border-radius:3px 0 0 3px;overflow:hidden;box-shadow:0 0 3px rgba(0,0,0,.6)">
</div>
<div style="left:493.90px;top:21.40px;width:501.10px;height:15.40px;background:#f2f2f2;border-radius:3px 0 0 0;"></div>
<svg style="left:493px;top:36px" width="502" height="11"><rect x="0.90" y="0.60" width="501.10" height="9.90" fill="#ffffff"/></svg>
<svg style="left:493px;top:46px" width="502" height="15"><rect x="0.90" y="0.30" width="501.10" height="14.30" fill="#fdfdfd"/></svg>
<svg style="left:493px;top:46px" width="502" height="1"><rect x="0.90" y="0.10" width="501.10" height="0.50" fill="#f0f0f0"/></svg>
<svg style="left:493px;top:60px" width="502" height="14"><rect x="0.90" y="0.40" width="501.10" height="13.00" fill="#f0f0f0"/></svg>
<svg style="left:493px;top:73px" width="502" height="2"><rect x="0.90" y="0.20" width="501.10" height="1.00" fill="#a0a0a0"/></svg>
<svg style="left:498px;top:24.4px" width="9" height="8.6" viewBox="0 0 9 8.6"><rect x="0.4" y="1.2" width="7" height="7" fill="#e8f0d8" stroke="#5b6a4a" stroke-width="0.7"/><path d="M1.6 5 L3.4 7 L6.8 2.4" stroke="#7fb62c" stroke-width="1.3" fill="none"/><path d="M6.2 2.6 L8.4 0.4" stroke="#c8452a" stroke-width="1.1"/></svg>
<span class="s" style="left:509.50px;top:27px;font-size:6.5px;color:#8e8e8e;letter-spacing:-0.083px;">C:\Users\icharitopoulo\Downloads\debug_output.txt - Notepad++</span>
<span class="s" style="left:498.00px;top:39px;font-size:6.5px;color:#6c6c6c;letter-spacing:-0.219px;">File</span>
<span class="s" style="left:514.00px;top:39px;font-size:6.5px;color:#6c6c6c;letter-spacing:-0.175px;">Edit</span>
<span class="s" style="left:531.90px;top:39px;font-size:6.5px;color:#6c6c6c;letter-spacing:-0.416px;">Search</span>
<span class="s" style="left:557.00px;top:39px;font-size:6.5px;color:#6c6c6c;letter-spacing:-0.243px;">View</span>
<span class="s" style="left:577.20px;top:39px;font-size:6.5px;color:#6c6c6c;letter-spacing:-0.163px;">Encoding</span>
<span class="s" style="left:610.20px;top:39px;font-size:6.5px;color:#6c6c6c;letter-spacing:-0.203px;">Language</span>
<span class="s" style="left:644.30px;top:39px;font-size:6.5px;color:#6c6c6c;letter-spacing:-0.198px;">Settings</span>
<span class="s" style="left:673.50px;top:39px;font-size:6.5px;color:#6c6c6c;letter-spacing:-0.135px;">Tools</span>
<span class="s" style="left:695.00px;top:39px;font-size:6.5px;color:#6c6c6c;letter-spacing:-0.112px;">Macro</span>
<span class="s" style="left:719.80px;top:39px;font-size:6.5px;color:#6c6c6c;letter-spacing:-0.575px;">Run</span>
<span class="s" style="left:737.30px;top:39px;font-size:6.5px;color:#6c6c6c;letter-spacing:-0.088px;">Plugins</span>
<span class="s" style="left:765.10px;top:39px;font-size:6.5px;color:#6c6c6c;letter-spacing:-0.036px;">Window</span>
<span class="s" style="left:795.70px;top:39px;font-size:6.5px;color:#6c6c6c;letter-spacing:-0.815px;">?</span>
<svg style="left:497.20px;top:48.45px" width="8.20" height="9.5" viewBox="0 0 8.20 9.5"><path d="M0.6 0.5 H5.2 L7.2 2.6 V9 H0.6 Z" fill="#fdfdfd" stroke="#bdbdbd" stroke-width="0.6"/><circle cx="6.2" cy="7.6" r="1.7" fill="#58a848"/><circle cx="6.2" cy="7.6" r="0.7" fill="#e8f6e0"/></svg>
<svg style="left:508.00px;top:48.45px" width="9.40" height="9.5" viewBox="0 0 9.40 9.5"><rect x="3.2" y="0.6" width="5.6" height="6" fill="#9cc0ea" stroke="#6f9ad2" stroke-width="0.5"/><path d="M0.4 3.6 H3.6 L4.4 4.6 H8.4 V9 H0.4 Z" fill="#f2c45a" stroke="#d9a233" stroke-width="0.5"/><rect x="0.8" y="5.6" width="7.2" height="1" fill="#f8dc90"/></svg>
<svg style="left:520.20px;top:48.45px" width="9.00" height="9.5" viewBox="0 0 9.00 9.5"><rect x="0.5" y="0.6" width="8" height="8.3" rx="0.6" fill="#8e8e8e"/><rect x="2" y="0.6" width="5" height="3.4" fill="#f4f4f4"/><rect x="2.2" y="5.6" width="4.6" height="3.3" fill="#747474"/><rect x="3" y="7.2" width="2.4" height="0.8" fill="#d8d8d8"/></svg>
<svg style="left:532.60px;top:48.45px" width="8.80" height="9.5" viewBox="0 0 8.80 9.5"><rect x="0.4" y="0.5" width="5.6" height="6" fill="#5f8fdc" stroke="#3c68bc" stroke-width="0.5"/><rect x="2.6" y="2.8" width="5.8" height="6.2" fill="#4a7ed4" stroke="#3462b4" stroke-width="0.5"/><rect x="4" y="2.8" width="3" height="2" fill="#dce8f8"/><rect x="4" y="6.6" width="3" height="1.6" fill="#8ed06a"/></svg>
<svg style="left:544.40px;top:48.45px" width="8.80" height="9.5" viewBox="0 0 8.80 9.5"><path d="M0.8 0.8 H5 L6.8 2.8 V8.4 H0.8 Z" fill="#f6f6f6" stroke="#c4c4c4" stroke-width="0.6"/><circle cx="6.3" cy="7.2" r="1.9" fill="#e4702a"/><circle cx="6.3" cy="7.2" r="0.7" fill="#fbe2c8"/></svg>
<svg style="left:555.80px;top:48.45px" width="9.40" height="9.5" viewBox="0 0 9.40 9.5"><path d="M0.6 0.5 H4.6 L6 2 V6.6 H0.6 Z" fill="#f2f2f2" stroke="#c8c8c8" stroke-width="0.5"/><path d="M2.4 1.8 H6.2 L7.6 3.4 V8 H2.4 Z" fill="#f8f8f8" stroke="#c4c4c4" stroke-width="0.5"/><circle cx="7" cy="7.4" r="1.9" fill="#e4702a"/><circle cx="7" cy="7.4" r="0.7" fill="#fbe2c8"/></svg>
<svg style="left:567.60px;top:48.45px" width="9.20" height="9.5" viewBox="0 0 9.20 9.5"><rect x="2" y="0.5" width="5.2" height="3" fill="#7fa8e0"/><rect x="0.5" y="3" width="8.2" height="4.4" rx="0.8" fill="#8e9aa8"/><rect x="1.8" y="5.6" width="5.6" height="3.2" fill="#f0f0f0" stroke="#9a9a9a" stroke-width="0.4"/><rect x="0.5" y="3" width="8.2" height="1.2" fill="#b8c6da"/></svg>
<svg style="left:579px;top:48px" width="2" height="11"><rect x="0.50" y="0.50" width="0.70" height="9.60" fill="#a8a8a8"/></svg>
<svg style="left:584.00px;top:48.45px" width="8.00" height="9.5" viewBox="0 0 8.00 9.5"><path d="M5.6 0.6 L3 6 M2.2 0.8 L5.2 6" stroke="#6a6a6a" stroke-width="0.9"/><circle cx="2.2" cy="7.4" r="1.3" fill="none" stroke="#5a5a5a" stroke-width="0.8"/><circle cx="5.8" cy="7.4" r="1.3" fill="none" stroke="#5a5a5a" stroke-width="0.8"/></svg>
<svg style="left:595.00px;top:48.45px" width="9.00" height="9.5" viewBox="0 0 9.00 9.5"><rect x="0.6" y="0.6" width="4.8" height="6" fill="#b4b4b4" stroke="#8e8e8e" stroke-width="0.5"/><rect x="3.4" y="2.8" width="4.8" height="6" fill="#c2c2c2" stroke="#8e8e8e" stroke-width="0.5"/><path d="M4.2 4.4 H7.4 M4.2 5.8 H7.4 M4.2 7.2 H7.4" stroke="#8a8a8a" stroke-width="0.5"/></svg>
<svg style="left:607.00px;top:48.45px" width="9.40" height="9.5" viewBox="0 0 9.40 9.5"><rect x="0.6" y="1" width="6.4" height="8" rx="0.8" fill="#d0a050" stroke="#a87c30" stroke-width="0.5"/><rect x="2.4" y="0.3" width="2.8" height="1.6" fill="#8a8a8a"/><rect x="4" y="3.2" width="5" height="6" fill="#dbe8fb" stroke="#6f98dc" stroke-width="0.6"/></svg>
<svg style="left:619px;top:48px" width="2" height="11"><rect x="0.60" y="0.50" width="0.70" height="9.60" fill="#a8a8a8"/></svg>
<svg style="left:623.60px;top:48.45px" width="10.40" height="9.5" viewBox="0 0 10.40 9.5"><path d="M2.2 1.8 H6.6 Q9 1.8 9 4.6 Q9 7.4 6.6 7.4 H1.2" stroke="#6e6e6e" stroke-width="1.7" fill="none"/><path d="M3.6 5.2 L0.6 7.4 L3.6 9.4 Z" fill="#6e6e6e"/></svg>
<svg style="left:635.40px;top:48.45px" width="10.40" height="9.5" viewBox="0 0 10.40 9.5"><path d="M8.2 1.8 H3.8 Q1.4 1.8 1.4 4.6 Q1.4 7.4 3.8 7.4 H9.2" stroke="#9a9a9a" stroke-width="1.7" fill="none"/><path d="M6.8 5.2 L9.8 7.4 L6.8 9.4 Z" fill="#9a9a9a"/></svg>
<svg style="left:647px;top:48px" width="2" height="11"><rect x="0.50" y="0.50" width="0.70" height="9.60" fill="#a8a8a8"/></svg>
<svg style="left:651.40px;top:48.45px" width="9.00" height="9.5" viewBox="0 0 9.00 9.5"><rect x="0.6" y="3.4" width="3.4" height="5" rx="1.2" fill="#2e3a4a"/><rect x="5" y="3.4" width="3.4" height="5" rx="1.2" fill="#2e3a4a"/><rect x="1.4" y="1" width="2.2" height="3" fill="#3c4a5c"/><rect x="5.4" y="1" width="2.2" height="3" fill="#3c4a5c"/><rect x="3.6" y="3.8" width="1.8" height="2" fill="#2e3a4a"/></svg>
<svg style="left:663.00px;top:48.45px" width="10.00" height="9.5" viewBox="0 0 10.00 9.5"><path d="M1 4.4 L2.6 0.6 L4.2 4.4 M1.6 3.2 H3.6" stroke="#2f6fd0" stroke-width="0.9" fill="none"/><path d="M4.6 2.4 Q7 2.4 7 4.6" stroke="#2f6fd0" stroke-width="0.8" fill="none"/><rect x="5.2" y="5" width="3.6" height="4" fill="none" stroke="#2f6fd0" stroke-width="0.9"/><path d="M5.2 7 H8.8" stroke="#2f6fd0" stroke-width="0.7"/></svg>
<svg style="left:675px;top:48px" width="2" height="11"><rect x="0.60" y="0.50" width="0.70" height="9.60" fill="#a8a8a8"/></svg>
<svg style="left:680.00px;top:48.45px" width="9.40" height="9.5" viewBox="0 0 9.40 9.5"><circle cx="3.4" cy="3.4" r="2.9" fill="#cfe2f8" stroke="#9cbce4" stroke-width="0.6"/><path d="M5.4 5.6 L8.4 8.8" stroke="#b08850" stroke-width="1.4"/><path d="M5.6 1.2 V5.6 M3.4 3.4 H7.8" stroke="#3e9a3a" stroke-width="1.3"/></svg>
<svg style="left:691.80px;top:48.45px" width="9.20" height="9.5" viewBox="0 0 9.20 9.5"><circle cx="3.4" cy="3.4" r="2.9" fill="#cfe2f8" stroke="#9cbce4" stroke-width="0.6"/><path d="M5.4 5.6 L8.4 8.8" stroke="#b08850" stroke-width="1.4"/><path d="M3.6 3.6 H8.2" stroke="#d83a3a" stroke-width="1.4"/></svg>
<svg style="left:703px;top:48px" width="1" height="11"><rect x="0.20" y="0.50" width="0.70" height="9.60" fill="#a8a8a8"/></svg>
<svg style="left:707.40px;top:48.45px" width="9.60" height="9.5" viewBox="0 0 9.60 9.5"><rect x="0.5" y="0.8" width="6.4" height="6.2" fill="#f4f4f4" stroke="#8e8e8e" stroke-width="0.6"/><rect x="0.5" y="0.8" width="6.4" height="1.4" fill="#8e8e8e"/><rect x="4.6" y="4.2" width="4.4" height="4.8" fill="#e2e2e2" stroke="#7c7c7c" stroke-width="0.6"/><rect x="5.4" y="6.8" width="2.8" height="1.6" fill="#7a7a7a"/></svg>
<svg style="left:718.60px;top:48.45px" width="9.60" height="9.5" viewBox="0 0 9.60 9.5"><rect x="0.5" y="0.8" width="6.4" height="6.2" fill="#f4f4f4" stroke="#8e8e8e" stroke-width="0.6"/><rect x="0.5" y="0.8" width="6.4" height="1.4" fill="#8e8e8e"/><rect x="4.6" y="4.2" width="4.4" height="4.8" fill="#e2e2e2" stroke="#7c7c7c" stroke-width="0.6"/><rect x="5.4" y="4.8" width="2.8" height="1.6" fill="#7a7a7a"/></svg>
<svg style="left:730px;top:48px" width="2" height="11"><rect x="0.80" y="0.50" width="0.70" height="9.60" fill="#a8a8a8"/></svg>
<svg style="left:735.00px;top:48.45px" width="10.00" height="9.5" viewBox="0 0 10.00 9.5"><path d="M0.6 2 H6 M0.6 4 H4" stroke="#555" stroke-width="0.9"/><path d="M0.6 6.8 H8.2 Q9.4 6.8 9.4 5.6 V3.6 H6.6" stroke="#3a78d8" stroke-width="1" fill="none"/><path d="M2.4 5.4 L0.4 6.8 L2.4 8.2 Z" fill="#3a78d8"/></svg>
<span class="s" style="left:749.40px;top:49px;font-size:8px;color:#3a78d8;font-weight:bold;">¶</span>
<div style="left:757.80px;top:47.40px;width:11.40px;height:11.60px;background:#d6e6fb;border:0.6px solid #8ab4f0;box-sizing:border-box;border-radius:1px;"></div>
<svg style="left:759.40px;top:48.45px" width="8.60" height="9.5" viewBox="0 0 8.60 9.5"><path d="M3.4 0.6 V9 M1.2 1.6 H8 M1.2 4.8 H8 M1.2 8 H8" stroke="#2a2ad0" stroke-width="0.9"/><path d="M0.4 3.2 H3 M0.4 6.4 H3" stroke="#c828a8" stroke-width="1.2"/></svg>
<svg style="left:771.00px;top:48.45px" width="8.60" height="9.5" viewBox="0 0 8.60 9.5"><rect x="0.5" y="1.4" width="7.6" height="6.4" rx="0.8" fill="#f6dc8a" stroke="#7c9ccc" stroke-width="0.7"/><rect x="2" y="3" width="4.4" height="3" fill="#f2c040"/></svg>
<svg style="left:782.80px;top:48.45px" width="9.00" height="9.5" viewBox="0 0 9.00 9.5"><rect x="0.5" y="0.5" width="8" height="8.5" rx="0.6" fill="#c2c2a2" stroke="#6c6c5c" stroke-width="0.7"/><path d="M2.4 1.6 L4.6 5 L3.4 8 M4.6 5 L6.8 7" stroke="#e8a020" stroke-width="1" fill="none"/></svg>
<svg style="left:794.40px;top:48.45px" width="9.20" height="9.5" viewBox="0 0 9.20 9.5"><rect x="0.5" y="0.6" width="5.6" height="7" fill="#d4e2f6" stroke="#6f94cc" stroke-width="0.6"/><rect x="3.2" y="2.2" width="5.6" height="7" fill="#e6eefa" stroke="#6f94cc" stroke-width="0.6"/><path d="M4.2 4 H7.8 M4.2 5.6 H7.8 M4.2 7.2 H7.8" stroke="#8aa8d8" stroke-width="0.5"/></svg>
<svg style="left:806.80px;top:48.45px" width="8.80" height="9.5" viewBox="0 0 8.80 9.5"><path d="M0.6 0.5 H5.6 L8 2.8 V9 H0.6 Z" fill="#fafafa" stroke="#9a9a9a" stroke-width="0.6"/><path d="M5.4 1.6 Q3.8 1 3.6 3 L2.8 8 Q2.6 9.2 1.4 8.6 M2 4.4 H5" stroke="#d82020" stroke-width="1.1" fill="none"/></svg>
<svg style="left:818.60px;top:48.45px" width="9.00" height="9.5" viewBox="0 0 9.00 9.5"><path d="M0.5 2.4 H3.4 L4.2 3.4 H8.4 V8.6 H0.5 Z" fill="#f6d4d4" stroke="#e09090" stroke-width="0.6"/><rect x="1.6" y="4.8" width="5.8" height="2.4" fill="#eeb0b0"/></svg>
<svg style="left:829.80px;top:48.45px" width="9.60" height="9.5" viewBox="0 0 9.60 9.5"><path d="M0.4 4.8 Q4.8 0.6 9.2 4.8 Q4.8 9 0.4 4.8 Z" fill="#fdf6e4" stroke="#c89848" stroke-width="0.7"/><circle cx="4.8" cy="4.8" r="2" fill="#3a8ad8"/><circle cx="4.8" cy="4.8" r="0.8" fill="#14243c"/></svg>
<svg style="left:841px;top:48px" width="2" height="11"><rect x="0.60" y="0.50" width="0.70" height="9.60" fill="#a8a8a8"/></svg>
<svg style="left:846.80px;top:48.45px" width="7.60" height="9.5" viewBox="0 0 7.60 9.5"><rect x="0.5" y="1" width="6.60" height="7.6" rx="0.6" fill="#f0f0f0" stroke="#b4b4b4" stroke-width="0.6"/><circle cx="3.8" cy="4.8" r="1.9" fill="#d81818"/></svg>
<svg style="left:858.60px;top:48.45px" width="7.60" height="9.5" viewBox="0 0 7.60 9.5"><rect x="0.5" y="1" width="6.60" height="7.6" rx="0.6" fill="#f0f0f0" stroke="#b4b4b4" stroke-width="0.6"/><rect x="2.2" y="3.2" width="3.2" height="3.2" fill="#8a8a8a"/></svg>
<svg style="left:870.40px;top:48.45px" width="7.20" height="9.5" viewBox="0 0 7.20 9.5"><rect x="0.5" y="1" width="6.20" height="7.6" rx="0.6" fill="#f0f0f0" stroke="#b4b4b4" stroke-width="0.6"/><path d="M2.6 2.8 L5.2 4.8 L2.6 6.8 Z" fill="#6a6a6a"/></svg>
<svg style="left:882.00px;top:48.45px" width="8.40" height="9.5" viewBox="0 0 8.40 9.5"><rect x="0.5" y="1" width="7.4" height="7.6" rx="0.6" fill="#dfe8f8" stroke="#9ab4e0" stroke-width="0.6"/><path d="M1.6 2.6 L4.2 4.8 L1.6 7 Z M4.4 2.6 L7 4.8 L4.4 7 Z" fill="#2a5ad0"/></svg>
<svg style="left:893.80px;top:48.45px" width="9.20" height="9.5" viewBox="0 0 9.20 9.5"><rect x="0.5" y="0.8" width="6.6" height="6.2" fill="#9a9a9a" stroke="#6e6e6e" stroke-width="0.6"/><rect x="3.6" y="4" width="5.2" height="5" fill="#7c7c7c" stroke="#5c5c5c" stroke-width="0.5"/><rect x="4.6" y="4.8" width="3.2" height="1.6" fill="#e4e4e4"/></svg>
<svg style="left:495px;top:62px" width="49" height="12"><rect x="0.90" y="0.00" width="47.50" height="11.20" fill="#c9c9c9"/></svg>
<svg style="left:543px;top:62px" width="2" height="12"><rect x="0.40" y="0.00" width="0.90" height="11.20" fill="#8a8a8a"/></svg>
<svg style="left:496.20px;top:63.80px" width="7.6" height="8" viewBox="0 0 7.6 8"><rect x="0.2" y="0.2" width="7.2" height="7.6" rx="0.6" fill="#3f86e0"/><rect x="1.4" y="0.8" width="4.8" height="2.2" fill="#5c9cee"/><rect x="1.4" y="4.6" width="4.8" height="2.6" fill="#7ad0a0"/></svg>
<span class="s" style="left:505.90px;top:65px;font-size:6.6px;color:#7e7e7e;letter-spacing:-0.284px;">debug.txt</span>
<svg style="left:535.70px;top:64.90px" width="6.2" height="6.2" viewBox="0 0 6.2 6.2"><rect x="0.4" y="0.4" width="5.4" height="5.4" fill="#b4b4b4" stroke="#f6f6f6" stroke-width="0.8"/><path d="M1.5 1.5 L4.7 4.7 M4.7 1.5 L1.5 4.7" stroke="#f6f6f6" stroke-width="1.1"/></svg>
<svg style="left:545px;top:62px" width="59" height="12"><rect x="0.30" y="0.00" width="57.90" height="11.20" fill="#c9c9c9"/></svg>
<svg style="left:603px;top:62px" width="2" height="12"><rect x="0.20" y="0.00" width="0.90" height="11.20" fill="#8a8a8a"/></svg>
<svg style="left:545.60px;top:63.80px" width="7.6" height="8" viewBox="0 0 7.6 8"><rect x="0.2" y="0.2" width="7.2" height="7.6" rx="0.6" fill="#3f86e0"/><rect x="1.4" y="0.8" width="4.8" height="2.2" fill="#5c9cee"/><rect x="1.4" y="4.6" width="4.8" height="2.6" fill="#7ad0a0"/></svg>
<span class="s" style="left:555.40px;top:65px;font-size:6.6px;color:#7e7e7e;letter-spacing:-0.200px;">Transcript.txt</span>
<svg style="left:595.50px;top:64.90px" width="6.2" height="6.2" viewBox="0 0 6.2 6.2"><rect x="0.4" y="0.4" width="5.4" height="5.4" fill="#b4b4b4" stroke="#f6f6f6" stroke-width="0.8"/><path d="M1.5 1.5 L4.7 4.7 M4.7 1.5 L1.5 4.7" stroke="#f6f6f6" stroke-width="1.1"/></svg>
<svg style="left:605px;top:62px" width="129" height="12"><rect x="0.00" y="0.00" width="128.40" height="11.20" fill="#c9c9c9"/></svg>
<svg style="left:733px;top:62px" width="2" height="12"><rect x="0.40" y="0.00" width="0.90" height="11.20" fill="#8a8a8a"/></svg>
<svg style="left:605.30px;top:63.80px" width="7.6" height="8" viewBox="0 0 7.6 8"><rect x="0.2" y="0.2" width="7.2" height="7.6" rx="0.6" fill="#3f86e0"/><rect x="1.4" y="0.8" width="4.8" height="2.2" fill="#5c9cee"/><rect x="1.4" y="4.6" width="4.8" height="2.6" fill="#7ad0a0"/></svg>
<span class="s" style="left:615.20px;top:65px;font-size:6.6px;color:#7e7e7e;letter-spacing:-0.176px;">console-output-CLI-Console-(1)_(8).txt</span>
<svg style="left:725.70px;top:64.90px" width="6.2" height="6.2" viewBox="0 0 6.2 6.2"><rect x="0.4" y="0.4" width="5.4" height="5.4" fill="#b4b4b4" stroke="#f6f6f6" stroke-width="0.8"/><path d="M1.5 1.5 L4.7 4.7 M4.7 1.5 L1.5 4.7" stroke="#f6f6f6" stroke-width="1.1"/></svg>
<svg style="left:734px;top:61px" width="72" height="13"><rect x="0.70" y="0.30" width="70.60" height="12.60" fill="#f8f8f8"/></svg>
<svg style="left:734px;top:61px" width="72" height="2"><rect x="0.70" y="0.30" width="70.60" height="1.30" fill="#f0a030"/></svg>
<svg style="left:805px;top:62px" width="2" height="12"><rect x="0.30" y="0.00" width="0.90" height="11.50" fill="#8a8a8a"/></svg>
<svg style="left:735.60px;top:64.20px" width="7.6" height="8" viewBox="0 0 7.6 8"><rect x="0.2" y="0.2" width="7.2" height="7.6" rx="0.6" fill="#5c92e4"/><rect x="1.4" y="0.8" width="4.8" height="2.2" fill="#5c9cee"/><rect x="1.4" y="4.6" width="4.8" height="2.6" fill="#a6dca0"/></svg>
<span class="s" style="left:745.20px;top:65px;font-size:6.5px;color:#111;letter-spacing:-0.108px;text-shadow:0.25px 0 0 #111;">debug_output.txt</span>
<svg style="left:797.10px;top:64.90px" width="6.2" height="6.2" viewBox="0 0 6.2 6.2"><rect x="0.4" y="0.4" width="5.4" height="5.4" fill="#fdf4f8" stroke="#a8305a" stroke-width="0.8"/><path d="M1.5 1.5 L4.7 4.7 M4.7 1.5 L1.5 4.7" stroke="#a8305a" stroke-width="1.1"/></svg>
<svg style="left:493px;top:74px" width="502" height="266"><rect x="0.90" y="0.20" width="501.10" height="265.60" fill="#ffffff"/></svg>
<svg style="left:496px;top:74px" width="17" height="266"><rect x="0.00" y="0.20" width="16.50" height="265.60" fill="#e2e2e2"/></svg>
<svg style="left:512px;top:74px" width="9" height="266"><rect x="0.50" y="0.20" width="8.50" height="265.60" fill="#e8e8e8"/></svg>
<svg style="left:521px;top:74px" width="5" height="266"><rect x="0.00" y="0.20" width="4.20" height="265.60" fill="#f3f3f3"/></svg>
<svg style="left:525px;top:207px" width="470" height="9"><rect x="0.20" y="0.34" width="469.80" height="8.28" fill="#e8e8ff"/></svg>
<span class="m" style="left:498.42px;top:76px;font-size:6.88px;color:#9a9a9a;">141</span>
<span class="m" style="left:498.42px;top:84px;font-size:6.88px;color:#9a9a9a;">142</span>
<span class="m" style="left:498.42px;top:93px;font-size:6.88px;color:#9a9a9a;">143</span>
<span class="m" style="left:498.42px;top:101px;font-size:6.88px;color:#9a9a9a;">144</span>
<span class="m" style="left:498.42px;top:109px;font-size:6.88px;color:#9a9a9a;">145</span>
<span class="m" style="left:498.42px;top:117px;font-size:6.88px;color:#9a9a9a;">146</span>
<span class="m" style="left:498.42px;top:126px;font-size:6.88px;color:#9a9a9a;">147</span>
<span class="m" style="left:526.00px;top:126px;font-size:6.88px;color:#141414;">'</span>
<span class="m" style="left:498.42px;top:134px;font-size:6.88px;color:#9a9a9a;">148</span>
<span class="m" style="left:526.00px;top:134px;font-size:6.88px;color:#141414;">ike V=root:0:cert-auth:38: received FCT-UID : 7E8BA5E8CC0C473C98A32A393935F491</span>
<span class="m" style="left:498.42px;top:142px;font-size:6.88px;color:#9a9a9a;">149</span>
<span class="m" style="left:526.00px;top:142px;font-size:6.88px;color:#141414;">ike V=root:0:cert-auth:38: received EMS SN :</span>
<span class="m" style="left:498.42px;top:151px;font-size:6.88px;color:#9a9a9a;">150</span>
<span class="m" style="left:526.00px;top:151px;font-size:6.88px;color:#141414;">ike V=root:0:cert-auth:38: received EMS tenant ID :</span>
<span class="m" style="left:498.42px;top:159px;font-size:6.88px;color:#9a9a9a;">151</span>
<span class="m" style="left:526.00px;top:159px;font-size:6.88px;color:#141414;">ike V=root:0:cert-auth:38: received peer identifier DER_ASN1_DN</span>
<span class="m" style="left:498.42px;top:167px;font-size:6.88px;color:#9a9a9a;">152</span>
<span class="m" style="left:526.00px;top:167px;font-size:6.88px;color:#141414;">ike V=root:0:cert-auth:38: re-validate gw ID</span>
<span class="m" style="left:498.42px;top:175px;font-size:6.88px;color:#9a9a9a;">153</span>
<span class="m" style="left:526.00px;top:175px;font-size:6.88px;color:#141414;">ike V=root:0:cert-auth:38: gw validation OK</span>
<span class="m" style="left:498.42px;top:184px;font-size:6.88px;color:#9a9a9a;">154</span>
<span class="m" style="left:526.00px;top:184px;font-size:6.88px;color:#141414;">ike V=root:0:cert-auth:38: Validating X.509 certificate</span>
<span class="m" style="left:498.42px;top:192px;font-size:6.88px;color:#9a9a9a;">155</span>
<span class="m" style="left:526.00px;top:192px;font-size:6.88px;color:#141414;">ike V=root:0:cert-auth:38: peer cert, subject='</span>
<span class="m" style="left:498.42px;top:200px;font-size:6.88px;color:#9a9a9a;">156</span>
<span class="m" style="left:526.00px;top:200px;font-size:6.88px;color:#141414;">ike V=root:0:cert-auth:38: peer ID verified</span>
<span class="m" style="left:498.42px;top:208px;font-size:6.88px;color:#9a9a9a;">157</span>
<span class="m" style="left:526.00px;top:208px;font-size:6.88px;color:#141414;">ike V=root:0:cert-auth:38: building fnbam peer candidate list</span>
<span class="m" style="left:498.42px;top:217px;font-size:6.88px;color:#9a9a9a;">158</span>
<span class="m" style="left:526.00px;top:217px;font-size:6.88px;color:#141414;">ike V=root:0:cert-auth:38: FNBAM_GROUP_NAME candidate</span>
<span class="m" style="left:498.42px;top:225px;font-size:6.88px;color:#9a9a9a;">159</span>
<span class="m" style="left:526.00px;top:225px;font-size:6.88px;color:#141414;">ike V=root:0:cert-auth:38: certificate validation pending</span>
<span class="m" style="left:498.42px;top:233px;font-size:6.88px;color:#9a9a9a;">160</span>
<span class="m" style="left:526.00px;top:233px;font-size:6.88px;color:#141414;">ike V=root:0:cert-auth:38: fnbam reply</span>
<span class="m" style="left:498.42px;top:242px;font-size:6.88px;color:#9a9a9a;">161</span>
<span class="m" style="left:526.00px;top:242px;font-size:6.88px;color:#141414;">ike V=root:0:cert-auth:38: fnbam matched peer</span>
<span class="m" style="left:498.42px;top:250px;font-size:6.88px;color:#9a9a9a;">162</span>
<span class="m" style="left:526.00px;top:250px;font-size:6.88px;color:#141414;">ike V=root:0:cert-auth:38: certificate validation succeeded</span>
<span class="m" style="left:498.42px;top:258px;font-size:6.88px;color:#9a9a9a;">163</span>
<span class="m" style="left:526.00px;top:258px;font-size:6.88px;color:#141414;">ike V=root:0:cert-auth:38: signature verification failed</span>
<span class="m" style="left:498.42px;top:266px;font-size:6.88px;color:#9a9a9a;">164</span>
<span class="m" style="left:526.00px;top:266px;font-size:6.88px;color:#141414;">ike V=root:0:cert-auth:38: auth verify done</span>
<span class="m" style="left:498.42px;top:275px;font-size:6.88px;color:#9a9a9a;">165</span>
<span class="m" style="left:526.00px;top:275px;font-size:6.88px;color:#141414;">ike V=root:0:cert-auth:38: responder AUTH continuation</span>
<span class="m" style="left:498.42px;top:283px;font-size:6.88px;color:#9a9a9a;">166</span>
<span class="m" style="left:526.00px;top:283px;font-size:6.88px;color:#141414;">ike V=root:0:cert-auth:38: authentication failed</span>
<span class="m" style="left:498.42px;top:291px;font-size:6.88px;color:#9a9a9a;">167</span>
<span class="m" style="left:526.00px;top:291px;font-size:6.88px;color:#141414;">ike 0:cert-auth:38: enc 00000008000000180706050403020107</span>
<span class="m" style="left:498.42px;top:300px;font-size:6.88px;color:#9a9a9a;">168</span>
<span class="m" style="left:526.00px;top:300px;font-size:6.88px;color:#141414;">ike 0:cert-auth:38: out</span>
<span class="m" style="left:498.42px;top:308px;font-size:6.88px;color:#9a9a9a;">169</span>
<span class="m" style="left:526.00px;top:308px;font-size:6.88px;color:#141414;">ike V=root:0:cert-auth:38: sent IKE msg (AUTH_RESPONSE):</span>
<span class="m" style="left:498.42px;top:316px;font-size:6.88px;color:#9a9a9a;">170</span>
<span class="m" style="left:526.00px;top:316px;font-size:6.88px;color:#141414;">ike V=root:0:cert-auth: connection expiring due to phase1 down</span>
<span class="m" style="left:498.42px;top:324px;font-size:6.88px;color:#9a9a9a;">171</span>
<span class="m" style="left:526.00px;top:324px;font-size:6.88px;color:#141414;">ike V=root:0:cert-auth: going to be deleted</span>
<span class="m" style="left:498.42px;top:333px;font-size:6.88px;color:#9a9a9a;">172</span>
<span class="m" style="left:526.00px;top:333px;font-size:6.88px;color:#141414;">ike V=root:0: comes</span>
<svg style="left:526.00px;top:76.20px;opacity:1.0;filter:blur(0.6px)" width="57.79" height="5.40"><rect x="0.00" y="0" width="3.60" height="5.40" fill="#9c9c9c"/><rect x="3.40" y="0" width="3.60" height="5.40" fill="#bcbcbc"/><rect x="6.80" y="0" width="3.60" height="5.40" fill="#bcbcbc"/><rect x="10.20" y="0" width="3.60" height="5.40" fill="#dcdcdc"/><rect x="13.60" y="0" width="3.60" height="5.40" fill="#dcdcdc"/><rect x="17.00" y="0" width="3.60" height="5.40" fill="#9c9c9c"/><rect x="20.40" y="0" width="3.60" height="5.40" fill="#e8e8e8"/><rect x="23.80" y="0" width="3.60" height="5.40" fill="#e8e8e8"/><rect x="27.20" y="0" width="3.60" height="5.40" fill="#dcdcdc"/><rect x="30.60" y="0" width="3.60" height="5.40" fill="#9c9c9c"/><rect x="34.00" y="0" width="3.60" height="5.40" fill="#e8e8e8"/><rect x="37.40" y="0" width="3.60" height="5.40" fill="#9c9c9c"/><rect x="40.80" y="0" width="3.60" height="5.40" fill="#bcbcbc"/><rect x="44.20" y="0" width="3.60" height="5.40" fill="#b0b0b0"/><rect x="47.60" y="0" width="3.60" height="5.40" fill="#dcdcdc"/><rect x="51.00" y="0" width="3.60" height="5.40" fill="#b0b0b0"/><rect x="54.40" y="0" width="3.60" height="5.40" fill="#9c9c9c"/></svg>
<svg style="left:526.00px;top:84.48px;opacity:1.0;filter:blur(0.6px)" width="466.46" height="5.40"><rect x="0.00" y="0" width="3.60" height="5.40" fill="#a8a8a8"/><rect x="3.40" y="0" width="3.60" height="5.40" fill="#e6e6e6"/><rect x="6.80" y="0" width="3.60" height="5.40" fill="#e6e6e6"/><rect x="10.20" y="0" width="3.60" height="5.40" fill="#cfcfcf"/><rect x="13.60" y="0" width="3.60" height="5.40" fill="#cfcfcf"/><rect x="17.00" y="0" width="3.60" height="5.40" fill="#a8a8a8"/><rect x="20.40" y="0" width="3.60" height="5.40" fill="#cfcfcf"/><rect x="23.80" y="0" width="3.60" height="5.40" fill="#b4b4b4"/><rect x="27.20" y="0" width="3.60" height="5.40" fill="#c4c4c4"/><rect x="30.60" y="0" width="3.60" height="5.40" fill="#c4c4c4"/><rect x="34.00" y="0" width="3.60" height="5.40" fill="#cfcfcf"/><rect x="37.40" y="0" width="3.60" height="5.40" fill="#b4b4b4"/><rect x="40.80" y="0" width="3.60" height="5.40" fill="#a8a8a8"/><rect x="44.20" y="0" width="3.60" height="5.40" fill="#dedede"/><rect x="47.60" y="0" width="3.60" height="5.40" fill="#d8d8d8"/><rect x="51.00" y="0" width="3.60" height="5.40" fill="#d8d8d8"/><rect x="54.40" y="0" width="3.60" height="5.40" fill="#a8a8a8"/><rect x="57.80" y="0" width="3.60" height="5.40" fill="#a8a8a8"/><rect x="61.20" y="0" width="3.60" height="5.40" fill="#b4b4b4"/><rect x="64.60" y="0" width="3.60" height="5.40" fill="#cfcfcf"/><rect x="68.00" y="0" width="3.60" height="5.40" fill="#dedede"/><rect x="71.40" y="0" width="3.60" height="5.40" fill="#d8d8d8"/><rect x="74.80" y="0" width="3.60" height="5.40" fill="#e6e6e6"/><rect x="78.20" y="0" width="3.60" height="5.40" fill="#cfcfcf"/><rect x="81.60" y="0" width="3.60" height="5.40" fill="#a8a8a8"/><rect x="85.00" y="0" width="3.60" height="5.40" fill="#d8d8d8"/><rect x="88.40" y="0" width="3.60" height="5.40" fill="#b4b4b4"/><rect x="91.80" y="0" width="3.60" height="5.40" fill="#a8a8a8"/><rect x="95.20" y="0" width="3.60" height="5.40" fill="#a8a8a8"/><rect x="98.60" y="0" width="3.60" height="5.40" fill="#b4b4b4"/><rect x="102.00" y="0" width="3.60" height="5.40" fill="#b4b4b4"/><rect x="105.40" y="0" width="3.60" height="5.40" fill="#e6e6e6"/><rect x="108.80" y="0" width="3.60" height="5.40" fill="#c4c4c4"/><rect x="112.20" y="0" width="3.60" height="5.40" fill="#dedede"/><rect x="115.60" y="0" width="3.60" height="5.40" fill="#a8a8a8"/><rect x="119.00" y="0" width="3.60" height="5.40" fill="#f0f0f0"/><rect x="122.40" y="0" width="3.60" height="5.40" fill="#cfcfcf"/><rect x="125.80" y="0" width="3.60" height="5.40" fill="#c4c4c4"/><rect x="129.20" y="0" width="3.60" height="5.40" fill="#a8a8a8"/><rect x="132.60" y="0" width="3.60" height="5.40" fill="#b4b4b4"/><rect x="136.00" y="0" width="3.60" height="5.40" fill="#a8a8a8"/><rect x="139.40" y="0" width="3.60" height="5.40" fill="#e6e6e6"/><rect x="142.80" y="0" width="3.60" height="5.40" fill="#cfcfcf"/><rect x="146.20" y="0" width="3.60" height="5.40" fill="#a8a8a8"/><rect x="149.60" y="0" width="3.60" height="5.40" fill="#dedede"/><rect x="153.00" y="0" width="3.60" height="5.40" fill="#dedede"/><rect x="156.40" y="0" width="3.60" height="5.40" fill="#d8d8d8"/><rect x="159.80" y="0" width="3.60" height="5.40" fill="#a8a8a8"/><rect x="163.20" y="0" width="3.60" height="5.40" fill="#e6e6e6"/><rect x="166.60" y="0" width="3.60" height="5.40" fill="#f0f0f0"/><rect x="170.00" y="0" width="3.60" height="5.40" fill="#d8d8d8"/><rect x="173.40" y="0" width="3.60" height="5.40" fill="#a8a8a8"/><rect x="176.80" y="0" width="3.60" height="5.40" fill="#dedede"/><rect x="180.20" y="0" width="3.60" height="5.40" fill="#c4c4c4"/><rect x="183.60" y="0" width="3.60" height="5.40" fill="#d8d8d8"/><rect x="187.00" y="0" width="3.60" height="5.40" fill="#cfcfcf"/><rect x="190.40" y="0" width="3.60" height="5.40" fill="#b4b4b4"/><rect x="193.80" y="0" width="3.60" height="5.40" fill="#e6e6e6"/><rect x="197.20" y="0" width="3.60" height="5.40" fill="#b4b4b4"/><rect x="200.60" y="0" width="3.60" height="5.40" fill="#f0f0f0"/><rect x="204.00" y="0" width="3.60" height="5.40" fill="#c4c4c4"/><rect x="207.40" y="0" width="3.60" height="5.40" fill="#dedede"/><rect x="210.80" y="0" width="3.60" height="5.40" fill="#b4b4b4"/><rect x="214.20" y="0" width="3.60" height="5.40" fill="#dedede"/><rect x="217.60" y="0" width="3.60" height="5.40" fill="#d8d8d8"/><rect x="221.00" y="0" width="3.60" height="5.40" fill="#f0f0f0"/><rect x="224.40" y="0" width="3.60" height="5.40" fill="#f0f0f0"/><rect x="227.80" y="0" width="3.60" height="5.40" fill="#a8a8a8"/><rect x="231.20" y="0" width="3.60" height="5.40" fill="#dedede"/><rect x="234.60" y="0" width="3.60" height="5.40" fill="#b4b4b4"/><rect x="238.00" y="0" width="3.60" height="5.40" fill="#e6e6e6"/><rect x="241.40" y="0" width="3.60" height="5.40" fill="#a8a8a8"/><rect x="244.80" y="0" width="3.60" height="5.40" fill="#c4c4c4"/><rect x="248.20" y="0" width="3.60" height="5.40" fill="#f0f0f0"/><rect x="251.60" y="0" width="3.60" height="5.40" fill="#d8d8d8"/><rect x="255.00" y="0" width="3.60" height="5.40" fill="#cfcfcf"/><rect x="258.40" y="0" width="3.60" height="5.40" fill="#cfcfcf"/><rect x="261.80" y="0" width="3.60" height="5.40" fill="#a8a8a8"/><rect x="265.20" y="0" width="3.60" height="5.40" fill="#a8a8a8"/><rect x="268.60" y="0" width="3.60" height="5.40" fill="#d8d8d8"/><rect x="272.00" y="0" width="3.60" height="5.40" fill="#d8d8d8"/><rect x="275.40" y="0" width="3.60" height="5.40" fill="#c4c4c4"/><rect x="278.80" y="0" width="3.60" height="5.40" fill="#a8a8a8"/><rect x="282.20" y="0" width="3.60" height="5.40" fill="#a8a8a8"/><rect x="285.60" y="0" width="3.60" height="5.40" fill="#f0f0f0"/><rect x="289.00" y="0" width="3.60" height="5.40" fill="#cfcfcf"/><rect x="292.40" y="0" width="3.60" height="5.40" fill="#c4c4c4"/><rect x="295.80" y="0" width="3.60" height="5.40" fill="#b4b4b4"/><rect x="299.20" y="0" width="3.60" height="5.40" fill="#cfcfcf"/><rect x="302.60" y="0" width="3.60" height="5.40" fill="#a8a8a8"/><rect x="306.00" y="0" width="3.60" height="5.40" fill="#b4b4b4"/><rect x="309.40" y="0" width="3.60" height="5.40" fill="#a8a8a8"/><rect x="312.80" y="0" width="3.60" height="5.40" fill="#dedede"/><rect x="316.20" y="0" width="3.60" height="5.40" fill="#b4b4b4"/><rect x="319.60" y="0" width="3.60" height="5.40" fill="#e6e6e6"/><rect x="323.00" y="0" width="3.60" height="5.40" fill="#e6e6e6"/><rect x="326.40" y="0" width="3.60" height="5.40" fill="#c4c4c4"/><rect x="329.80" y="0" width="3.60" height="5.40" fill="#b4b4b4"/><rect x="333.20" y="0" width="3.60" height="5.40" fill="#dedede"/><rect x="336.60" y="0" width="3.60" height="5.40" fill="#b4b4b4"/><rect x="340.00" y="0" width="3.60" height="5.40" fill="#e6e6e6"/><rect x="343.40" y="0" width="3.60" height="5.40" fill="#f0f0f0"/><rect x="346.80" y="0" width="3.60" height="5.40" fill="#a8a8a8"/><rect x="350.20" y="0" width="3.60" height="5.40" fill="#dedede"/><rect x="353.60" y="0" width="3.60" height="5.40" fill="#cfcfcf"/><rect x="357.00" y="0" width="3.60" height="5.40" fill="#e6e6e6"/><rect x="360.40" y="0" width="3.60" height="5.40" fill="#dedede"/><rect x="363.80" y="0" width="3.60" height="5.40" fill="#f0f0f0"/><rect x="367.20" y="0" width="3.60" height="5.40" fill="#b4b4b4"/><rect x="370.60" y="0" width="3.60" height="5.40" fill="#cfcfcf"/><rect x="374.00" y="0" width="3.60" height="5.40" fill="#a8a8a8"/><rect x="377.40" y="0" width="3.60" height="5.40" fill="#cfcfcf"/><rect x="380.80" y="0" width="3.60" height="5.40" fill="#a8a8a8"/><rect x="384.20" y="0" width="3.60" height="5.40" fill="#e6e6e6"/><rect x="387.60" y="0" width="3.60" height="5.40" fill="#dedede"/><rect x="391.00" y="0" width="3.60" height="5.40" fill="#d8d8d8"/><rect x="394.40" y="0" width="3.60" height="5.40" fill="#cfcfcf"/><rect x="397.80" y="0" width="3.60" height="5.40" fill="#f0f0f0"/><rect x="401.20" y="0" width="3.60" height="5.40" fill="#b4b4b4"/><rect x="404.60" y="0" width="3.60" height="5.40" fill="#cfcfcf"/><rect x="408.00" y="0" width="3.60" height="5.40" fill="#f0f0f0"/><rect x="411.40" y="0" width="3.60" height="5.40" fill="#dedede"/><rect x="414.80" y="0" width="3.60" height="5.40" fill="#dedede"/><rect x="418.20" y="0" width="3.60" height="5.40" fill="#a8a8a8"/><rect x="421.60" y="0" width="3.60" height="5.40" fill="#c4c4c4"/><rect x="425.00" y="0" width="3.60" height="5.40" fill="#f0f0f0"/><rect x="428.40" y="0" width="3.60" height="5.40" fill="#e6e6e6"/><rect x="431.80" y="0" width="3.60" height="5.40" fill="#cfcfcf"/><rect x="435.20" y="0" width="3.60" height="5.40" fill="#a8a8a8"/><rect x="438.60" y="0" width="3.60" height="5.40" fill="#d8d8d8"/><rect x="442.00" y="0" width="3.60" height="5.40" fill="#c4c4c4"/><rect x="445.40" y="0" width="3.60" height="5.40" fill="#f0f0f0"/><rect x="448.80" y="0" width="3.60" height="5.40" fill="#e6e6e6"/><rect x="452.20" y="0" width="3.60" height="5.40" fill="#f0f0f0"/><rect x="455.60" y="0" width="3.60" height="5.40" fill="#d8d8d8"/><rect x="459.00" y="0" width="3.60" height="5.40" fill="#d8d8d8"/><rect x="462.40" y="0" width="3.60" height="5.40" fill="#b4b4b4"/></svg>
<svg style="left:526.00px;top:92.76px;opacity:1.0;filter:blur(0.6px)" width="82.56" height="5.40"><rect x="0.00" y="0" width="3.60" height="5.40" fill="#b0b0b0"/><rect x="3.40" y="0" width="3.60" height="5.40" fill="#bcbcbc"/><rect x="6.80" y="0" width="3.60" height="5.40" fill="#bcbcbc"/><rect x="10.20" y="0" width="3.60" height="5.40" fill="#b0b0b0"/><rect x="13.60" y="0" width="3.60" height="5.40" fill="#dcdcdc"/><rect x="17.00" y="0" width="3.60" height="5.40" fill="#9c9c9c"/><rect x="20.40" y="0" width="3.60" height="5.40" fill="#dcdcdc"/><rect x="23.80" y="0" width="3.60" height="5.40" fill="#d2d2d2"/><rect x="27.20" y="0" width="3.60" height="5.40" fill="#e8e8e8"/><rect x="30.60" y="0" width="3.60" height="5.40" fill="#dcdcdc"/><rect x="34.00" y="0" width="3.60" height="5.40" fill="#9c9c9c"/><rect x="37.40" y="0" width="3.60" height="5.40" fill="#8c8c8c"/><rect x="40.80" y="0" width="3.60" height="5.40" fill="#dcdcdc"/><rect x="44.20" y="0" width="3.60" height="5.40" fill="#b0b0b0"/><rect x="47.60" y="0" width="3.60" height="5.40" fill="#bcbcbc"/><rect x="51.00" y="0" width="3.60" height="5.40" fill="#9c9c9c"/><rect x="54.40" y="0" width="3.60" height="5.40" fill="#d2d2d2"/><rect x="57.80" y="0" width="3.60" height="5.40" fill="#9c9c9c"/><rect x="61.20" y="0" width="3.60" height="5.40" fill="#b0b0b0"/><rect x="64.60" y="0" width="3.60" height="5.40" fill="#d2d2d2"/><rect x="68.00" y="0" width="3.60" height="5.40" fill="#b0b0b0"/><rect x="71.40" y="0" width="3.60" height="5.40" fill="#b0b0b0"/><rect x="74.80" y="0" width="3.60" height="5.40" fill="#bcbcbc"/><rect x="78.20" y="0" width="3.60" height="5.40" fill="#8c8c8c"/></svg>
<svg style="left:526.00px;top:101.04px;opacity:1.0;filter:blur(0.6px)" width="37.15" height="5.40"><rect x="0.00" y="0" width="3.60" height="5.40" fill="#9c9c9c"/><rect x="3.40" y="0" width="3.60" height="5.40" fill="#dcdcdc"/><rect x="6.80" y="0" width="3.60" height="5.40" fill="#d2d2d2"/><rect x="10.20" y="0" width="3.60" height="5.40" fill="#d2d2d2"/><rect x="13.60" y="0" width="3.60" height="5.40" fill="#c8c8c8"/><rect x="17.00" y="0" width="3.60" height="5.40" fill="#d2d2d2"/><rect x="20.40" y="0" width="3.60" height="5.40" fill="#d2d2d2"/><rect x="23.80" y="0" width="3.60" height="5.40" fill="#dcdcdc"/><rect x="27.20" y="0" width="3.60" height="5.40" fill="#d2d2d2"/><rect x="30.60" y="0" width="3.60" height="5.40" fill="#9c9c9c"/><rect x="34.00" y="0" width="3.60" height="5.40" fill="#d2d2d2"/></svg>
<svg style="left:526.00px;top:108.82px;opacity:1.0;filter:blur(0.6px)" width="284.83" height="6.40"><rect x="0.00" y="0" width="4.40" height="6.40" fill="#e6e6e6"/><rect x="4.20" y="0" width="4.40" height="6.40" fill="#d8d8d8"/><rect x="8.40" y="0" width="4.40" height="6.40" fill="#e6e6e6"/><rect x="12.60" y="0" width="4.40" height="6.40" fill="#f0f0f0"/><rect x="16.80" y="0" width="4.40" height="6.40" fill="#dedede"/><rect x="21.00" y="0" width="4.40" height="6.40" fill="#dedede"/><rect x="25.20" y="0" width="4.40" height="6.40" fill="#cfcfcf"/><rect x="29.40" y="0" width="4.40" height="6.40" fill="#dedede"/><rect x="33.60" y="0" width="4.40" height="6.40" fill="#f0f0f0"/><rect x="37.80" y="0" width="4.40" height="6.40" fill="#a8a8a8"/><rect x="42.00" y="0" width="4.40" height="6.40" fill="#a8a8a8"/><rect x="46.20" y="0" width="4.40" height="6.40" fill="#c4c4c4"/><rect x="50.40" y="0" width="4.40" height="6.40" fill="#e6e6e6"/><rect x="54.60" y="0" width="4.40" height="6.40" fill="#f0f0f0"/><rect x="58.80" y="0" width="4.40" height="6.40" fill="#d8d8d8"/><rect x="63.00" y="0" width="4.40" height="6.40" fill="#d8d8d8"/><rect x="67.20" y="0" width="4.40" height="6.40" fill="#d8d8d8"/><rect x="71.40" y="0" width="4.40" height="6.40" fill="#f0f0f0"/><rect x="75.60" y="0" width="4.40" height="6.40" fill="#c4c4c4"/><rect x="79.80" y="0" width="4.40" height="6.40" fill="#dedede"/><rect x="84.00" y="0" width="4.40" height="6.40" fill="#dedede"/><rect x="88.20" y="0" width="4.40" height="6.40" fill="#e6e6e6"/><rect x="92.40" y="0" width="4.40" height="6.40" fill="#d8d8d8"/><rect x="96.60" y="0" width="4.40" height="6.40" fill="#b4b4b4"/><rect x="100.80" y="0" width="4.40" height="6.40" fill="#a8a8a8"/><rect x="105.00" y="0" width="4.40" height="6.40" fill="#e6e6e6"/><rect x="109.20" y="0" width="4.40" height="6.40" fill="#f0f0f0"/><rect x="113.40" y="0" width="4.40" height="6.40" fill="#c4c4c4"/><rect x="117.60" y="0" width="4.40" height="6.40" fill="#f0f0f0"/><rect x="121.80" y="0" width="4.40" height="6.40" fill="#f0f0f0"/><rect x="126.00" y="0" width="4.40" height="6.40" fill="#dedede"/><rect x="130.20" y="0" width="4.40" height="6.40" fill="#b4b4b4"/><rect x="134.40" y="0" width="4.40" height="6.40" fill="#cfcfcf"/><rect x="138.60" y="0" width="4.40" height="6.40" fill="#a8a8a8"/><rect x="142.80" y="0" width="4.40" height="6.40" fill="#f0f0f0"/><rect x="147.00" y="0" width="4.40" height="6.40" fill="#a8a8a8"/><rect x="151.20" y="0" width="4.40" height="6.40" fill="#cfcfcf"/><rect x="155.40" y="0" width="4.40" height="6.40" fill="#d8d8d8"/><rect x="159.60" y="0" width="4.40" height="6.40" fill="#cfcfcf"/><rect x="163.80" y="0" width="4.40" height="6.40" fill="#cfcfcf"/><rect x="168.00" y="0" width="4.40" height="6.40" fill="#f0f0f0"/><rect x="172.20" y="0" width="4.40" height="6.40" fill="#dedede"/><rect x="176.40" y="0" width="4.40" height="6.40" fill="#a8a8a8"/><rect x="180.60" y="0" width="4.40" height="6.40" fill="#f0f0f0"/><rect x="184.80" y="0" width="4.40" height="6.40" fill="#cfcfcf"/><rect x="189.00" y="0" width="4.40" height="6.40" fill="#f0f0f0"/><rect x="193.20" y="0" width="4.40" height="6.40" fill="#b4b4b4"/><rect x="197.40" y="0" width="4.40" height="6.40" fill="#dedede"/><rect x="201.60" y="0" width="4.40" height="6.40" fill="#c4c4c4"/><rect x="205.80" y="0" width="4.40" height="6.40" fill="#f0f0f0"/><rect x="210.00" y="0" width="4.40" height="6.40" fill="#b4b4b4"/><rect x="214.20" y="0" width="4.40" height="6.40" fill="#f0f0f0"/><rect x="218.40" y="0" width="4.40" height="6.40" fill="#cfcfcf"/><rect x="222.60" y="0" width="4.40" height="6.40" fill="#e6e6e6"/><rect x="226.80" y="0" width="4.40" height="6.40" fill="#c4c4c4"/><rect x="231.00" y="0" width="4.40" height="6.40" fill="#d8d8d8"/><rect x="235.20" y="0" width="4.40" height="6.40" fill="#a8a8a8"/><rect x="239.40" y="0" width="4.40" height="6.40" fill="#a8a8a8"/><rect x="243.60" y="0" width="4.40" height="6.40" fill="#d8d8d8"/><rect x="247.80" y="0" width="4.40" height="6.40" fill="#a8a8a8"/><rect x="252.00" y="0" width="4.40" height="6.40" fill="#cfcfcf"/><rect x="256.20" y="0" width="4.40" height="6.40" fill="#c4c4c4"/><rect x="260.40" y="0" width="4.40" height="6.40" fill="#d8d8d8"/><rect x="264.60" y="0" width="4.40" height="6.40" fill="#d8d8d8"/><rect x="268.80" y="0" width="4.40" height="6.40" fill="#b4b4b4"/><rect x="273.00" y="0" width="4.40" height="6.40" fill="#dedede"/><rect x="277.20" y="0" width="4.40" height="6.40" fill="#d8d8d8"/><rect x="281.40" y="0" width="4.40" height="6.40" fill="#a8a8a8"/></svg>
<svg style="left:526.00px;top:117.60px;opacity:1.0;filter:blur(0.6px)" width="48.71" height="5.40"><rect x="0.00" y="0" width="3.60" height="5.40" fill="#dcdcdc"/><rect x="3.40" y="0" width="3.60" height="5.40" fill="#b0b0b0"/><rect x="6.80" y="0" width="3.60" height="5.40" fill="#9c9c9c"/><rect x="10.20" y="0" width="3.60" height="5.40" fill="#c8c8c8"/><rect x="13.60" y="0" width="3.60" height="5.40" fill="#d2d2d2"/><rect x="17.00" y="0" width="3.60" height="5.40" fill="#dcdcdc"/><rect x="20.40" y="0" width="3.60" height="5.40" fill="#b0b0b0"/><rect x="23.80" y="0" width="3.60" height="5.40" fill="#dcdcdc"/><rect x="27.20" y="0" width="3.60" height="5.40" fill="#c8c8c8"/><rect x="30.60" y="0" width="3.60" height="5.40" fill="#8c8c8c"/><rect x="34.00" y="0" width="3.60" height="5.40" fill="#b0b0b0"/><rect x="37.40" y="0" width="3.60" height="5.40" fill="#c8c8c8"/><rect x="40.80" y="0" width="3.60" height="5.40" fill="#e8e8e8"/><rect x="44.20" y="0" width="3.60" height="5.40" fill="#dcdcdc"/></svg>
<svg style="left:790.19px;top:159.00px;opacity:1.0;filter:blur(0.6px)" width="202.27" height="5.40"><rect x="0.00" y="0" width="3.60" height="5.40" fill="#fafafa"/><rect x="3.40" y="0" width="3.60" height="5.40" fill="#cccccc"/><rect x="6.80" y="0" width="3.60" height="5.40" fill="#fafafa"/><rect x="10.20" y="0" width="3.60" height="5.40" fill="#fafafa"/><rect x="13.60" y="0" width="3.60" height="5.40" fill="#f4f4f4"/><rect x="17.00" y="0" width="3.60" height="5.40" fill="#dedede"/><rect x="20.40" y="0" width="3.60" height="5.40" fill="#e8e8e8"/><rect x="23.80" y="0" width="3.60" height="5.40" fill="#b4b4b4"/><rect x="27.20" y="0" width="3.60" height="5.40" fill="#e8e8e8"/><rect x="30.60" y="0" width="3.60" height="5.40" fill="#dedede"/><rect x="34.00" y="0" width="3.60" height="5.40" fill="#e8e8e8"/><rect x="37.40" y="0" width="3.60" height="5.40" fill="#ffffff"/><rect x="40.80" y="0" width="3.60" height="5.40" fill="#cccccc"/><rect x="44.20" y="0" width="3.60" height="5.40" fill="#e8e8e8"/><rect x="47.60" y="0" width="3.60" height="5.40" fill="#d4d4d4"/><rect x="51.00" y="0" width="3.60" height="5.40" fill="#dedede"/><rect x="54.40" y="0" width="3.60" height="5.40" fill="#dedede"/><rect x="57.80" y="0" width="3.60" height="5.40" fill="#ffffff"/><rect x="61.20" y="0" width="3.60" height="5.40" fill="#d4d4d4"/><rect x="64.60" y="0" width="3.60" height="5.40" fill="#e8e8e8"/><rect x="68.00" y="0" width="3.60" height="5.40" fill="#dedede"/><rect x="71.40" y="0" width="3.60" height="5.40" fill="#f4f4f4"/><rect x="74.80" y="0" width="3.60" height="5.40" fill="#ffffff"/><rect x="78.20" y="0" width="3.60" height="5.40" fill="#dedede"/><rect x="81.60" y="0" width="3.60" height="5.40" fill="#cccccc"/><rect x="85.00" y="0" width="3.60" height="5.40" fill="#d4d4d4"/><rect x="88.40" y="0" width="3.60" height="5.40" fill="#d4d4d4"/><rect x="91.80" y="0" width="3.60" height="5.40" fill="#ffffff"/><rect x="95.20" y="0" width="3.60" height="5.40" fill="#c4c4c4"/><rect x="98.60" y="0" width="3.60" height="5.40" fill="#f4f4f4"/><rect x="102.00" y="0" width="3.60" height="5.40" fill="#e8e8e8"/><rect x="105.40" y="0" width="3.60" height="5.40" fill="#dedede"/><rect x="108.80" y="0" width="3.60" height="5.40" fill="#e8e8e8"/><rect x="112.20" y="0" width="3.60" height="5.40" fill="#e8e8e8"/><rect x="115.60" y="0" width="3.60" height="5.40" fill="#d4d4d4"/><rect x="119.00" y="0" width="3.60" height="5.40" fill="#d4d4d4"/><rect x="122.40" y="0" width="3.60" height="5.40" fill="#c4c4c4"/><rect x="125.80" y="0" width="3.60" height="5.40" fill="#d4d4d4"/><rect x="129.20" y="0" width="3.60" height="5.40" fill="#f4f4f4"/><rect x="132.60" y="0" width="3.60" height="5.40" fill="#ffffff"/><rect x="136.00" y="0" width="3.60" height="5.40" fill="#e8e8e8"/><rect x="139.40" y="0" width="3.60" height="5.40" fill="#fafafa"/><rect x="142.80" y="0" width="3.60" height="5.40" fill="#c4c4c4"/><rect x="146.20" y="0" width="3.60" height="5.40" fill="#ffffff"/><rect x="149.60" y="0" width="3.60" height="5.40" fill="#f4f4f4"/><rect x="153.00" y="0" width="3.60" height="5.40" fill="#e8e8e8"/><rect x="156.40" y="0" width="3.60" height="5.40" fill="#b4b4b4"/><rect x="159.80" y="0" width="3.60" height="5.40" fill="#f4f4f4"/><rect x="163.20" y="0" width="3.60" height="5.40" fill="#d4d4d4"/><rect x="166.60" y="0" width="3.60" height="5.40" fill="#fafafa"/><rect x="170.00" y="0" width="3.60" height="5.40" fill="#cccccc"/><rect x="173.40" y="0" width="3.60" height="5.40" fill="#ffffff"/><rect x="176.80" y="0" width="3.60" height="5.40" fill="#ffffff"/><rect x="180.20" y="0" width="3.60" height="5.40" fill="#fafafa"/><rect x="183.60" y="0" width="3.60" height="5.40" fill="#e8e8e8"/><rect x="187.00" y="0" width="3.60" height="5.40" fill="#e8e8e8"/><rect x="190.40" y="0" width="3.60" height="5.40" fill="#e8e8e8"/><rect x="193.80" y="0" width="3.60" height="5.40" fill="#e8e8e8"/><rect x="197.20" y="0" width="3.60" height="5.40" fill="#e8e8e8"/></svg>
<svg style="left:724.14px;top:192.12px;opacity:1.0;filter:blur(0.6px)" width="103.20" height="5.40"><rect x="0.00" y="0" width="3.60" height="5.40" fill="#d4d4d4"/><rect x="3.40" y="0" width="3.60" height="5.40" fill="#dedede"/><rect x="6.80" y="0" width="3.60" height="5.40" fill="#fafafa"/><rect x="10.20" y="0" width="3.60" height="5.40" fill="#fafafa"/><rect x="13.60" y="0" width="3.60" height="5.40" fill="#f4f4f4"/><rect x="17.00" y="0" width="3.60" height="5.40" fill="#ffffff"/><rect x="20.40" y="0" width="3.60" height="5.40" fill="#e8e8e8"/><rect x="23.80" y="0" width="3.60" height="5.40" fill="#b4b4b4"/><rect x="27.20" y="0" width="3.60" height="5.40" fill="#b4b4b4"/><rect x="30.60" y="0" width="3.60" height="5.40" fill="#ffffff"/><rect x="34.00" y="0" width="3.60" height="5.40" fill="#ffffff"/><rect x="37.40" y="0" width="3.60" height="5.40" fill="#f4f4f4"/><rect x="40.80" y="0" width="3.60" height="5.40" fill="#f4f4f4"/><rect x="44.20" y="0" width="3.60" height="5.40" fill="#d4d4d4"/><rect x="47.60" y="0" width="3.60" height="5.40" fill="#b4b4b4"/><rect x="51.00" y="0" width="3.60" height="5.40" fill="#f4f4f4"/><rect x="54.40" y="0" width="3.60" height="5.40" fill="#dedede"/><rect x="57.80" y="0" width="3.60" height="5.40" fill="#ffffff"/><rect x="61.20" y="0" width="3.60" height="5.40" fill="#dedede"/><rect x="64.60" y="0" width="3.60" height="5.40" fill="#ffffff"/><rect x="68.00" y="0" width="3.60" height="5.40" fill="#fafafa"/><rect x="71.40" y="0" width="3.60" height="5.40" fill="#b4b4b4"/><rect x="74.80" y="0" width="3.60" height="5.40" fill="#fafafa"/><rect x="78.20" y="0" width="3.60" height="5.40" fill="#fafafa"/><rect x="81.60" y="0" width="3.60" height="5.40" fill="#e8e8e8"/><rect x="85.00" y="0" width="3.60" height="5.40" fill="#b4b4b4"/><rect x="88.40" y="0" width="3.60" height="5.40" fill="#e8e8e8"/><rect x="91.80" y="0" width="3.60" height="5.40" fill="#f4f4f4"/><rect x="95.20" y="0" width="3.60" height="5.40" fill="#fafafa"/><rect x="98.60" y="0" width="3.60" height="5.40" fill="#dedede"/></svg>
<span class="m" style="left:827.34px;top:192px;font-size:6.88px;color:#141414;">', issuer=</span>
<svg style="left:869.45px;top:192.12px;opacity:1.0;filter:blur(0.6px)" width="42.93" height="5.40"><rect x="0.00" y="0" width="3.60" height="5.40" fill="#b4b4b4"/><rect x="3.40" y="0" width="3.60" height="5.40" fill="#a8a8a8"/><rect x="6.80" y="0" width="3.60" height="5.40" fill="#a8a8a8"/><rect x="10.20" y="0" width="3.60" height="5.40" fill="#a8a8a8"/><rect x="13.60" y="0" width="3.60" height="5.40" fill="#b4b4b4"/><rect x="17.00" y="0" width="3.60" height="5.40" fill="#dedede"/><rect x="20.40" y="0" width="3.60" height="5.40" fill="#cfcfcf"/><rect x="23.80" y="0" width="3.60" height="5.40" fill="#d8d8d8"/><rect x="27.20" y="0" width="3.60" height="5.40" fill="#f0f0f0"/><rect x="30.60" y="0" width="3.60" height="5.40" fill="#cfcfcf"/><rect x="34.00" y="0" width="3.60" height="5.40" fill="#cfcfcf"/><rect x="37.40" y="0" width="3.60" height="5.40" fill="#a8a8a8"/><rect x="40.80" y="0" width="3.60" height="5.40" fill="#e6e6e6"/></svg>
<svg style="left:750.56px;top:216.96px;opacity:1.0;filter:blur(0.6px)" width="27.24" height="5.40"><rect x="0.00" y="0" width="3.60" height="5.40" fill="#d8d8d8"/><rect x="3.40" y="0" width="3.60" height="5.40" fill="#cfcfcf"/><rect x="6.80" y="0" width="3.60" height="5.40" fill="#e6e6e6"/><rect x="10.20" y="0" width="3.60" height="5.40" fill="#e6e6e6"/><rect x="13.60" y="0" width="3.60" height="5.40" fill="#cfcfcf"/><rect x="17.00" y="0" width="3.60" height="5.40" fill="#dedede"/><rect x="20.40" y="0" width="3.60" height="5.40" fill="#f0f0f0"/><rect x="23.80" y="0" width="3.60" height="5.40" fill="#c4c4c4"/></svg>
<svg style="left:689.06px;top:233.52px;opacity:1.0;filter:blur(0.6px)" width="24.77" height="5.40"><rect x="0.00" y="0" width="3.60" height="5.40" fill="#d2d2d2"/><rect x="3.40" y="0" width="3.60" height="5.40" fill="#8c8c8c"/><rect x="6.80" y="0" width="3.60" height="5.40" fill="#9c9c9c"/><rect x="10.20" y="0" width="3.60" height="5.40" fill="#9c9c9c"/><rect x="13.60" y="0" width="3.60" height="5.40" fill="#bcbcbc"/><rect x="17.00" y="0" width="3.60" height="5.40" fill="#c8c8c8"/><rect x="20.40" y="0" width="3.60" height="5.40" fill="#8c8c8c"/></svg>
<svg style="left:717.13px;top:241.80px;opacity:1.0;filter:blur(0.6px)" width="24.77" height="5.40"><rect x="0.00" y="0" width="3.60" height="5.40" fill="#d2d2d2"/><rect x="3.40" y="0" width="3.60" height="5.40" fill="#9c9c9c"/><rect x="6.80" y="0" width="3.60" height="5.40" fill="#bcbcbc"/><rect x="10.20" y="0" width="3.60" height="5.40" fill="#c8c8c8"/><rect x="13.60" y="0" width="3.60" height="5.40" fill="#8c8c8c"/><rect x="17.00" y="0" width="3.60" height="5.40" fill="#d2d2d2"/><rect x="20.40" y="0" width="3.60" height="5.40" fill="#b0b0b0"/></svg>
<svg style="left:625.07px;top:299.76px;opacity:1.0;filter:blur(0.6px)" width="367.39" height="5.40"><rect x="0.00" y="0" width="3.60" height="5.40" fill="#cccccc"/><rect x="3.40" y="0" width="3.60" height="5.40" fill="#b4b4b4"/><rect x="6.80" y="0" width="3.60" height="5.40" fill="#d4d4d4"/><rect x="10.20" y="0" width="3.60" height="5.40" fill="#c4c4c4"/><rect x="13.60" y="0" width="3.60" height="5.40" fill="#dedede"/><rect x="17.00" y="0" width="3.60" height="5.40" fill="#cccccc"/><rect x="20.40" y="0" width="3.60" height="5.40" fill="#fafafa"/><rect x="23.80" y="0" width="3.60" height="5.40" fill="#cccccc"/><rect x="27.20" y="0" width="3.60" height="5.40" fill="#b4b4b4"/><rect x="30.60" y="0" width="3.60" height="5.40" fill="#ffffff"/><rect x="34.00" y="0" width="3.60" height="5.40" fill="#cccccc"/><rect x="37.40" y="0" width="3.60" height="5.40" fill="#c4c4c4"/><rect x="40.80" y="0" width="3.60" height="5.40" fill="#c4c4c4"/><rect x="44.20" y="0" width="3.60" height="5.40" fill="#c4c4c4"/><rect x="47.60" y="0" width="3.60" height="5.40" fill="#c4c4c4"/><rect x="51.00" y="0" width="3.60" height="5.40" fill="#d4d4d4"/><rect x="54.40" y="0" width="3.60" height="5.40" fill="#f4f4f4"/><rect x="57.80" y="0" width="3.60" height="5.40" fill="#fafafa"/><rect x="61.20" y="0" width="3.60" height="5.40" fill="#b4b4b4"/><rect x="64.60" y="0" width="3.60" height="5.40" fill="#b4b4b4"/><rect x="68.00" y="0" width="3.60" height="5.40" fill="#dedede"/><rect x="71.40" y="0" width="3.60" height="5.40" fill="#cccccc"/><rect x="74.80" y="0" width="3.60" height="5.40" fill="#f4f4f4"/><rect x="78.20" y="0" width="3.60" height="5.40" fill="#c4c4c4"/><rect x="81.60" y="0" width="3.60" height="5.40" fill="#e8e8e8"/><rect x="85.00" y="0" width="3.60" height="5.40" fill="#ffffff"/><rect x="88.40" y="0" width="3.60" height="5.40" fill="#b4b4b4"/><rect x="91.80" y="0" width="3.60" height="5.40" fill="#d4d4d4"/><rect x="95.20" y="0" width="3.60" height="5.40" fill="#b4b4b4"/><rect x="98.60" y="0" width="3.60" height="5.40" fill="#ffffff"/><rect x="102.00" y="0" width="3.60" height="5.40" fill="#d4d4d4"/><rect x="105.40" y="0" width="3.60" height="5.40" fill="#f4f4f4"/><rect x="108.80" y="0" width="3.60" height="5.40" fill="#b4b4b4"/><rect x="112.20" y="0" width="3.60" height="5.40" fill="#e8e8e8"/><rect x="115.60" y="0" width="3.60" height="5.40" fill="#b4b4b4"/><rect x="119.00" y="0" width="3.60" height="5.40" fill="#fafafa"/><rect x="122.40" y="0" width="3.60" height="5.40" fill="#cccccc"/><rect x="125.80" y="0" width="3.60" height="5.40" fill="#e8e8e8"/><rect x="129.20" y="0" width="3.60" height="5.40" fill="#d4d4d4"/><rect x="132.60" y="0" width="3.60" height="5.40" fill="#e8e8e8"/><rect x="136.00" y="0" width="3.60" height="5.40" fill="#c4c4c4"/><rect x="139.40" y="0" width="3.60" height="5.40" fill="#ffffff"/><rect x="142.80" y="0" width="3.60" height="5.40" fill="#c4c4c4"/><rect x="146.20" y="0" width="3.60" height="5.40" fill="#fafafa"/><rect x="149.60" y="0" width="3.60" height="5.40" fill="#fafafa"/><rect x="153.00" y="0" width="3.60" height="5.40" fill="#dedede"/><rect x="156.40" y="0" width="3.60" height="5.40" fill="#d4d4d4"/><rect x="159.80" y="0" width="3.60" height="5.40" fill="#ffffff"/><rect x="163.20" y="0" width="3.60" height="5.40" fill="#f4f4f4"/><rect x="166.60" y="0" width="3.60" height="5.40" fill="#fafafa"/><rect x="170.00" y="0" width="3.60" height="5.40" fill="#e8e8e8"/><rect x="173.40" y="0" width="3.60" height="5.40" fill="#b4b4b4"/><rect x="176.80" y="0" width="3.60" height="5.40" fill="#c4c4c4"/><rect x="180.20" y="0" width="3.60" height="5.40" fill="#f4f4f4"/><rect x="183.60" y="0" width="3.60" height="5.40" fill="#dedede"/><rect x="187.00" y="0" width="3.60" height="5.40" fill="#d4d4d4"/><rect x="190.40" y="0" width="3.60" height="5.40" fill="#e8e8e8"/><rect x="193.80" y="0" width="3.60" height="5.40" fill="#e8e8e8"/><rect x="197.20" y="0" width="3.60" height="5.40" fill="#e8e8e8"/><rect x="200.60" y="0" width="3.60" height="5.40" fill="#cccccc"/><rect x="204.00" y="0" width="3.60" height="5.40" fill="#b4b4b4"/><rect x="207.40" y="0" width="3.60" height="5.40" fill="#ffffff"/><rect x="210.80" y="0" width="3.60" height="5.40" fill="#ffffff"/><rect x="214.20" y="0" width="3.60" height="5.40" fill="#d4d4d4"/><rect x="217.60" y="0" width="3.60" height="5.40" fill="#dedede"/><rect x="221.00" y="0" width="3.60" height="5.40" fill="#d4d4d4"/><rect x="224.40" y="0" width="3.60" height="5.40" fill="#d4d4d4"/><rect x="227.80" y="0" width="3.60" height="5.40" fill="#fafafa"/><rect x="231.20" y="0" width="3.60" height="5.40" fill="#b4b4b4"/><rect x="234.60" y="0" width="3.60" height="5.40" fill="#c4c4c4"/><rect x="238.00" y="0" width="3.60" height="5.40" fill="#d4d4d4"/><rect x="241.40" y="0" width="3.60" height="5.40" fill="#cccccc"/><rect x="244.80" y="0" width="3.60" height="5.40" fill="#dedede"/><rect x="248.20" y="0" width="3.60" height="5.40" fill="#f4f4f4"/><rect x="251.60" y="0" width="3.60" height="5.40" fill="#ffffff"/><rect x="255.00" y="0" width="3.60" height="5.40" fill="#f4f4f4"/><rect x="258.40" y="0" width="3.60" height="5.40" fill="#b4b4b4"/><rect x="261.80" y="0" width="3.60" height="5.40" fill="#c4c4c4"/><rect x="265.20" y="0" width="3.60" height="5.40" fill="#c4c4c4"/><rect x="268.60" y="0" width="3.60" height="5.40" fill="#f4f4f4"/><rect x="272.00" y="0" width="3.60" height="5.40" fill="#e8e8e8"/><rect x="275.40" y="0" width="3.60" height="5.40" fill="#fafafa"/><rect x="278.80" y="0" width="3.60" height="5.40" fill="#b4b4b4"/><rect x="282.20" y="0" width="3.60" height="5.40" fill="#e8e8e8"/><rect x="285.60" y="0" width="3.60" height="5.40" fill="#cccccc"/><rect x="289.00" y="0" width="3.60" height="5.40" fill="#e8e8e8"/><rect x="292.40" y="0" width="3.60" height="5.40" fill="#e8e8e8"/><rect x="295.80" y="0" width="3.60" height="5.40" fill="#fafafa"/><rect x="299.20" y="0" width="3.60" height="5.40" fill="#cccccc"/><rect x="302.60" y="0" width="3.60" height="5.40" fill="#ffffff"/><rect x="306.00" y="0" width="3.60" height="5.40" fill="#e8e8e8"/><rect x="309.40" y="0" width="3.60" height="5.40" fill="#d4d4d4"/><rect x="312.80" y="0" width="3.60" height="5.40" fill="#f4f4f4"/><rect x="316.20" y="0" width="3.60" height="5.40" fill="#b4b4b4"/><rect x="319.60" y="0" width="3.60" height="5.40" fill="#e8e8e8"/><rect x="323.00" y="0" width="3.60" height="5.40" fill="#c4c4c4"/><rect x="326.40" y="0" width="3.60" height="5.40" fill="#fafafa"/><rect x="329.80" y="0" width="3.60" height="5.40" fill="#ffffff"/><rect x="333.20" y="0" width="3.60" height="5.40" fill="#d4d4d4"/><rect x="336.60" y="0" width="3.60" height="5.40" fill="#ffffff"/><rect x="340.00" y="0" width="3.60" height="5.40" fill="#b4b4b4"/><rect x="343.40" y="0" width="3.60" height="5.40" fill="#b4b4b4"/><rect x="346.80" y="0" width="3.60" height="5.40" fill="#fafafa"/><rect x="350.20" y="0" width="3.60" height="5.40" fill="#dedede"/><rect x="353.60" y="0" width="3.60" height="5.40" fill="#d4d4d4"/><rect x="357.00" y="0" width="3.60" height="5.40" fill="#b4b4b4"/><rect x="360.40" y="0" width="3.60" height="5.40" fill="#ffffff"/><rect x="363.80" y="0" width="3.60" height="5.40" fill="#dedede"/></svg>
<svg style="left:762.12px;top:308.04px;opacity:1.0;filter:blur(0.6px)" width="168.42" height="5.40"><rect x="0.00" y="0" width="3.60" height="5.40" fill="#e6e6e6"/><rect x="3.40" y="0" width="3.60" height="5.40" fill="#dedede"/><rect x="6.80" y="0" width="3.60" height="5.40" fill="#b4b4b4"/><rect x="10.20" y="0" width="3.60" height="5.40" fill="#e6e6e6"/><rect x="13.60" y="0" width="3.60" height="5.40" fill="#d8d8d8"/><rect x="17.00" y="0" width="3.60" height="5.40" fill="#dedede"/><rect x="20.40" y="0" width="3.60" height="5.40" fill="#b4b4b4"/><rect x="23.80" y="0" width="3.60" height="5.40" fill="#d8d8d8"/><rect x="27.20" y="0" width="3.60" height="5.40" fill="#e6e6e6"/><rect x="30.60" y="0" width="3.60" height="5.40" fill="#b4b4b4"/><rect x="34.00" y="0" width="3.60" height="5.40" fill="#c4c4c4"/><rect x="37.40" y="0" width="3.60" height="5.40" fill="#f0f0f0"/><rect x="40.80" y="0" width="3.60" height="5.40" fill="#e6e6e6"/><rect x="44.20" y="0" width="3.60" height="5.40" fill="#dedede"/><rect x="47.60" y="0" width="3.60" height="5.40" fill="#c4c4c4"/><rect x="51.00" y="0" width="3.60" height="5.40" fill="#a8a8a8"/><rect x="54.40" y="0" width="3.60" height="5.40" fill="#d8d8d8"/><rect x="57.80" y="0" width="3.60" height="5.40" fill="#c4c4c4"/><rect x="61.20" y="0" width="3.60" height="5.40" fill="#dedede"/><rect x="64.60" y="0" width="3.60" height="5.40" fill="#f0f0f0"/><rect x="68.00" y="0" width="3.60" height="5.40" fill="#f0f0f0"/><rect x="71.40" y="0" width="3.60" height="5.40" fill="#b4b4b4"/><rect x="74.80" y="0" width="3.60" height="5.40" fill="#dedede"/><rect x="78.20" y="0" width="3.60" height="5.40" fill="#c4c4c4"/><rect x="81.60" y="0" width="3.60" height="5.40" fill="#f0f0f0"/><rect x="85.00" y="0" width="3.60" height="5.40" fill="#e6e6e6"/><rect x="88.40" y="0" width="3.60" height="5.40" fill="#f0f0f0"/><rect x="91.80" y="0" width="3.60" height="5.40" fill="#b4b4b4"/><rect x="95.20" y="0" width="3.60" height="5.40" fill="#d8d8d8"/><rect x="98.60" y="0" width="3.60" height="5.40" fill="#e6e6e6"/><rect x="102.00" y="0" width="3.60" height="5.40" fill="#dedede"/><rect x="105.40" y="0" width="3.60" height="5.40" fill="#e6e6e6"/><rect x="108.80" y="0" width="3.60" height="5.40" fill="#dedede"/><rect x="112.20" y="0" width="3.60" height="5.40" fill="#e6e6e6"/><rect x="115.60" y="0" width="3.60" height="5.40" fill="#cfcfcf"/><rect x="119.00" y="0" width="3.60" height="5.40" fill="#a8a8a8"/><rect x="122.40" y="0" width="3.60" height="5.40" fill="#a8a8a8"/><rect x="125.80" y="0" width="3.60" height="5.40" fill="#b4b4b4"/><rect x="129.20" y="0" width="3.60" height="5.40" fill="#e6e6e6"/><rect x="132.60" y="0" width="3.60" height="5.40" fill="#d8d8d8"/><rect x="136.00" y="0" width="3.60" height="5.40" fill="#cfcfcf"/><rect x="139.40" y="0" width="3.60" height="5.40" fill="#cfcfcf"/><rect x="142.80" y="0" width="3.60" height="5.40" fill="#f0f0f0"/><rect x="146.20" y="0" width="3.60" height="5.40" fill="#e6e6e6"/><rect x="149.60" y="0" width="3.60" height="5.40" fill="#cfcfcf"/><rect x="153.00" y="0" width="3.60" height="5.40" fill="#dedede"/><rect x="156.40" y="0" width="3.60" height="5.40" fill="#c4c4c4"/><rect x="159.80" y="0" width="3.60" height="5.40" fill="#f0f0f0"/><rect x="163.20" y="0" width="3.60" height="5.40" fill="#dedede"/><rect x="166.60" y="0" width="3.60" height="5.40" fill="#dedede"/></svg>
<span class="m" style="left:931.78px;top:308px;font-size:6.88px;color:#141414;">, len=80, vrf=0,</span>
<svg style="left:608.56px;top:332.88px;opacity:1.0;filter:blur(0.6px)" width="169.25" height="5.40"><rect x="0.00" y="0" width="3.60" height="5.40" fill="#c4c4c4"/><rect x="3.40" y="0" width="3.60" height="5.40" fill="#e6e6e6"/><rect x="6.80" y="0" width="3.60" height="5.40" fill="#d8d8d8"/><rect x="10.20" y="0" width="3.60" height="5.40" fill="#b4b4b4"/><rect x="13.60" y="0" width="3.60" height="5.40" fill="#dedede"/><rect x="17.00" y="0" width="3.60" height="5.40" fill="#cfcfcf"/><rect x="20.40" y="0" width="3.60" height="5.40" fill="#c4c4c4"/><rect x="23.80" y="0" width="3.60" height="5.40" fill="#cfcfcf"/><rect x="27.20" y="0" width="3.60" height="5.40" fill="#b4b4b4"/><rect x="30.60" y="0" width="3.60" height="5.40" fill="#f0f0f0"/><rect x="34.00" y="0" width="3.60" height="5.40" fill="#a8a8a8"/><rect x="37.40" y="0" width="3.60" height="5.40" fill="#cfcfcf"/><rect x="40.80" y="0" width="3.60" height="5.40" fill="#b4b4b4"/><rect x="44.20" y="0" width="3.60" height="5.40" fill="#b4b4b4"/><rect x="47.60" y="0" width="3.60" height="5.40" fill="#c4c4c4"/><rect x="51.00" y="0" width="3.60" height="5.40" fill="#a8a8a8"/><rect x="54.40" y="0" width="3.60" height="5.40" fill="#cfcfcf"/><rect x="57.80" y="0" width="3.60" height="5.40" fill="#a8a8a8"/><rect x="61.20" y="0" width="3.60" height="5.40" fill="#e6e6e6"/><rect x="64.60" y="0" width="3.60" height="5.40" fill="#d8d8d8"/><rect x="68.00" y="0" width="3.60" height="5.40" fill="#cfcfcf"/><rect x="71.40" y="0" width="3.60" height="5.40" fill="#e6e6e6"/><rect x="74.80" y="0" width="3.60" height="5.40" fill="#d8d8d8"/><rect x="78.20" y="0" width="3.60" height="5.40" fill="#dedede"/><rect x="81.60" y="0" width="3.60" height="5.40" fill="#f0f0f0"/><rect x="85.00" y="0" width="3.60" height="5.40" fill="#e6e6e6"/><rect x="88.40" y="0" width="3.60" height="5.40" fill="#dedede"/><rect x="91.80" y="0" width="3.60" height="5.40" fill="#d8d8d8"/><rect x="95.20" y="0" width="3.60" height="5.40" fill="#cfcfcf"/><rect x="98.60" y="0" width="3.60" height="5.40" fill="#e6e6e6"/><rect x="102.00" y="0" width="3.60" height="5.40" fill="#f0f0f0"/><rect x="105.40" y="0" width="3.60" height="5.40" fill="#a8a8a8"/><rect x="108.80" y="0" width="3.60" height="5.40" fill="#d8d8d8"/><rect x="112.20" y="0" width="3.60" height="5.40" fill="#a8a8a8"/><rect x="115.60" y="0" width="3.60" height="5.40" fill="#b4b4b4"/><rect x="119.00" y="0" width="3.60" height="5.40" fill="#cfcfcf"/><rect x="122.40" y="0" width="3.60" height="5.40" fill="#e6e6e6"/><rect x="125.80" y="0" width="3.60" height="5.40" fill="#e6e6e6"/><rect x="129.20" y="0" width="3.60" height="5.40" fill="#e6e6e6"/><rect x="132.60" y="0" width="3.60" height="5.40" fill="#b4b4b4"/><rect x="136.00" y="0" width="3.60" height="5.40" fill="#e6e6e6"/><rect x="139.40" y="0" width="3.60" height="5.40" fill="#b4b4b4"/><rect x="142.80" y="0" width="3.60" height="5.40" fill="#c4c4c4"/><rect x="146.20" y="0" width="3.60" height="5.40" fill="#c4c4c4"/><rect x="149.60" y="0" width="3.60" height="5.40" fill="#dedede"/><rect x="153.00" y="0" width="3.60" height="5.40" fill="#cfcfcf"/><rect x="156.40" y="0" width="3.60" height="5.40" fill="#e6e6e6"/><rect x="159.80" y="0" width="3.60" height="5.40" fill="#b4b4b4"/><rect x="163.20" y="0" width="3.60" height="5.40" fill="#e6e6e6"/><rect x="166.60" y="0" width="3.60" height="5.40" fill="#b4b4b4"/></svg>
<span class="m" style="left:778.22px;top:333px;font-size:6.88px;color:#141414;">,ifindex=3,vrf=0,len=1812....</span>
<svg style="left:493px;top:339px" width="502" height="12"><rect x="0.90" y="0.80" width="501.10" height="10.80" fill="#f3f3f3"/></svg>
<svg style="left:494px;top:74px" width="2" height="277"><rect x="0.30" y="0.20" width="1.20" height="276.00" fill="#7a7a7a"/></svg>
<svg style="left:504px;top:344px" width="26" height="2"><rect x="0.80" y="0.60" width="25.20" height="0.90" fill="#8a8a8a"/></svg>
<svg style="left:493px;top:350px" width="502" height="2"><rect x="0.90" y="0.60" width="501.10" height="0.90" fill="#b4b4b4"/></svg>
<div style="left:493.90px;top:351.50px;width:501.10px;height:11.50px;background:#f4f4f4;border-radius:0 0 0 3px;"></div>
<svg style="left:753px;top:352px" width="1" height="11"><rect x="0.00" y="0.00" width="0.70" height="11.00" fill="#dcdcdc"/></svg>
<span class="s" style="left:495.00px;top:355px;font-size:6.8px;color:#222;letter-spacing:-0.234px;">Normal text file</span>
<span class="s" style="left:755.60px;top:355px;font-size:6.8px;color:#222;letter-spacing:-0.373px;">length : 41,534</span>
<span class="s" style="left:801.00px;top:355px;font-size:6.8px;color:#222;letter-spacing:-0.418px;">lines : 193</span>
<span class="s" style="left:869.00px;top:355px;font-size:6.8px;color:#222;letter-spacing:-0.460px;">Ln : 157</span>
<span class="s" style="left:896.00px;top:355px;font-size:6.8px;color:#222;letter-spacing:-0.392px;">Col : 62</span>
<span class="s" style="left:922.80px;top:355px;font-size:6.8px;color:#222;letter-spacing:-0.590px;">Pos : 21,022</span>
<svg style="left:0;top:0" width="999" height="549" viewBox="0 0 999 549"><defs><filter id="sh" x="-20%" y="-20%" width="140%" height="140%"><feDropShadow dx="1.5" dy="1.5" stdDeviation="0.7" flood-color="#787878" flood-opacity="0.65"/></filter><filter id="sh2" x="-20%" y="-20%" width="140%" height="140%"><feDropShadow dx="0.8" dy="0.8" stdDeviation="0.8" flood-color="#000" flood-opacity="0.5"/></filter></defs><rect x="14.6" y="417.7" width="360" height="64.9" fill="none" stroke="#e02424" stroke-width="0.9" filter="url(#sh)"/><path d="M509.3 266.2 Q660 266.6 824.3 264.8" stroke="#e83a3a" stroke-width="1.1" fill="none"/><path d="M420.81 373.24 L510.65 275.41 L512.78 277.37 L516.60 267.30 L506.89 271.96 L509.03 273.92 L419.19 371.76 Z" fill="#2a12f4" filter="url(#sh)"/><path d="M392.59 396.90 L325.40 465.27 L323.26 463.16 L319.10 473.10 L328.96 468.77 L326.82 466.67 L394.01 398.30 Z" fill="#2a12f4" filter="url(#sh)"/><path d="M424.5 402.8 L409 391.9 L436 402.8 L570 402.8 Q575.4 402.8 575.4 408.2 L575.4 469.4 Q575.4 474.8 570 474.8 L424.4 474.8 Q419 474.8 419 469.4 L419 408.2 Q419 402.8 424.5 402.8 Z" fill="#ffffff" filter="url(#sh2)"/><path d="M529.7 279.9 L529.7 288.6 L531.8 286.8 L533.4 290.2 L534.6 289.6 L533 286.4 L535.8 286.2 Z" fill="#fff" stroke="#333" stroke-width="0.6"/></svg>
<span class="s" style="left:425.20px;top:430px;font-size:7.5px;color:#3a4254;letter-spacing:0.018px;">Signature verification fails because there is</span>
<span class="s" style="left:475.60px;top:438px;font-size:7.5px;color:#3a4254;letter-spacing:0.018px;">no signature</span>
</div></body></html>
